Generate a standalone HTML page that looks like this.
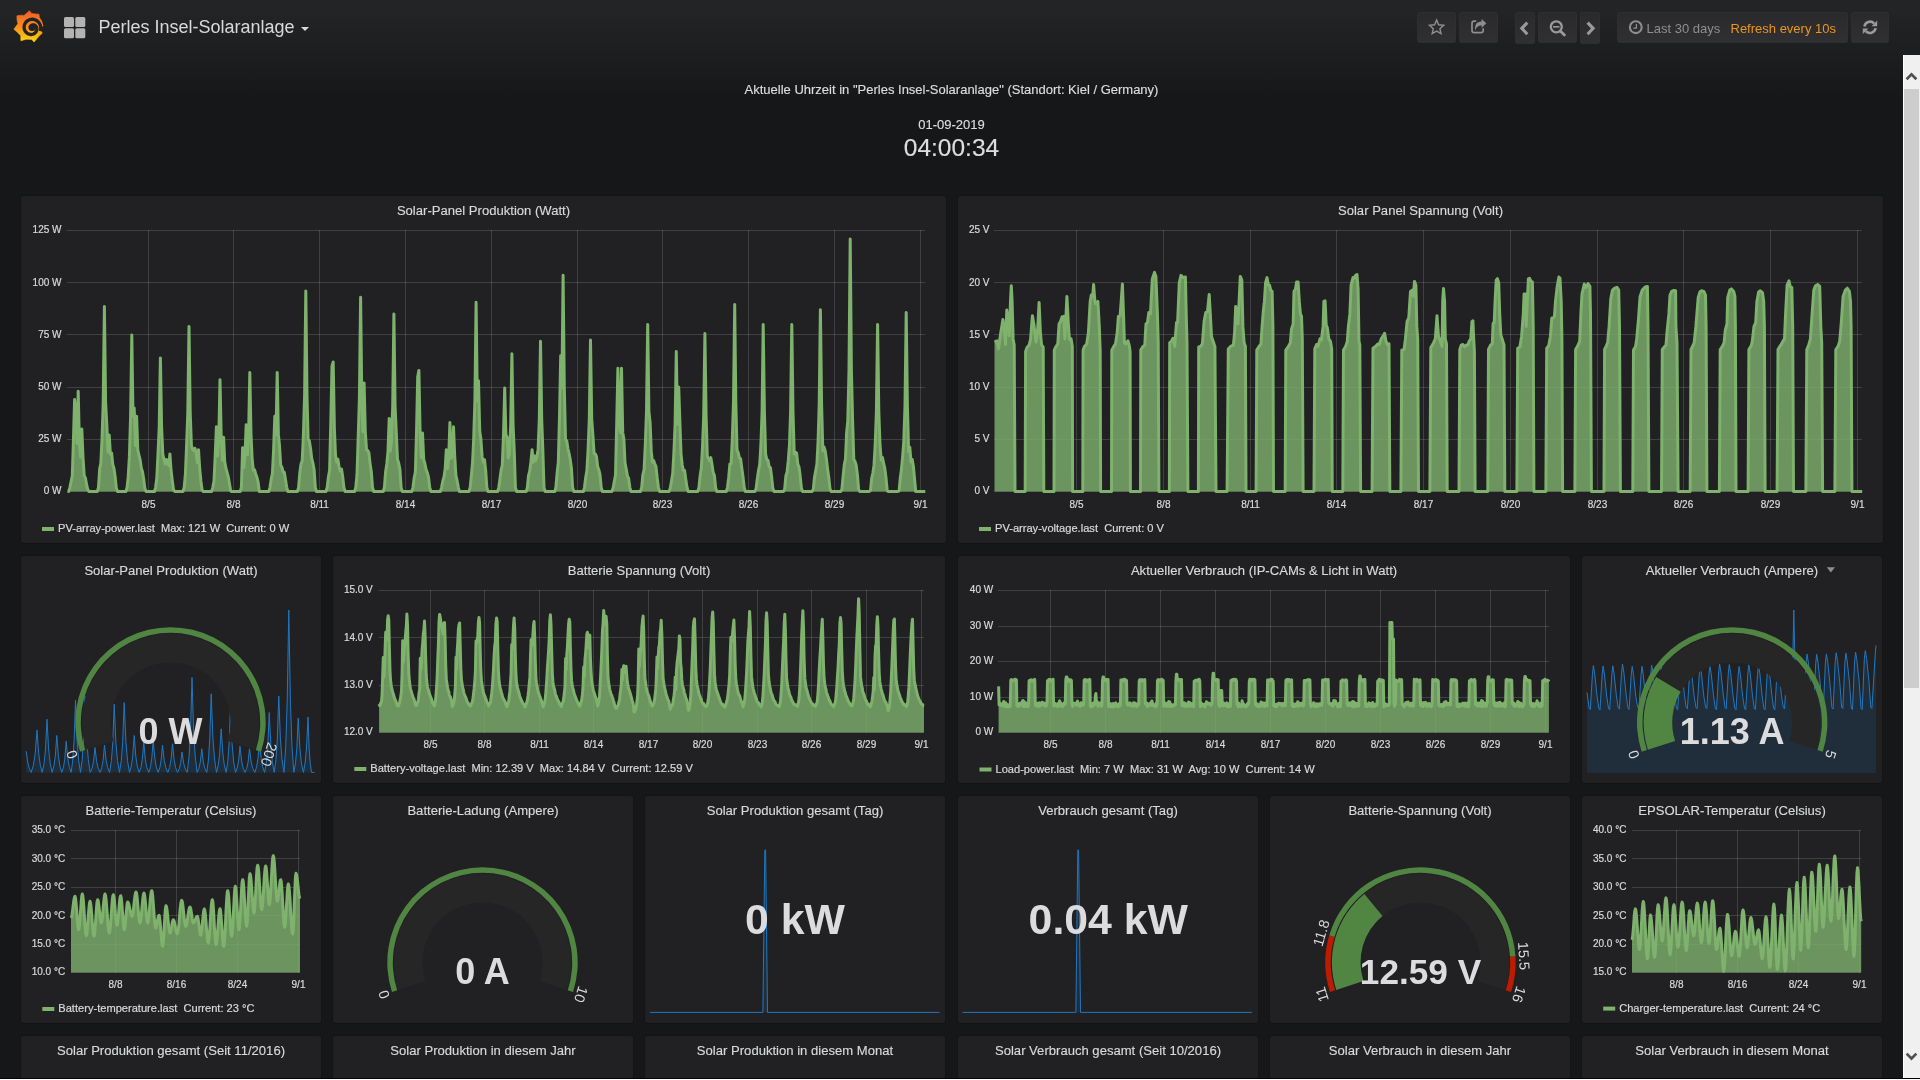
<!DOCTYPE html>
<html><head><meta charset="utf-8"><title>Grafana - Perles Insel-Solaranlage</title><style>
html,body{margin:0;padding:0;width:1920px;height:1080px;overflow:hidden;background:#161719;font-family:"Liberation Sans",sans-serif;color:#d8d9da}
#bg{position:absolute;left:0;top:0;width:1920px;height:1078px;background:linear-gradient(180deg,#222426 10px,#161719 100px)}
#page{position:absolute;left:0;top:0;width:1920px;height:1078px;overflow:hidden;will-change:transform}
.p{position:absolute;box-sizing:border-box;background:#212124;border:1px solid #141414;border-radius:3px}
.t{position:absolute;left:0;right:0;top:7px;text-align:center;font-size:13.08px;line-height:15px;color:#d8d9da;white-space:nowrap;-webkit-text-stroke:0.15px #d8d9da}
.nb{position:absolute;box-sizing:border-box;top:12px;height:31px;border:1px solid #2f2f32;border-radius:2px;background:linear-gradient(180deg,#2a2a2c,#303032)}
.nb svg{position:absolute}
#main{position:absolute;left:0;top:0}
text{font-family:"Liberation Sans",sans-serif}
.c{position:absolute;left:20px;width:1863px;text-align:center;white-space:nowrap;color:#dcddde;-webkit-text-stroke:0.15px #dcddde}

</style></head><body><div id="bg"></div><div id="page">
<div class="p" style="left:20px;top:195px;width:927px;height:349px"><div class="t">Solar-Panel Produktion (Watt)</div></div>
<div class="p" style="left:957px;top:195px;width:927px;height:349px"><div class="t">Solar Panel Spannung (Volt)</div></div>
<div class="p" style="left:20px;top:555px;width:302px;height:229px"><div class="t">Solar-Panel Produktion (Watt)</div></div>
<div class="p" style="left:332px;top:555px;width:614px;height:229px"><div class="t">Batterie Spannung (Volt)</div></div>
<div class="p" style="left:957px;top:555px;width:614px;height:229px"><div class="t">Aktueller Verbrauch (IP-CAMs &amp; Licht in Watt)</div></div>
<div class="p" style="left:1581px;top:555px;width:302px;height:229px"><div class="t">Aktueller Verbrauch (Ampere)</div></div>
<div class="p" style="left:20px;top:795px;width:302px;height:229px"><div class="t">Batterie-Temperatur (Celsius)</div></div>
<div class="p" style="left:332px;top:795px;width:302px;height:229px"><div class="t">Batterie-Ladung (Ampere)</div></div>
<div class="p" style="left:644px;top:795px;width:302px;height:229px"><div class="t">Solar Produktion gesamt (Tag)</div></div>
<div class="p" style="left:957px;top:795px;width:302px;height:229px"><div class="t">Verbrauch gesamt (Tag)</div></div>
<div class="p" style="left:1269px;top:795px;width:302px;height:229px"><div class="t">Batterie-Spannung (Volt)</div></div>
<div class="p" style="left:1581px;top:795px;width:302px;height:229px"><div class="t">EPSOLAR-Temperatur (Celsius)</div></div>
<div class="p" style="left:20px;top:1035px;width:302px;height:56px"><div class="t">Solar Produktion gesamt (Seit 11/2016)</div></div>
<div class="p" style="left:332px;top:1035px;width:302px;height:56px"><div class="t">Solar Produktion in diesem Jahr</div></div>
<div class="p" style="left:644px;top:1035px;width:302px;height:56px"><div class="t">Solar Produktion in diesem Monat</div></div>
<div class="p" style="left:957px;top:1035px;width:302px;height:56px"><div class="t">Solar Verbrauch gesamt (Seit 10/2016)</div></div>
<div class="p" style="left:1269px;top:1035px;width:302px;height:56px"><div class="t">Solar Verbrauch in diesem Jahr</div></div>
<div class="p" style="left:1581px;top:1035px;width:302px;height:56px"><div class="t">Solar Verbrauch in diesem Monat</div></div>
<div class="c" style="top:82px;font-size:13px;line-height:15px">Aktuelle Uhrzeit in "Perles Insel-Solaranlage" (Standort: Kiel / Germany)</div>
<div class="c" style="top:117px;font-size:13px;line-height:15px">01-09-2019</div>
<div class="c" style="top:133.7px;font-size:24.5px;line-height:28px">04:00:34</div>
<svg style="position:absolute;left:0;top:0" width="60" height="55"><defs><linearGradient id="lg" x1="0" y1="10.6" x2="0" y2="42.2" gradientUnits="userSpaceOnUse"><stop offset="0" stop-color="#f05a28"/><stop offset="0.5" stop-color="#f78d1e"/><stop offset="1" stop-color="#fdd70c"/></linearGradient></defs><path d="M29.29 10.73 L31.85 13.45 L35.68 13.88 L39.01 14.14 L39.43 17.54 L41.65 21.04 L43.01 25.81 L41.01 27.85 L40.88 29.98 L42.20 33.30 L39.30 35.86 L37.39 38.07 L34.06 42.03 L31.76 39.43 L26.31 39.18 L20.90 40.75 L20.69 35.60 L17.16 32.11 L13.83 29.21 L17.88 23.68 L17.03 19.67 L16.86 15.84 L20.78 15.16 L23.97 15.41 L26.74 13.11Z" fill="url(#lg)" stroke="url(#lg)" stroke-width="0.6" stroke-linejoin="round"/><path d="M40.31 31.06 L40.65 29.53 L40.73 27.99 L40.59 26.46 L40.21 24.99 L39.59 23.61 L38.74 22.37 L37.68 21.29 L36.47 20.43 L35.13 19.78 L33.70 19.39 L32.23 19.24 L30.77 19.38 L29.36 19.77 L28.06 20.39 L26.89 21.22 L25.89 22.23 L25.09 23.40 L24.50 24.68 L24.16 26.03 L24.05 27.40 L24.23 28.76 L24.64 30.05 L25.27 31.22 L26.08 32.25 L27.04 33.11 L28.12 33.78 L29.29 34.24 L30.49 34.48 L31.70 34.51 L32.86 34.25 L33.91 33.77 L34.84 33.13 L35.60 32.37 L36.19 31.51 L36.60 30.59 L36.82 29.65 L36.87 28.73 L36.75 27.85 L36.46 27.04 L36.05 26.34 L35.54 25.76 L34.96 25.32 L34.34 25.01 L33.71 24.84 L33.10 24.81 L32.53 24.89 L32.03 25.08 L31.61 25.34 L31.28 25.67 L31.06 26.03 L30.93 26.39 L30.90 26.75 L30.97 27.07 L31.10 27.34" fill="none" stroke="#222326" stroke-width="3.3" stroke-linecap="butt" stroke-linejoin="round"/><circle cx="32.06" cy="27.51" r="3.6" fill="#222326"/><path d="M27.38 29.55 Q29.29 32.11 33.34 31.34" fill="none" stroke="url(#lg)" stroke-width="1.1" stroke-linecap="round"/></svg>
<div style="position:absolute;left:98.5px;top:17px;font-size:18px;line-height:21px;color:#d8d9da;white-space:nowrap">Perles Insel-Solaranlage</div>
<div style="position:absolute;left:301px;top:27px;width:0;height:0;border-left:4px solid transparent;border-right:4px solid transparent;border-top:4px solid #d8d9da"></div>
<svg style="position:absolute;left:64px;top:17px" width="22" height="22"><g fill="#b3b3b3"><rect x="0" y="0" width="10" height="10" rx="1.5"/><rect x="11.3" y="0" width="10" height="10" rx="1.5"/><rect x="0" y="11.3" width="10" height="10" rx="1.5"/><rect x="11.3" y="11.3" width="10" height="10" rx="1.5"/></g></svg>
<div class="nb" style="left:1417px;width:39px;height:31px"></div>
<div class="nb" style="left:1459px;width:39px;height:31px"></div>
<div class="nb" style="left:1515px;width:20px;height:32px"></div>
<div class="nb" style="left:1538px;width:39px;height:31px"></div>
<div class="nb" style="left:1580px;width:20px;height:32px"></div>
<div class="nb" style="left:1617px;width:231px;height:31px"></div>
<div class="nb" style="left:1851px;width:38px;height:31px"></div>
<div style="position:absolute;left:1646.5px;top:20.5px;font-size:13px;line-height:15px;color:#8e8e8e;white-space:nowrap">Last 30 days</div>
<div style="position:absolute;left:1730.5px;top:20.5px;font-size:13px;line-height:15px;color:#eb9420;white-space:nowrap">Refresh every 10s</div>
<svg style="position:absolute;left:0;top:0" width="1920" height="55"><path d="M1436.60 20.10 L1438.66 24.77 L1443.73 25.28 L1439.93 28.68 L1441.01 33.67 L1436.60 31.10 L1432.19 33.67 L1433.27 28.68 L1429.47 25.28 L1434.54 24.77Z" fill="none" stroke="#8e8e8e" stroke-width="1.4" stroke-linejoin="miter"/><path d="M1483.2 28.2V30.4A2.2 2.2 0 0 1 1481 32.6H1474.2A2.2 2.2 0 0 1 1472 30.4V23.4A2.2 2.2 0 0 1 1474.2 21.2H1476.2" fill="none" stroke="#8e8e8e" stroke-width="1.7"/><path d="M1486.3 23.3L1481.6 18.9V21.6C1476.6 21.7 1474.6 24.8 1475.2 30.6C1476.3 27.1 1478 25.4 1481.6 25.3V27.9Z" fill="#8e8e8e"/><path d="M1527.3 22.6L1521.8 28.3L1527.3 34.2" fill="none" stroke="#9a9a9a" stroke-width="3.1"/><path d="M1587.6 22.6L1593.1 28.3L1587.6 34.2" fill="none" stroke="#9a9a9a" stroke-width="3.1"/><circle cx="1556.3" cy="26.8" r="5.5" fill="none" stroke="#9a9a9a" stroke-width="2.3"/><path d="M1560.3 30.9L1564.4 35" stroke="#9a9a9a" stroke-width="2.8" stroke-linecap="round"/><rect x="1553.1" y="26" width="6.4" height="1.6" fill="#9a9a9a"/><circle cx="1635.8" cy="27.2" r="5.9" fill="none" stroke="#8e8e8e" stroke-width="2.1"/><path d="M1636.4 23.9V28.1H1633.2" fill="none" stroke="#8e8e8e" stroke-width="1.3"/><path d="M1864.45 26.52 A5.6 5.6 0 0 1 1874.16 23.55" fill="none" stroke="#9a9a9a" stroke-width="2.6"/><path d="M1875.55 28.08 A5.6 5.6 0 0 1 1865.84 31.05" fill="none" stroke="#9a9a9a" stroke-width="2.6"/><path d="M1877.2 20.6V26.2H1871.6Z" fill="#9a9a9a"/><path d="M1862.8 34V28.4H1868.4Z" fill="#9a9a9a"/></svg>
<svg id="main" width="1920" height="1078" viewBox="0 0 1920 1078">
<g stroke="rgba(255,255,255,0.14)" stroke-width="1" fill="none" shape-rendering="crispEdges"><path d="M67 491.5H925"/><path d="M67 439.5H925"/><path d="M67 387.5H925"/><path d="M67 334.5H925"/><path d="M67 282.5H925"/><path d="M67 230.5H925"/><path d="M148.5 230V492"/><path d="M233.5 230V492"/><path d="M319.5 230V492"/><path d="M405.5 230V492"/><path d="M491.5 230V492"/><path d="M577.5 230V492"/><path d="M662.5 230V492"/><path d="M748.5 230V492"/><path d="M834.5 230V492"/><path d="M920.5 230V492"/></g>
<path d="M67.5 491.5 68.7 491.5 69.9 487.3 71.1 481.6 72.3 475.9 73.4 441 74.6 399.6 75.8 412.2 77 443.4 78.2 391.3 79.4 443.4 80.6 457 81.8 428.9 83 457 84.2 475.7 85.4 477.7 86.5 484.2 87.7 489.3 88.9 491.5 90.1 491.5 91.3 491.5 92.5 491.5 93.7 491.5 94.9 491.5 96.1 491.5 97.3 491.5 98.5 487.3 99.7 468.6 100.8 463.5 102 439.7 103.2 402.7 104.4 306.5 105.6 402.7 106.8 424.7 108 452.2 109.2 435.1 110.4 454.4 111.6 453 112.8 464.6 113.9 467.9 115.1 476.1 116.3 487.9 117.5 491.5 118.7 491.5 119.9 491.5 121.1 491.5 122.3 491.5 123.5 491.5 124.7 491.5 125.9 491.5 127.1 487.3 128.2 476.8 129.4 456.4 130.6 416.3 131.8 334.9 133 416.3 134.2 408 135.4 445.6 136.6 416.3 137.8 450.2 139 455.3 140.2 460.1 141.4 468.4 142.5 471.8 143.7 479.2 144.9 488.6 146.1 491.5 147.3 491.5 148.5 491.5 149.7 491.5 150.9 491.5 152.1 491.5 153.3 491.5 154.5 491.5 155.6 487.3 156.8 478.1 158 454.1 159.2 427.4 160.4 357.9 161.6 427.4 162.8 454.1 164 459.5 165.2 464.1 166.4 459.5 167.6 460.9 168.8 465.7 169.9 453.9 171.1 470.8 172.3 480.7 173.5 489.7 174.7 491.5 175.9 491.5 177.1 491.5 178.3 491.5 179.5 491.5 180.7 491.5 181.9 491.5 183 491.5 184.2 487.3 185.4 474.2 186.6 445.3 187.8 412.3 189 326.5 190.2 412.3 191.4 445.3 192.6 449.5 193.8 450.6 195 448.3 196.2 453.2 197.3 462.5 198.5 449.7 199.7 468.5 200.9 481 202.1 490.1 203.3 491.5 204.5 491.5 205.7 491.5 206.9 491.5 208.1 491.5 209.3 491.5 210.5 491.5 211.6 491.5 212.8 487.3 214 481.1 215.2 455.9 216.4 426.8 217.6 455.9 218.8 437.9 220 379.8 221.2 437.9 222.4 460.2 223.6 437.2 224.7 461.6 225.9 468.2 227.1 472.3 228.3 476.8 229.5 484 230.7 491.1 231.9 491.5 233.1 491.5 234.3 491.5 235.5 491.5 236.7 491.5 237.9 491.5 239 491.5 240.2 491.5 241.4 487.3 242.6 447.7 243.8 467.4 245 454.8 246.2 424.7 247.4 454.8 248.6 434.4 249.8 372.5 251 434.4 252.1 458.1 253.3 470.2 254.5 469.8 255.7 473.7 256.9 477.2 258.1 482 259.3 491.5 260.5 491.5 261.7 491.5 262.9 491.5 264.1 491.5 265.3 491.5 266.4 491.5 267.6 491.5 268.8 491.5 270 487.3 271.2 479.1 272.4 473.7 273.6 450.2 274.8 416.3 276 434.4 277.2 372.5 278.4 434.4 279.5 445.6 280.7 465.3 281.9 467.2 283.1 472 284.3 472.3 285.5 479.5 286.7 487.3 287.9 491.5 289.1 491.5 290.3 491.5 291.5 491.5 292.7 491.5 293.8 491.5 295 491.5 296.2 491.5 297.4 491.5 298.6 487.3 299.8 473 301 464 302.2 460.7 303.4 435.4 304.6 395.3 305.8 291.1 307 395.3 308.1 439.3 309.3 440.8 310.5 448 311.7 458.3 312.9 463 314.1 469.6 315.3 487.3 316.5 491.5 317.7 491.5 318.9 491.5 320.1 491.5 321.2 491.5 322.4 491.5 323.6 491.5 324.8 491.5 326 491.5 327.2 487.3 328.4 477 329.6 470.2 330.8 422.6 332 366.2 333.2 362 334.4 429.4 335.5 455.3 336.7 462.3 337.9 459.2 339.1 467.1 340.3 471 341.5 469.1 342.7 476.7 343.9 487.3 345.1 491.5 346.3 491.5 347.5 491.5 348.6 491.5 349.8 491.5 351 491.5 352.2 491.5 353.4 491.5 354.6 491.5 355.8 487.3 357 474.7 358.2 437.1 359.4 398.3 360.6 297.3 361.8 398.3 362.9 431.8 364.1 382.9 365.3 431.8 366.5 449.7 367.7 450.5 368.9 452.8 370.1 463.6 371.3 471.6 372.5 487.3 373.7 491.5 374.9 491.5 376.1 491.5 377.2 491.5 378.4 491.5 379.6 491.5 380.8 491.5 382 491.5 383.2 491.5 384.4 487.3 385.6 472 386.8 464 388 451.3 389.2 418.4 390.3 451.3 391.5 441.8 392.7 406.3 393.9 314 395.1 406.3 396.3 433 397.5 459.3 398.7 463.2 399.9 469.3 401.1 487.3 402.3 491.5 403.5 491.5 404.6 491.5 405.8 491.5 407 491.5 408.2 491.5 409.4 491.5 410.6 491.5 411.8 491.5 413 487.3 414.2 477.8 415.4 472 416.6 428.3 417.7 376.7 418.9 370.4 420.1 433.4 421.3 457.6 422.5 433 423.7 459.3 424.9 463.7 426.1 469.5 427.3 472.6 428.5 477.2 429.7 487.3 430.9 491.5 432 491.5 433.2 491.5 434.4 491.5 435.6 491.5 436.8 491.5 438 491.5 439.2 491.5 440.4 491.5 441.6 487.3 442.8 481 444 476.9 445.2 468.5 446.3 449.7 447.5 468.5 448.7 458.4 449.9 422.6 451.1 458.4 452.3 455.9 453.5 426.8 454.7 455.9 455.9 475.4 457.1 480.6 458.3 487.3 459.4 491.5 460.6 491.5 461.8 491.5 463 491.5 464.2 491.5 465.4 491.5 466.6 491.5 467.8 491.5 469 491.5 470.2 487.3 471.4 475.2 472.6 461.8 473.7 438.5 474.9 400.7 476.1 302.3 477.3 400.7 478.5 380.8 479.7 430.6 480.9 439.3 482.1 456.7 483.3 462.3 484.5 459.7 485.7 470.7 486.8 487.3 488 491.5 489.2 491.5 490.4 491.5 491.6 491.5 492.8 491.5 494 491.5 495.2 491.5 496.4 491.5 497.6 491.5 498.8 487.3 500 478.6 501.1 470.1 502.3 465 503.5 434.7 504.7 388.1 505.9 434.7 507.1 437.2 508.3 458 509.5 452.9 510.7 425.4 511.9 353.7 513.1 425.4 514.3 452.9 515.4 487.3 516.6 491.5 517.8 491.5 519 491.5 520.2 491.5 521.4 491.5 522.6 491.5 523.8 491.5 525 491.5 526.2 491.5 527.4 487.3 528.5 475.6 529.7 471.1 530.9 462 532.1 449.7 533.3 462.3 534.5 455.9 535.7 460.6 536.9 456.6 538.1 449.4 539.3 419.3 540.5 341.2 541.7 419.3 542.8 449.4 544 487.3 545.2 491.5 546.4 491.5 547.6 491.5 548.8 491.5 550 491.5 551.2 491.5 552.4 491.5 553.6 491.5 554.8 491.5 555.9 487.3 557.1 473.1 558.3 462.5 559.5 416.9 560.7 355.8 561.9 387.7 563.1 275.2 564.3 387.7 565.5 439.3 566.7 440.7 567.9 448.5 569.1 453.5 570.2 459.2 571.4 468 572.6 487.3 573.8 491.5 575 491.5 576.2 491.5 577.4 491.5 578.6 491.5 579.8 491.5 581 491.5 582.2 491.5 583.4 491.5 584.5 487.3 585.7 477.5 586.9 470.6 588.1 449.1 589.3 418.8 590.5 340.1 591.7 418.8 592.9 435.1 594.1 453.6 595.3 453.9 596.5 456.3 597.6 466.5 598.8 469.6 600 474.6 601.2 487.3 602.4 491.5 603.6 491.5 604.8 491.5 606 491.5 607.2 491.5 608.4 491.5 609.6 491.5 610.8 491.5 611.9 491.5 613.1 488.1 614.3 481.6 615.5 475 616.7 423.7 617.9 368.3 619.1 423.7 620.3 432.4 621.5 368.3 622.7 432.4 623.9 439.3 625 462.8 626.2 468.7 627.4 476 628.6 478.2 629.8 487.3 631 491.5 632.2 491.5 633.4 491.5 634.6 491.5 635.8 491.5 637 491.5 638.2 491.5 639.3 491.5 640.5 491.5 641.7 487.3 642.9 474.5 644.1 469.5 645.3 444.7 646.5 411.3 647.7 324.5 648.9 411.3 650.1 422.6 651.3 451.9 652.5 462.3 653.6 460.5 654.8 463.7 656 466.6 657.2 478 658.4 487.3 659.6 491.5 660.8 491.5 662 491.5 663.2 491.5 664.4 491.5 665.6 491.5 666.7 491.5 667.9 491.5 669.1 491.5 670.3 487.9 671.5 480.9 672.7 473.5 673.9 452.3 675.1 424.3 676.3 351.6 677.5 424.3 678.7 387.1 679.9 422.6 681 453.6 682.2 465 683.4 470.4 684.6 470.5 685.8 479.4 687 487.4 688.2 491.5 689.4 491.5 690.6 491.5 691.8 491.5 693 491.5 694.1 491.5 695.3 491.5 696.5 491.5 697.7 491.5 698.9 487.8 700.1 476 701.3 468.3 702.5 447.3 703.7 415.7 704.9 333.6 706.1 415.7 707.3 456.1 708.4 458.8 709.6 460.9 710.8 457.6 712 464.6 713.2 472.6 714.4 475.3 715.6 487.3 716.8 491.5 718 491.5 719.2 491.5 720.4 491.5 721.5 491.5 722.7 491.5 723.9 491.5 725.1 491.5 726.3 491.5 727.5 487.3 728.7 477.4 729.9 463.9 731.1 463.6 732.3 439.2 733.5 401.8 734.7 304.6 735.8 401.8 737 449.6 738.2 452.7 739.4 457.9 740.6 458.8 741.8 468.1 743 476.8 744.2 487.3 745.4 491.5 746.6 491.5 747.8 491.5 749 491.5 750.1 491.5 751.3 491.5 752.5 491.5 753.7 491.5 754.9 491.5 756.1 488.7 757.3 478.6 758.5 470.6 759.7 464.6 760.9 444.7 762.1 411.3 763.2 324.5 764.4 411.3 765.6 454.1 766.8 459.6 768 460.3 769.2 466.9 770.4 467.5 771.6 476.7 772.8 488.1 774 491.5 775.2 491.5 776.4 491.5 777.5 491.5 778.7 491.5 779.9 491.5 781.1 491.5 782.3 491.5 783.5 491.5 784.7 488.8 785.9 475.7 787.1 472 788.3 460.2 789.5 444.7 790.6 411.3 791.8 324.5 793 411.3 794.2 454.1 795.4 452.2 796.6 453 797.8 464.2 799 467 800.2 476.4 801.4 488.2 802.6 491.5 803.8 491.5 804.9 491.5 806.1 491.5 807.3 491.5 808.5 491.5 809.7 491.5 810.9 491.5 812.1 491.5 813.3 489.1 814.5 477.2 815.7 470.8 816.9 464 818.1 440.6 819.2 404.3 820.4 309.8 821.6 404.3 822.8 450.8 824 446.9 825.2 451 826.4 458.9 827.6 469.1 828.8 477.6 830 489 831.2 491.5 832.3 491.5 833.5 491.5 834.7 491.5 835.9 491.5 837.1 491.5 838.3 491.5 839.5 491.5 840.7 491.5 841.9 489.3 843.1 476.3 844.3 464.7 845.5 458.6 846.6 433 847.8 420.8 849 370.2 850.2 238.9 851.4 370.2 852.6 420.8 853.8 459.5 855 461.4 856.2 465.3 857.4 474.7 858.6 489.4 859.7 491.5 860.9 491.5 862.1 491.5 863.3 491.5 864.5 491.5 865.7 491.5 866.9 491.5 868.1 491.5 869.3 491.5 870.5 490.4 871.7 478.1 872.9 473 874 465.2 875.2 444.7 876.4 411.3 877.6 324.5 878.8 411.3 880 444.7 881.2 460.2 882.4 457.3 883.6 463.1 884.8 468.4 886 477.7 887.2 490.7 888.3 491.5 889.5 491.5 890.7 491.5 891.9 491.5 893.1 491.5 894.3 491.5 895.5 491.5 896.7 491.5 897.9 491.5 899.1 490.9 900.3 477.9 901.4 469.6 902.6 456.9 903.8 441.4 905 405.6 906.2 312.6 907.4 405.6 908.6 451.4 909.8 447.2 911 461.9 912.2 459.4 913.4 466.6 914.6 479.3 915.7 491.5 916.9 491.5 918.1 491.5 919.3 491.5 920.5 491.5 921.7 491.5 922.9 491.5 924.1 491.5 925.3 491.5 L925.3 491.5 L67.5 491.5 Z" fill="#7eb26d" fill-opacity="0.8" stroke="none"/>
<path d="M67.5 491.5 68.7 491.5 69.9 487.3 71.1 481.6 72.3 475.9 73.4 441 74.6 399.6 75.8 412.2 77 443.4 78.2 391.3 79.4 443.4 80.6 457 81.8 428.9 83 457 84.2 475.7 85.4 477.7 86.5 484.2 87.7 489.3 88.9 491.5 90.1 491.5 91.3 491.5 92.5 491.5 93.7 491.5 94.9 491.5 96.1 491.5 97.3 491.5 98.5 487.3 99.7 468.6 100.8 463.5 102 439.7 103.2 402.7 104.4 306.5 105.6 402.7 106.8 424.7 108 452.2 109.2 435.1 110.4 454.4 111.6 453 112.8 464.6 113.9 467.9 115.1 476.1 116.3 487.9 117.5 491.5 118.7 491.5 119.9 491.5 121.1 491.5 122.3 491.5 123.5 491.5 124.7 491.5 125.9 491.5 127.1 487.3 128.2 476.8 129.4 456.4 130.6 416.3 131.8 334.9 133 416.3 134.2 408 135.4 445.6 136.6 416.3 137.8 450.2 139 455.3 140.2 460.1 141.4 468.4 142.5 471.8 143.7 479.2 144.9 488.6 146.1 491.5 147.3 491.5 148.5 491.5 149.7 491.5 150.9 491.5 152.1 491.5 153.3 491.5 154.5 491.5 155.6 487.3 156.8 478.1 158 454.1 159.2 427.4 160.4 357.9 161.6 427.4 162.8 454.1 164 459.5 165.2 464.1 166.4 459.5 167.6 460.9 168.8 465.7 169.9 453.9 171.1 470.8 172.3 480.7 173.5 489.7 174.7 491.5 175.9 491.5 177.1 491.5 178.3 491.5 179.5 491.5 180.7 491.5 181.9 491.5 183 491.5 184.2 487.3 185.4 474.2 186.6 445.3 187.8 412.3 189 326.5 190.2 412.3 191.4 445.3 192.6 449.5 193.8 450.6 195 448.3 196.2 453.2 197.3 462.5 198.5 449.7 199.7 468.5 200.9 481 202.1 490.1 203.3 491.5 204.5 491.5 205.7 491.5 206.9 491.5 208.1 491.5 209.3 491.5 210.5 491.5 211.6 491.5 212.8 487.3 214 481.1 215.2 455.9 216.4 426.8 217.6 455.9 218.8 437.9 220 379.8 221.2 437.9 222.4 460.2 223.6 437.2 224.7 461.6 225.9 468.2 227.1 472.3 228.3 476.8 229.5 484 230.7 491.1 231.9 491.5 233.1 491.5 234.3 491.5 235.5 491.5 236.7 491.5 237.9 491.5 239 491.5 240.2 491.5 241.4 487.3 242.6 447.7 243.8 467.4 245 454.8 246.2 424.7 247.4 454.8 248.6 434.4 249.8 372.5 251 434.4 252.1 458.1 253.3 470.2 254.5 469.8 255.7 473.7 256.9 477.2 258.1 482 259.3 491.5 260.5 491.5 261.7 491.5 262.9 491.5 264.1 491.5 265.3 491.5 266.4 491.5 267.6 491.5 268.8 491.5 270 487.3 271.2 479.1 272.4 473.7 273.6 450.2 274.8 416.3 276 434.4 277.2 372.5 278.4 434.4 279.5 445.6 280.7 465.3 281.9 467.2 283.1 472 284.3 472.3 285.5 479.5 286.7 487.3 287.9 491.5 289.1 491.5 290.3 491.5 291.5 491.5 292.7 491.5 293.8 491.5 295 491.5 296.2 491.5 297.4 491.5 298.6 487.3 299.8 473 301 464 302.2 460.7 303.4 435.4 304.6 395.3 305.8 291.1 307 395.3 308.1 439.3 309.3 440.8 310.5 448 311.7 458.3 312.9 463 314.1 469.6 315.3 487.3 316.5 491.5 317.7 491.5 318.9 491.5 320.1 491.5 321.2 491.5 322.4 491.5 323.6 491.5 324.8 491.5 326 491.5 327.2 487.3 328.4 477 329.6 470.2 330.8 422.6 332 366.2 333.2 362 334.4 429.4 335.5 455.3 336.7 462.3 337.9 459.2 339.1 467.1 340.3 471 341.5 469.1 342.7 476.7 343.9 487.3 345.1 491.5 346.3 491.5 347.5 491.5 348.6 491.5 349.8 491.5 351 491.5 352.2 491.5 353.4 491.5 354.6 491.5 355.8 487.3 357 474.7 358.2 437.1 359.4 398.3 360.6 297.3 361.8 398.3 362.9 431.8 364.1 382.9 365.3 431.8 366.5 449.7 367.7 450.5 368.9 452.8 370.1 463.6 371.3 471.6 372.5 487.3 373.7 491.5 374.9 491.5 376.1 491.5 377.2 491.5 378.4 491.5 379.6 491.5 380.8 491.5 382 491.5 383.2 491.5 384.4 487.3 385.6 472 386.8 464 388 451.3 389.2 418.4 390.3 451.3 391.5 441.8 392.7 406.3 393.9 314 395.1 406.3 396.3 433 397.5 459.3 398.7 463.2 399.9 469.3 401.1 487.3 402.3 491.5 403.5 491.5 404.6 491.5 405.8 491.5 407 491.5 408.2 491.5 409.4 491.5 410.6 491.5 411.8 491.5 413 487.3 414.2 477.8 415.4 472 416.6 428.3 417.7 376.7 418.9 370.4 420.1 433.4 421.3 457.6 422.5 433 423.7 459.3 424.9 463.7 426.1 469.5 427.3 472.6 428.5 477.2 429.7 487.3 430.9 491.5 432 491.5 433.2 491.5 434.4 491.5 435.6 491.5 436.8 491.5 438 491.5 439.2 491.5 440.4 491.5 441.6 487.3 442.8 481 444 476.9 445.2 468.5 446.3 449.7 447.5 468.5 448.7 458.4 449.9 422.6 451.1 458.4 452.3 455.9 453.5 426.8 454.7 455.9 455.9 475.4 457.1 480.6 458.3 487.3 459.4 491.5 460.6 491.5 461.8 491.5 463 491.5 464.2 491.5 465.4 491.5 466.6 491.5 467.8 491.5 469 491.5 470.2 487.3 471.4 475.2 472.6 461.8 473.7 438.5 474.9 400.7 476.1 302.3 477.3 400.7 478.5 380.8 479.7 430.6 480.9 439.3 482.1 456.7 483.3 462.3 484.5 459.7 485.7 470.7 486.8 487.3 488 491.5 489.2 491.5 490.4 491.5 491.6 491.5 492.8 491.5 494 491.5 495.2 491.5 496.4 491.5 497.6 491.5 498.8 487.3 500 478.6 501.1 470.1 502.3 465 503.5 434.7 504.7 388.1 505.9 434.7 507.1 437.2 508.3 458 509.5 452.9 510.7 425.4 511.9 353.7 513.1 425.4 514.3 452.9 515.4 487.3 516.6 491.5 517.8 491.5 519 491.5 520.2 491.5 521.4 491.5 522.6 491.5 523.8 491.5 525 491.5 526.2 491.5 527.4 487.3 528.5 475.6 529.7 471.1 530.9 462 532.1 449.7 533.3 462.3 534.5 455.9 535.7 460.6 536.9 456.6 538.1 449.4 539.3 419.3 540.5 341.2 541.7 419.3 542.8 449.4 544 487.3 545.2 491.5 546.4 491.5 547.6 491.5 548.8 491.5 550 491.5 551.2 491.5 552.4 491.5 553.6 491.5 554.8 491.5 555.9 487.3 557.1 473.1 558.3 462.5 559.5 416.9 560.7 355.8 561.9 387.7 563.1 275.2 564.3 387.7 565.5 439.3 566.7 440.7 567.9 448.5 569.1 453.5 570.2 459.2 571.4 468 572.6 487.3 573.8 491.5 575 491.5 576.2 491.5 577.4 491.5 578.6 491.5 579.8 491.5 581 491.5 582.2 491.5 583.4 491.5 584.5 487.3 585.7 477.5 586.9 470.6 588.1 449.1 589.3 418.8 590.5 340.1 591.7 418.8 592.9 435.1 594.1 453.6 595.3 453.9 596.5 456.3 597.6 466.5 598.8 469.6 600 474.6 601.2 487.3 602.4 491.5 603.6 491.5 604.8 491.5 606 491.5 607.2 491.5 608.4 491.5 609.6 491.5 610.8 491.5 611.9 491.5 613.1 488.1 614.3 481.6 615.5 475 616.7 423.7 617.9 368.3 619.1 423.7 620.3 432.4 621.5 368.3 622.7 432.4 623.9 439.3 625 462.8 626.2 468.7 627.4 476 628.6 478.2 629.8 487.3 631 491.5 632.2 491.5 633.4 491.5 634.6 491.5 635.8 491.5 637 491.5 638.2 491.5 639.3 491.5 640.5 491.5 641.7 487.3 642.9 474.5 644.1 469.5 645.3 444.7 646.5 411.3 647.7 324.5 648.9 411.3 650.1 422.6 651.3 451.9 652.5 462.3 653.6 460.5 654.8 463.7 656 466.6 657.2 478 658.4 487.3 659.6 491.5 660.8 491.5 662 491.5 663.2 491.5 664.4 491.5 665.6 491.5 666.7 491.5 667.9 491.5 669.1 491.5 670.3 487.9 671.5 480.9 672.7 473.5 673.9 452.3 675.1 424.3 676.3 351.6 677.5 424.3 678.7 387.1 679.9 422.6 681 453.6 682.2 465 683.4 470.4 684.6 470.5 685.8 479.4 687 487.4 688.2 491.5 689.4 491.5 690.6 491.5 691.8 491.5 693 491.5 694.1 491.5 695.3 491.5 696.5 491.5 697.7 491.5 698.9 487.8 700.1 476 701.3 468.3 702.5 447.3 703.7 415.7 704.9 333.6 706.1 415.7 707.3 456.1 708.4 458.8 709.6 460.9 710.8 457.6 712 464.6 713.2 472.6 714.4 475.3 715.6 487.3 716.8 491.5 718 491.5 719.2 491.5 720.4 491.5 721.5 491.5 722.7 491.5 723.9 491.5 725.1 491.5 726.3 491.5 727.5 487.3 728.7 477.4 729.9 463.9 731.1 463.6 732.3 439.2 733.5 401.8 734.7 304.6 735.8 401.8 737 449.6 738.2 452.7 739.4 457.9 740.6 458.8 741.8 468.1 743 476.8 744.2 487.3 745.4 491.5 746.6 491.5 747.8 491.5 749 491.5 750.1 491.5 751.3 491.5 752.5 491.5 753.7 491.5 754.9 491.5 756.1 488.7 757.3 478.6 758.5 470.6 759.7 464.6 760.9 444.7 762.1 411.3 763.2 324.5 764.4 411.3 765.6 454.1 766.8 459.6 768 460.3 769.2 466.9 770.4 467.5 771.6 476.7 772.8 488.1 774 491.5 775.2 491.5 776.4 491.5 777.5 491.5 778.7 491.5 779.9 491.5 781.1 491.5 782.3 491.5 783.5 491.5 784.7 488.8 785.9 475.7 787.1 472 788.3 460.2 789.5 444.7 790.6 411.3 791.8 324.5 793 411.3 794.2 454.1 795.4 452.2 796.6 453 797.8 464.2 799 467 800.2 476.4 801.4 488.2 802.6 491.5 803.8 491.5 804.9 491.5 806.1 491.5 807.3 491.5 808.5 491.5 809.7 491.5 810.9 491.5 812.1 491.5 813.3 489.1 814.5 477.2 815.7 470.8 816.9 464 818.1 440.6 819.2 404.3 820.4 309.8 821.6 404.3 822.8 450.8 824 446.9 825.2 451 826.4 458.9 827.6 469.1 828.8 477.6 830 489 831.2 491.5 832.3 491.5 833.5 491.5 834.7 491.5 835.9 491.5 837.1 491.5 838.3 491.5 839.5 491.5 840.7 491.5 841.9 489.3 843.1 476.3 844.3 464.7 845.5 458.6 846.6 433 847.8 420.8 849 370.2 850.2 238.9 851.4 370.2 852.6 420.8 853.8 459.5 855 461.4 856.2 465.3 857.4 474.7 858.6 489.4 859.7 491.5 860.9 491.5 862.1 491.5 863.3 491.5 864.5 491.5 865.7 491.5 866.9 491.5 868.1 491.5 869.3 491.5 870.5 490.4 871.7 478.1 872.9 473 874 465.2 875.2 444.7 876.4 411.3 877.6 324.5 878.8 411.3 880 444.7 881.2 460.2 882.4 457.3 883.6 463.1 884.8 468.4 886 477.7 887.2 490.7 888.3 491.5 889.5 491.5 890.7 491.5 891.9 491.5 893.1 491.5 894.3 491.5 895.5 491.5 896.7 491.5 897.9 491.5 899.1 490.9 900.3 477.9 901.4 469.6 902.6 456.9 903.8 441.4 905 405.6 906.2 312.6 907.4 405.6 908.6 451.4 909.8 447.2 911 461.9 912.2 459.4 913.4 466.6 914.6 479.3 915.7 491.5 916.9 491.5 918.1 491.5 919.3 491.5 920.5 491.5 921.7 491.5 922.9 491.5 924.1 491.5 925.3 491.5" fill="none" stroke="#7eb26d" stroke-width="3" stroke-linejoin="round" stroke-linecap="butt"/>
<g font-size="10" fill="#d8d9da" stroke="#d8d9da" stroke-width="0.2"><text x="61.5" y="494.4" text-anchor="end">0 W</text><text x="61.5" y="442.2" text-anchor="end">25 W</text><text x="61.5" y="390" text-anchor="end">50 W</text><text x="61.5" y="337.8" text-anchor="end">75 W</text><text x="61.5" y="285.6" text-anchor="end">100 W</text><text x="61.5" y="233.4" text-anchor="end">125 W</text><text x="148.5" y="507.9" text-anchor="middle">8/5</text><text x="233.5" y="507.9" text-anchor="middle">8/8</text><text x="319.5" y="507.9" text-anchor="middle">8/11</text><text x="405.5" y="507.9" text-anchor="middle">8/14</text><text x="491.5" y="507.9" text-anchor="middle">8/17</text><text x="577.5" y="507.9" text-anchor="middle">8/20</text><text x="662.5" y="507.9" text-anchor="middle">8/23</text><text x="748.5" y="507.9" text-anchor="middle">8/26</text><text x="834.5" y="507.9" text-anchor="middle">8/29</text><text x="920.5" y="507.9" text-anchor="middle">9/1</text></g>
<rect x="42" y="527" width="12" height="4" fill="#7eb26d"/>
<text x="58" y="532.1" font-size="11.1" fill="#d8d9da" stroke="#d8d9da" stroke-width="0.2" xml:space="preserve">PV-array-power.last  Max: 121 W  Current: 0 W</text>
<g stroke="rgba(255,255,255,0.14)" stroke-width="1" fill="none" shape-rendering="crispEdges"><path d="M994 491.5H1862"/><path d="M994 439.5H1862"/><path d="M994 387.5H1862"/><path d="M994 334.5H1862"/><path d="M994 282.5H1862"/><path d="M994 230.5H1862"/><path d="M1076.5 230V492"/><path d="M1163.5 230V492"/><path d="M1250.5 230V492"/><path d="M1336.5 230V492"/><path d="M1423.5 230V492"/><path d="M1510.5 230V492"/><path d="M1597.5 230V492"/><path d="M1683.5 230V492"/><path d="M1770.5 230V492"/><path d="M1857.5 230V492"/></g>
<path d="M994.5 342 996.9 340.8 998.5 348.9 1000.6 333.9 1002.9 319.5 1004 326.4 1005.5 344.5 1006.8 310.1 1008.1 321.4 1009.3 335.8 1010.5 301.4 1011.3 285.8 1012.1 301.4 1013.1 338.9 1014.2 345.1 1015 491.5 1025.2 491.5 1025.6 351.4 1027 347.6 1029.2 345.1 1030.6 338.9 1032.4 315.8 1034 325.1 1036.1 342 1037.5 332.6 1039.1 302.4 1040.4 332.6 1041.6 345.1 1043.2 347 1043.8 491.5 1054 491.5 1054.3 350.1 1055.7 347 1057.8 343.9 1059.1 323.9 1060.5 321.4 1062 317 1063.7 316.4 1064.9 338.9 1066.9 296.4 1068.5 326.4 1069.4 339.5 1071.1 338.9 1072.3 346.4 1072.6 491.5 1082.8 491.5 1083.1 350.1 1084.5 346.4 1086.7 343.9 1088.4 332.6 1090.2 301.4 1091.3 295.1 1092.7 296.4 1093.6 284.5 1094.9 301.4 1095.8 303.9 1097.9 301.4 1099.3 326.4 1100.2 351.4 1100.6 491.5 1111.5 491.5 1111.8 350.1 1113.8 346.4 1115.5 343.9 1117.2 332.6 1118.4 316.4 1120.1 315.8 1121.2 301.4 1122.4 284.1 1123.5 313.9 1124.4 342.6 1125.8 343.9 1127.9 340.8 1129.2 345.1 1130.1 351.4 1130.4 491.5 1140.5 491.5 1140.8 350.1 1142.6 347 1144.8 345.1 1146 323.9 1147.5 322.6 1148.8 312.6 1150.5 313.9 1152.3 278.9 1154.5 272.4 1155.9 276.4 1157.4 313.9 1158.2 342.6 1158.9 491.5 1169.4 491.5 1169.7 342.6 1171.3 341.4 1173 338.2 1174.7 346.4 1176.5 322.6 1177.6 322.6 1179.3 282.6 1181 275.4 1183.1 277.6 1185.4 277 1186.2 313.9 1187 343.9 1187.9 491.5 1198.4 491.5 1198.7 347 1200.6 346.4 1202.4 343.9 1204.1 321.4 1205.8 312.6 1207.5 311.4 1209.2 294.5 1210.3 313.9 1211.5 336.4 1213.2 341.4 1214.9 346.4 1216 491.5 1227.1 491.5 1228.3 348.9 1230.6 346.4 1233.4 345.1 1234.6 332.6 1235.7 306.4 1237.2 321.4 1238 323.9 1239.1 301.4 1240.3 276.4 1241.8 280.1 1242.9 326.4 1244.1 342.6 1245.4 346.4 1246 491.5 1256.1 491.5 1256.8 350.1 1258.7 347 1261 343.9 1262.1 326.4 1263.3 311.4 1264.4 301.4 1265.6 282.6 1267 277.6 1268.4 285.1 1269.5 285.1 1270.7 290.1 1272.1 291.4 1272.9 326.4 1273.5 491.5 1285.2 491.5 1285.8 350.1 1288.1 347 1290.4 342.6 1291.5 328.9 1293.2 323.9 1294 291.4 1295.5 288.9 1296.6 282 1298.1 282 1299.3 301.4 1300.4 313.9 1301.5 316.4 1302.3 338.9 1303.1 491.5 1314 491.5 1314.8 348.9 1316.6 344.5 1318 346.4 1320 338.9 1321.4 340.1 1323.1 326.4 1323.9 301.4 1325.1 300.8 1326.2 325.1 1327.3 327.6 1328.8 338.9 1330.5 341.4 1331.7 348.9 1332.2 491.5 1342.8 491.5 1343.5 350.1 1345.6 346.4 1347.3 341.4 1348.4 326.4 1349.9 313.9 1351.1 285.1 1353 277.6 1354.5 278.2 1355.3 275.8 1357 274.5 1358.1 288.9 1359 341.4 1359.8 345.1 1360.6 491.5 1372.1 491.5 1373 348.2 1375.5 346.4 1377.8 343.9 1379.2 344.5 1381.2 338.9 1382.9 336.4 1384.6 333.2 1386 341.4 1387.5 344.5 1389 343.9 1389.8 491.5 1400.9 491.5 1401.8 350.1 1404.1 349.5 1405.4 338.9 1407.1 321.4 1408.8 317.6 1410.5 291.4 1412.2 290.1 1413.4 296.4 1414.5 281.4 1415.9 285.1 1416.8 326.4 1417.7 338.9 1418.5 491.5 1429.9 491.5 1430.8 347.6 1433.1 343.9 1435.3 338.9 1437 315.8 1438.5 336.4 1440.4 341.4 1442.1 346.4 1442.7 301.4 1443.5 288.6 1444.6 301.4 1445.3 338.9 1446.5 343.9 1447.2 491.5 1459 491.5 1459.8 349.5 1461.3 345.1 1462.9 344.5 1464.6 347 1466.3 345.1 1468 345.1 1469.1 341.4 1470.8 338.9 1472 321.4 1472.9 320.8 1473.7 338.9 1474.4 351.4 1475.1 491.5 1487.8 491.5 1488.5 349.5 1490.6 345.1 1492.3 343.9 1493.1 323.2 1494.2 322.6 1495.1 301.4 1496.2 280.1 1497.4 278.6 1498.7 282.6 1499.7 313.9 1500.8 335.1 1502.5 340.1 1504 345.1 1504.8 491.5 1516.9 491.5 1517.7 348.2 1519.9 347 1521.6 336.4 1523.3 313.9 1524.1 293.9 1525.3 293.9 1526.2 326.4 1527.3 301.4 1528.4 278.9 1529.6 278.2 1530.9 281.4 1532.4 282 1533.2 326.4 1533.9 491.5 1545.9 491.5 1546.7 348.2 1548.7 345.8 1550.4 336.4 1551.8 318.2 1553.2 317.6 1554.4 317 1555.5 301.4 1557.2 286.4 1558.9 277 1560 278.2 1561.2 301.4 1561.9 338.9 1562.6 491.5 1574.9 491.5 1575.6 349.5 1577.5 346.4 1579.7 341.4 1580.9 313.9 1582 293.9 1584.3 284.1 1586 287.6 1588 283.6 1589.9 286.4 1590.5 313.9 1591.4 491.5 1604 491.5 1604.6 349.5 1606.3 345.8 1607.7 342.6 1609.1 326.4 1610.8 298.9 1612.5 290.1 1614.7 288.2 1617 287.4 1618.7 290.1 1619.5 326.4 1620.4 491.5 1632.8 491.5 1633.5 350.1 1635.6 346.4 1636.7 338.9 1638.4 320.1 1640.1 296.4 1642.3 290.1 1645.2 287 1647.4 286.6 1648 326.4 1648.9 491.5 1661.5 491.5 1662.3 349.5 1664.3 347 1666 345.1 1667.2 330.1 1668.9 313.9 1670 295.1 1671.7 291.4 1673.9 290.4 1675.6 290.8 1675.9 326.4 1677 342.6 1678.1 491.5 1690.2 491.5 1691 349.5 1692.9 345.8 1694.2 342.6 1695.9 326.4 1698.2 297.6 1699.9 292 1701.6 290.8 1703.8 291.4 1705.5 295.1 1706.1 326.4 1706.9 491.5 1719.4 491.5 1720.2 349.5 1722.4 346.4 1724.1 342.6 1725.3 330.1 1727 323.9 1727.7 297.6 1729.8 290.1 1731.5 288.9 1733.7 291.4 1734.9 296.4 1735.4 326.4 1736 491.5 1748.1 491.5 1748.9 349.5 1751.2 345.8 1752.3 341.4 1754 326.4 1755.7 322.6 1756.9 301.4 1758.6 292 1760.3 290.8 1762.5 292.6 1763.7 301.4 1764.4 326.4 1765.1 491.5 1777.1 491.5 1778 349.5 1779.9 346.4 1781.6 343.9 1782.8 341.4 1784.5 338.9 1785.6 313.9 1787.1 285.1 1789 280.8 1790.1 286.4 1791.8 287.6 1792.7 326.4 1793.5 491.5 1805.9 491.5 1806.8 349.5 1808.7 345.1 1810.4 338.9 1812.1 313.9 1813.8 290.1 1815.5 285.8 1817.8 284.5 1819.7 286.4 1820.8 326.4 1821.7 342.6 1822.6 491.5 1834.9 491.5 1835.8 349.5 1838 346.4 1839.7 341.4 1841.4 321.4 1843.1 296.4 1845.4 290.1 1847.3 288.2 1849.4 291.4 1850.5 301.4 1851.1 326.4 1851.9 491.5 1862.2 491.5 L1862.2 491.5 L994.5 491.5 Z" fill="#7eb26d" fill-opacity="0.8" stroke="none"/>
<path d="M994.5 342 996.9 340.8 998.5 348.9 1000.6 333.9 1002.9 319.5 1004 326.4 1005.5 344.5 1006.8 310.1 1008.1 321.4 1009.3 335.8 1010.5 301.4 1011.3 285.8 1012.1 301.4 1013.1 338.9 1014.2 345.1 1015 491.5 1025.2 491.5 1025.6 351.4 1027 347.6 1029.2 345.1 1030.6 338.9 1032.4 315.8 1034 325.1 1036.1 342 1037.5 332.6 1039.1 302.4 1040.4 332.6 1041.6 345.1 1043.2 347 1043.8 491.5 1054 491.5 1054.3 350.1 1055.7 347 1057.8 343.9 1059.1 323.9 1060.5 321.4 1062 317 1063.7 316.4 1064.9 338.9 1066.9 296.4 1068.5 326.4 1069.4 339.5 1071.1 338.9 1072.3 346.4 1072.6 491.5 1082.8 491.5 1083.1 350.1 1084.5 346.4 1086.7 343.9 1088.4 332.6 1090.2 301.4 1091.3 295.1 1092.7 296.4 1093.6 284.5 1094.9 301.4 1095.8 303.9 1097.9 301.4 1099.3 326.4 1100.2 351.4 1100.6 491.5 1111.5 491.5 1111.8 350.1 1113.8 346.4 1115.5 343.9 1117.2 332.6 1118.4 316.4 1120.1 315.8 1121.2 301.4 1122.4 284.1 1123.5 313.9 1124.4 342.6 1125.8 343.9 1127.9 340.8 1129.2 345.1 1130.1 351.4 1130.4 491.5 1140.5 491.5 1140.8 350.1 1142.6 347 1144.8 345.1 1146 323.9 1147.5 322.6 1148.8 312.6 1150.5 313.9 1152.3 278.9 1154.5 272.4 1155.9 276.4 1157.4 313.9 1158.2 342.6 1158.9 491.5 1169.4 491.5 1169.7 342.6 1171.3 341.4 1173 338.2 1174.7 346.4 1176.5 322.6 1177.6 322.6 1179.3 282.6 1181 275.4 1183.1 277.6 1185.4 277 1186.2 313.9 1187 343.9 1187.9 491.5 1198.4 491.5 1198.7 347 1200.6 346.4 1202.4 343.9 1204.1 321.4 1205.8 312.6 1207.5 311.4 1209.2 294.5 1210.3 313.9 1211.5 336.4 1213.2 341.4 1214.9 346.4 1216 491.5 1227.1 491.5 1228.3 348.9 1230.6 346.4 1233.4 345.1 1234.6 332.6 1235.7 306.4 1237.2 321.4 1238 323.9 1239.1 301.4 1240.3 276.4 1241.8 280.1 1242.9 326.4 1244.1 342.6 1245.4 346.4 1246 491.5 1256.1 491.5 1256.8 350.1 1258.7 347 1261 343.9 1262.1 326.4 1263.3 311.4 1264.4 301.4 1265.6 282.6 1267 277.6 1268.4 285.1 1269.5 285.1 1270.7 290.1 1272.1 291.4 1272.9 326.4 1273.5 491.5 1285.2 491.5 1285.8 350.1 1288.1 347 1290.4 342.6 1291.5 328.9 1293.2 323.9 1294 291.4 1295.5 288.9 1296.6 282 1298.1 282 1299.3 301.4 1300.4 313.9 1301.5 316.4 1302.3 338.9 1303.1 491.5 1314 491.5 1314.8 348.9 1316.6 344.5 1318 346.4 1320 338.9 1321.4 340.1 1323.1 326.4 1323.9 301.4 1325.1 300.8 1326.2 325.1 1327.3 327.6 1328.8 338.9 1330.5 341.4 1331.7 348.9 1332.2 491.5 1342.8 491.5 1343.5 350.1 1345.6 346.4 1347.3 341.4 1348.4 326.4 1349.9 313.9 1351.1 285.1 1353 277.6 1354.5 278.2 1355.3 275.8 1357 274.5 1358.1 288.9 1359 341.4 1359.8 345.1 1360.6 491.5 1372.1 491.5 1373 348.2 1375.5 346.4 1377.8 343.9 1379.2 344.5 1381.2 338.9 1382.9 336.4 1384.6 333.2 1386 341.4 1387.5 344.5 1389 343.9 1389.8 491.5 1400.9 491.5 1401.8 350.1 1404.1 349.5 1405.4 338.9 1407.1 321.4 1408.8 317.6 1410.5 291.4 1412.2 290.1 1413.4 296.4 1414.5 281.4 1415.9 285.1 1416.8 326.4 1417.7 338.9 1418.5 491.5 1429.9 491.5 1430.8 347.6 1433.1 343.9 1435.3 338.9 1437 315.8 1438.5 336.4 1440.4 341.4 1442.1 346.4 1442.7 301.4 1443.5 288.6 1444.6 301.4 1445.3 338.9 1446.5 343.9 1447.2 491.5 1459 491.5 1459.8 349.5 1461.3 345.1 1462.9 344.5 1464.6 347 1466.3 345.1 1468 345.1 1469.1 341.4 1470.8 338.9 1472 321.4 1472.9 320.8 1473.7 338.9 1474.4 351.4 1475.1 491.5 1487.8 491.5 1488.5 349.5 1490.6 345.1 1492.3 343.9 1493.1 323.2 1494.2 322.6 1495.1 301.4 1496.2 280.1 1497.4 278.6 1498.7 282.6 1499.7 313.9 1500.8 335.1 1502.5 340.1 1504 345.1 1504.8 491.5 1516.9 491.5 1517.7 348.2 1519.9 347 1521.6 336.4 1523.3 313.9 1524.1 293.9 1525.3 293.9 1526.2 326.4 1527.3 301.4 1528.4 278.9 1529.6 278.2 1530.9 281.4 1532.4 282 1533.2 326.4 1533.9 491.5 1545.9 491.5 1546.7 348.2 1548.7 345.8 1550.4 336.4 1551.8 318.2 1553.2 317.6 1554.4 317 1555.5 301.4 1557.2 286.4 1558.9 277 1560 278.2 1561.2 301.4 1561.9 338.9 1562.6 491.5 1574.9 491.5 1575.6 349.5 1577.5 346.4 1579.7 341.4 1580.9 313.9 1582 293.9 1584.3 284.1 1586 287.6 1588 283.6 1589.9 286.4 1590.5 313.9 1591.4 491.5 1604 491.5 1604.6 349.5 1606.3 345.8 1607.7 342.6 1609.1 326.4 1610.8 298.9 1612.5 290.1 1614.7 288.2 1617 287.4 1618.7 290.1 1619.5 326.4 1620.4 491.5 1632.8 491.5 1633.5 350.1 1635.6 346.4 1636.7 338.9 1638.4 320.1 1640.1 296.4 1642.3 290.1 1645.2 287 1647.4 286.6 1648 326.4 1648.9 491.5 1661.5 491.5 1662.3 349.5 1664.3 347 1666 345.1 1667.2 330.1 1668.9 313.9 1670 295.1 1671.7 291.4 1673.9 290.4 1675.6 290.8 1675.9 326.4 1677 342.6 1678.1 491.5 1690.2 491.5 1691 349.5 1692.9 345.8 1694.2 342.6 1695.9 326.4 1698.2 297.6 1699.9 292 1701.6 290.8 1703.8 291.4 1705.5 295.1 1706.1 326.4 1706.9 491.5 1719.4 491.5 1720.2 349.5 1722.4 346.4 1724.1 342.6 1725.3 330.1 1727 323.9 1727.7 297.6 1729.8 290.1 1731.5 288.9 1733.7 291.4 1734.9 296.4 1735.4 326.4 1736 491.5 1748.1 491.5 1748.9 349.5 1751.2 345.8 1752.3 341.4 1754 326.4 1755.7 322.6 1756.9 301.4 1758.6 292 1760.3 290.8 1762.5 292.6 1763.7 301.4 1764.4 326.4 1765.1 491.5 1777.1 491.5 1778 349.5 1779.9 346.4 1781.6 343.9 1782.8 341.4 1784.5 338.9 1785.6 313.9 1787.1 285.1 1789 280.8 1790.1 286.4 1791.8 287.6 1792.7 326.4 1793.5 491.5 1805.9 491.5 1806.8 349.5 1808.7 345.1 1810.4 338.9 1812.1 313.9 1813.8 290.1 1815.5 285.8 1817.8 284.5 1819.7 286.4 1820.8 326.4 1821.7 342.6 1822.6 491.5 1834.9 491.5 1835.8 349.5 1838 346.4 1839.7 341.4 1841.4 321.4 1843.1 296.4 1845.4 290.1 1847.3 288.2 1849.4 291.4 1850.5 301.4 1851.1 326.4 1851.9 491.5 1862.2 491.5" fill="none" stroke="#7eb26d" stroke-width="3" stroke-linejoin="round" stroke-linecap="butt"/>
<g font-size="10" fill="#d8d9da" stroke="#d8d9da" stroke-width="0.2"><text x="989.5" y="494.4" text-anchor="end">0 V</text><text x="989.5" y="442.2" text-anchor="end">5 V</text><text x="989.5" y="390" text-anchor="end">10 V</text><text x="989.5" y="337.8" text-anchor="end">15 V</text><text x="989.5" y="285.6" text-anchor="end">20 V</text><text x="989.5" y="233.4" text-anchor="end">25 V</text><text x="1076.5" y="507.9" text-anchor="middle">8/5</text><text x="1163.5" y="507.9" text-anchor="middle">8/8</text><text x="1250.5" y="507.9" text-anchor="middle">8/11</text><text x="1336.5" y="507.9" text-anchor="middle">8/14</text><text x="1423.5" y="507.9" text-anchor="middle">8/17</text><text x="1510.5" y="507.9" text-anchor="middle">8/20</text><text x="1597.5" y="507.9" text-anchor="middle">8/23</text><text x="1683.5" y="507.9" text-anchor="middle">8/26</text><text x="1770.5" y="507.9" text-anchor="middle">8/29</text><text x="1857.5" y="507.9" text-anchor="middle">9/1</text></g>
<rect x="979" y="527" width="12" height="4" fill="#7eb26d"/>
<text x="995" y="532.1" font-size="11.1" fill="#d8d9da" stroke="#d8d9da" stroke-width="0.2" xml:space="preserve">PV-array-voltage.last  Current: 0 V</text>
<g stroke="rgba(255,255,255,0.14)" stroke-width="1" fill="none" shape-rendering="crispEdges"><path d="M379 732.5H924"/><path d="M379 685.5H924"/><path d="M379 637.5H924"/><path d="M379 590.5H924"/><path d="M430.5 590V733"/><path d="M484.5 590V733"/><path d="M539.5 590V733"/><path d="M593.5 590V733"/><path d="M648.5 590V733"/><path d="M702.5 590V733"/><path d="M757.5 590V733"/><path d="M811.5 590V733"/><path d="M866.5 590V733"/><path d="M921.5 590V733"/></g>
<path d="M379.1 704.1 379.7 705.8 380.3 704.5 380.9 702.6 381.5 701.9 382.1 694.2 382.7 675.6 383.3 657.4 383.9 677.5 384.5 668.6 385.1 649.9 385.7 632.2 386.3 640.5 387 639.8 387.6 619.6 388.2 615.7 388.8 620.2 389.4 649.1 390 671.3 390.6 680.6 391.2 685.5 391.8 688.7 392.4 691 393 693 393.6 694.8 394.2 697.3 394.8 699.1 395.4 700.1 396 701.6 396.6 703.4 397.2 705.1 397.9 706.1 398.5 705.9 399.1 704 399.7 702.4 400.3 699.7 400.9 695.6 401.5 690.7 402.1 673.3 402.7 640.7 403.3 662.4 403.9 655.9 404.5 647.3 405.1 641.2 405.7 632.5 406.3 626.7 406.9 614 407.5 624.5 408.1 652.4 408.8 673.3 409.4 680.6 410 686.1 410.6 689.1 411.2 691.2 411.8 693.6 412.4 695 413 697.4 413.6 698.2 414.2 700 414.8 702.3 415.4 704.7 416 705.5 416.6 705.4 417.2 703.1 417.8 702.3 418.4 699.2 419 693.4 419.7 689 420.3 658.2 420.9 669.8 421.5 663.6 422.1 649.8 422.7 643.1 423.3 633.8 423.9 629.8 424.5 621.1 425.1 635 425.7 659.5 426.3 676 426.9 682.6 427.5 687 428.1 689.5 428.7 691.6 429.3 693.3 429.9 695 430.6 696.9 431.2 698.3 431.8 700 432.4 702.3 433 703.9 433.6 704.2 434.2 705.9 434.8 705 435.4 701.6 436 695.5 436.6 686.9 437.2 675.8 437.8 658.8 438.4 644.9 439 622.2 439.6 614.4 440.2 616.9 440.8 621.5 441.5 623.7 442.1 628.1 442.7 631.3 443.3 634 443.9 628 444.5 622.4 445.1 639.2 445.7 665.2 446.3 679.2 446.9 682.9 447.5 687.6 448.1 689.9 448.7 691.6 449.3 695.1 449.9 696.2 450.5 697.3 451.1 699.1 451.7 702.9 452.3 706.6 453 705.5 453.6 702.5 454.2 701.4 454.8 694 455.4 687.1 456 657.3 456.6 669.4 457.2 650.9 457.8 641.7 458.4 629.6 459 624.7 459.6 623 460.2 645.5 460.8 667.9 461.4 679.1 462 683.3 462.6 687.2 463.2 689.3 463.9 693.1 464.5 694.9 465.1 696.3 465.7 697.3 466.3 699 466.9 701.1 467.5 702.4 468.1 703.2 468.7 704.1 469.3 704.3 469.9 706.1 470.5 705.9 471.1 704.8 471.7 703.2 472.3 701.7 472.9 699 473.5 694.2 474.1 689 474.8 681.3 475.4 671.5 476 641 476.6 643.4 477.2 639.8 477.8 636.3 478.4 622.4 479 617.4 479.6 622.9 480.2 650.7 480.8 671.2 481.4 680.2 482 684.6 482.6 688.5 483.2 691.3 483.8 693.8 484.4 695.1 485 696.5 485.7 698.5 486.3 700.5 486.9 701.8 487.5 703 488.1 704.5 488.7 705.9 489.3 704.6 489.9 703.3 490.5 702.5 491.1 697.7 491.7 693.2 492.3 687.6 492.9 678.8 493.5 669 494.1 655.8 494.7 646.3 495.3 642.1 495.9 624.5 496.6 617.9 497.2 621.9 497.8 648.2 498.4 670.5 499 679.6 499.6 684.8 500.2 688.3 500.8 690 501.4 692.7 502 694.2 502.6 697.2 503.2 698.3 503.8 699.5 504.4 700.7 505 701.6 505.6 703.9 506.2 704.8 506.8 706.8 507.4 705.5 508.1 702.7 508.7 701.6 509.3 696 509.9 691.2 510.5 682.6 511.1 673.2 511.7 644.7 512.3 648.8 512.9 640.5 513.5 625.9 514.1 617.9 514.7 628 515.3 654.7 515.9 673.7 516.5 681.7 517.1 686.1 517.7 688.8 518.3 690.8 519 693.2 519.6 695.7 520.2 697.6 520.8 698.9 521.4 700.1 522 701.8 522.6 702.7 523.2 703.9 523.8 704.1 524.4 705.3 525 707 525.6 705.8 526.2 704 526.8 702.4 527.4 700.1 528 696 528.6 691 529.2 684.4 529.9 676.9 530.5 656.2 531.1 639.8 531.7 641.4 532.3 644.9 532.9 635 533.5 625.5 534.1 621.5 534.7 637.1 535.3 660.5 535.9 678.3 536.5 683 537.1 686.3 537.7 689.6 538.3 692.4 538.9 693.5 539.5 695.9 540.1 697 540.8 699.3 541.4 700.3 542 702.7 542.6 704.9 543.2 706.9 543.8 704.9 544.4 703 545 700.8 545.6 695.5 546.2 687.7 546.8 679 547.4 667.7 548 659.5 548.6 650.5 549.2 639.6 549.8 620.6 550.4 614.8 551 624.4 551.7 651.6 552.3 672.8 552.9 681.7 553.5 686.2 554.1 687.8 554.7 690.3 555.3 693.5 555.9 695.9 556.5 696.3 557.1 698.8 557.7 699.7 558.3 701.2 558.9 702 559.5 704 560.1 704.1 560.7 705.8 561.3 706.5 561.9 704.4 562.6 702.7 563.2 701.8 563.8 697.8 564.4 692.2 565 686.7 565.6 658.4 566.2 669.8 566.8 654.5 567.4 647 568 635 568.6 623.7 569.2 619.3 569.8 621.6 570.4 648.6 571 669.9 571.6 680.9 572.2 684.7 572.8 687.8 573.4 690.2 574.1 693.2 574.7 695 575.3 696.5 575.9 698.4 576.5 699.8 577.1 701.2 577.7 702.3 578.3 703.9 578.9 704.3 579.5 706.2 580.1 705.5 580.7 703.3 581.3 701.7 581.9 698.3 582.5 694.1 583.1 685.4 583.7 667.1 584.3 676.6 585 659.2 585.6 653.6 586.2 644.5 586.8 634.5 587.4 632.3 588 639.3 588.6 647.8 589.2 637 589.8 635.1 590.4 658.4 591 671 591.6 680.3 592.2 685 592.8 687.3 593.4 690.9 594 692.4 594.6 694.2 595.2 696.3 595.9 697.8 596.5 700.4 597.1 702.2 597.7 706 598.3 703.7 598.9 701.2 599.5 696.6 600.1 686.7 600.7 674.6 601.3 662 601.9 647.6 602.5 630.3 603.1 623.1 603.7 610.6 604.3 618.1 604.9 624 605.5 624.8 606.1 616.3 606.8 623.8 607.4 655.6 608 677 608.6 682.1 609.2 686.6 609.8 689.6 610.4 691.9 611 694.4 611.6 695 612.2 697 612.8 698.4 613.4 701.2 614 702.3 614.6 705.2 615.2 706.6 615.8 708.4 616.4 708.4 617 706.9 617.7 706.6 618.3 704.7 618.9 701.7 619.5 700.3 620.1 694.1 620.7 689.6 621.3 684.3 621.9 669.4 622.5 679.9 623.1 669.8 623.7 665.7 624.3 668.1 624.9 672.4 625.5 671.7 626.1 666.3 626.7 675 627.3 682.1 627.9 685.2 628.5 688.4 629.2 690.2 629.8 692 630.4 694.3 631 696 631.6 698.4 632.2 700.6 632.8 702.4 633.4 705.2 634 711.9 634.6 711.8 635.2 710.1 635.8 707.9 636.4 706.6 637 701.1 637.6 695.2 638.2 682.1 638.8 649.1 639.4 666.6 640.1 653.8 640.7 651.9 641.3 640.7 641.9 627.5 642.5 620.8 643.1 616.1 643.7 631.8 644.3 659.7 644.9 678.6 645.5 682 646.1 687 646.7 689.7 647.3 692.3 647.9 693.8 648.5 695.2 649.1 697 649.7 699.3 650.3 701.2 651 703.3 651.6 704.2 652.2 706.1 652.8 705.5 653.4 703.7 654 702.6 654.6 699.6 655.2 694.5 655.8 689.8 656.4 676 657 656.9 657.6 668.9 658.2 657.4 658.8 647.4 659.4 644.8 660 633 660.6 629.3 661.2 620.3 661.9 636.1 662.5 661.4 663.1 678.5 663.7 682.4 664.3 686.6 664.9 689 665.5 691.2 666.1 694.5 666.7 696 667.3 697.7 667.9 699.8 668.5 700.5 669.1 703.1 669.7 705.7 670.3 709.2 670.9 707.3 671.5 706.3 672.1 705.6 672.8 703.8 673.4 699.8 674 695.7 674.6 690.8 675.2 677.2 675.8 689.8 676.4 671.5 677 663.5 677.6 658.3 678.2 653.1 678.8 649 679.4 635.9 680 639.6 680.6 662.8 681.2 668.3 681.8 679.9 682.4 684.7 683 687.5 683.7 689.5 684.3 693.1 684.9 694.2 685.5 697.1 686.1 698.5 686.7 700.2 687.3 702.7 687.9 706.2 688.5 710.3 689.1 709.4 689.7 706.2 690.3 701.4 690.9 693.5 691.5 677.9 692.1 662.5 692.7 647.6 693.3 627.2 693.9 621.1 694.5 618.9 695.2 642.8 695.8 668.5 696.4 679.4 697 684.5 697.6 687.3 698.2 690.1 698.8 693 699.4 695.1 700 696.2 700.6 698.7 701.2 699.2 701.8 701.6 702.4 702.8 703 703.7 703.6 703.5 704.2 704.8 704.8 705.6 705.4 706.2 706.1 706.6 706.7 706.1 707.3 704.3 707.9 702 708.5 697.2 709.1 690.1 709.7 679.6 710.3 668.1 710.9 650.4 711.5 634.8 712.1 617.6 712.7 611.9 713.3 622.9 713.9 652.2 714.5 674.4 715.1 682.2 715.7 686.6 716.3 689.2 717 691.8 717.6 693.2 718.2 695 718.8 696.9 719.4 698.3 720 700.2 720.6 701.8 721.2 703.1 721.8 704.2 722.4 704 723 705.3 723.6 705.6 724.2 706 724.8 707.1 725.4 705.5 726 703.9 726.6 701.8 727.2 700 727.9 695.1 728.5 689.3 729.1 683.8 729.7 674.2 730.3 653.3 730.9 637.2 731.5 640.4 732.1 640.5 732.7 631.7 733.3 626 733.9 620.1 734.5 636.6 735.1 661.3 735.7 677.6 736.3 683.2 736.9 686.2 737.5 689.6 738.1 692.4 738.8 694.5 739.4 695.4 740 696.8 740.6 699.8 741.2 700.9 741.8 702.7 742.4 704 743 706.7 743.6 704.7 744.2 702.9 744.8 699.1 745.4 692.1 746 683 746.6 672.6 747.2 658.5 747.8 642.3 748.4 634.1 749 626.9 749.6 611.4 750.3 626.4 750.9 655.3 751.5 676.4 752.1 681.7 752.7 686.2 753.3 689.1 753.9 691.6 754.5 694 755.1 695 755.7 697.9 756.3 698.4 756.9 701.2 757.5 702 758.1 703 758.7 703.1 759.3 704.5 759.9 705.3 760.5 705.2 761.2 706.8 761.8 704.5 762.4 702.1 763 694.8 763.6 685.3 764.2 674.5 764.8 659.1 765.4 644.7 766 621 766.6 612.8 767.2 623.2 767.8 651.1 768.4 674 769 681.3 769.6 685.3 770.2 688.3 770.8 691.5 771.4 693.5 772.1 694.7 772.7 697.3 773.3 699.1 773.9 700.6 774.5 701.1 775.1 701.9 775.7 704 776.3 704.8 776.9 705.1 777.5 705.4 778.1 705.5 778.7 706.5 779.3 706.7 779.9 704.5 780.5 700.7 781.1 693.3 781.7 684.6 782.3 671.1 783 653.5 783.6 641.5 784.2 624.2 784.8 614.3 785.4 630.7 786 659.5 786.6 678.5 787.2 682.4 787.8 687.2 788.4 689.6 789 691.9 789.6 694.7 790.2 695.9 790.8 697 791.4 698.9 792 700.6 792.6 701.5 793.2 702.8 793.9 704.3 794.5 704.2 795.1 704.9 795.7 704.9 796.3 705 796.9 706.1 797.5 706.3 798.1 703.8 798.7 701.5 799.3 694.9 799.9 685.6 800.5 670.9 801.1 653.6 801.7 635 802.3 621.7 802.9 610.7 803.5 627 804.1 658.5 804.8 678.4 805.4 682.4 806 687.2 806.6 689.3 807.2 691.3 807.8 693.7 808.4 695.6 809 697.8 809.6 699.2 810.2 700.7 810.8 701.5 811.4 702.9 812 703.5 812.6 703.8 813.2 705.2 813.8 705 814.4 705.2 815 706.2 815.6 706.4 816.3 704.1 816.9 703.4 817.5 699.1 818.1 691.9 818.7 682.2 819.3 669.1 819.9 657.5 820.5 648.7 821.1 637 821.7 627.9 822.3 619.3 822.9 640 823.5 665 824.1 678.5 824.7 683.4 825.3 687.3 825.9 689 826.5 692.6 827.2 694.1 827.8 696.2 828.4 697.4 829 700 829.6 700.2 830.2 702.1 830.8 703.6 831.4 704.3 832 704.8 832.6 705.9 833.2 705.9 833.8 706.5 834.4 704.6 835 703.2 835.6 700.9 836.2 694.4 836.8 687.1 837.4 677.2 838.1 666.7 838.7 653.2 839.3 644.1 839.9 622.6 840.5 617.6 841.1 623.5 841.7 650 842.3 671.5 842.9 680.6 843.5 685.3 844.1 688.1 844.7 691.1 845.3 692.5 845.9 695.3 846.5 696.6 847.1 698 847.7 699.7 848.3 701.3 849 702.6 849.6 703.3 850.2 704.8 850.8 704.5 851.4 705.9 852 705.9 852.6 704.5 853.2 701.8 853.8 698.2 854.4 689.5 855 681 855.6 668.6 856.2 652.9 856.8 637.8 857.4 626.6 858 614.7 858.6 598.8 859.2 613.1 859.9 650.7 860.5 676.4 861.1 682.3 861.7 685.8 862.3 688.4 862.9 692.1 863.5 693.4 864.1 695 864.7 696.9 865.3 699.5 865.9 700.1 866.5 701.4 867.1 703.3 867.7 704.4 868.3 703.8 868.9 704.9 869.5 706.1 870.1 706.9 870.7 705.5 871.4 703.6 872 701 872.6 696.5 873.2 691.3 873.8 677.5 874.4 689.9 875 658.4 875.6 645.7 876.2 644.2 876.8 624.6 877.4 616.8 878 626.7 878.6 653.3 879.2 673 879.8 681.7 880.4 685.4 881 688.4 881.6 690.6 882.3 693.5 882.9 694.7 883.5 696.9 884.1 699 884.7 700.7 885.3 701.9 885.9 702.4 886.5 704.1 887.1 705.3 887.7 708.5 888.3 710.8 888.9 708.9 889.5 706.3 890.1 699.4 890.7 691.5 891.3 679 891.9 665.5 892.5 649.8 893.2 631.8 893.8 620.4 894.4 619 895 643.4 895.6 668.1 896.2 680.5 896.8 684.2 897.4 687.5 898 690.8 898.6 692.5 899.2 694.5 899.8 695.8 900.4 698.4 901 699.1 901.6 701 902.2 702.1 902.8 702.6 903.4 704.8 904.1 704.3 904.7 704.9 905.3 705.7 905.9 705.4 906.5 706.6 907.1 704.4 907.7 702 908.3 695.5 908.9 687.4 909.5 674.4 910.1 659 910.7 645.1 911.3 633 911.9 623.8 912.5 619.3 913.1 644.3 913.7 668.8 914.3 680.2 915 684.4 915.6 687 916.2 690 916.8 692.3 917.4 695 918 696.7 918.6 698.4 919.2 699.7 919.8 700.9 920.4 701.7 921 703.8 921.6 703.8 922.2 704.1 922.8 705 923.4 706.1 924 706.2 L924 732.5 L379.1 732.5 Z" fill="#7eb26d" fill-opacity="0.8" stroke="none"/>
<path d="M379.1 704.1 379.7 705.8 380.3 704.5 380.9 702.6 381.5 701.9 382.1 694.2 382.7 675.6 383.3 657.4 383.9 677.5 384.5 668.6 385.1 649.9 385.7 632.2 386.3 640.5 387 639.8 387.6 619.6 388.2 615.7 388.8 620.2 389.4 649.1 390 671.3 390.6 680.6 391.2 685.5 391.8 688.7 392.4 691 393 693 393.6 694.8 394.2 697.3 394.8 699.1 395.4 700.1 396 701.6 396.6 703.4 397.2 705.1 397.9 706.1 398.5 705.9 399.1 704 399.7 702.4 400.3 699.7 400.9 695.6 401.5 690.7 402.1 673.3 402.7 640.7 403.3 662.4 403.9 655.9 404.5 647.3 405.1 641.2 405.7 632.5 406.3 626.7 406.9 614 407.5 624.5 408.1 652.4 408.8 673.3 409.4 680.6 410 686.1 410.6 689.1 411.2 691.2 411.8 693.6 412.4 695 413 697.4 413.6 698.2 414.2 700 414.8 702.3 415.4 704.7 416 705.5 416.6 705.4 417.2 703.1 417.8 702.3 418.4 699.2 419 693.4 419.7 689 420.3 658.2 420.9 669.8 421.5 663.6 422.1 649.8 422.7 643.1 423.3 633.8 423.9 629.8 424.5 621.1 425.1 635 425.7 659.5 426.3 676 426.9 682.6 427.5 687 428.1 689.5 428.7 691.6 429.3 693.3 429.9 695 430.6 696.9 431.2 698.3 431.8 700 432.4 702.3 433 703.9 433.6 704.2 434.2 705.9 434.8 705 435.4 701.6 436 695.5 436.6 686.9 437.2 675.8 437.8 658.8 438.4 644.9 439 622.2 439.6 614.4 440.2 616.9 440.8 621.5 441.5 623.7 442.1 628.1 442.7 631.3 443.3 634 443.9 628 444.5 622.4 445.1 639.2 445.7 665.2 446.3 679.2 446.9 682.9 447.5 687.6 448.1 689.9 448.7 691.6 449.3 695.1 449.9 696.2 450.5 697.3 451.1 699.1 451.7 702.9 452.3 706.6 453 705.5 453.6 702.5 454.2 701.4 454.8 694 455.4 687.1 456 657.3 456.6 669.4 457.2 650.9 457.8 641.7 458.4 629.6 459 624.7 459.6 623 460.2 645.5 460.8 667.9 461.4 679.1 462 683.3 462.6 687.2 463.2 689.3 463.9 693.1 464.5 694.9 465.1 696.3 465.7 697.3 466.3 699 466.9 701.1 467.5 702.4 468.1 703.2 468.7 704.1 469.3 704.3 469.9 706.1 470.5 705.9 471.1 704.8 471.7 703.2 472.3 701.7 472.9 699 473.5 694.2 474.1 689 474.8 681.3 475.4 671.5 476 641 476.6 643.4 477.2 639.8 477.8 636.3 478.4 622.4 479 617.4 479.6 622.9 480.2 650.7 480.8 671.2 481.4 680.2 482 684.6 482.6 688.5 483.2 691.3 483.8 693.8 484.4 695.1 485 696.5 485.7 698.5 486.3 700.5 486.9 701.8 487.5 703 488.1 704.5 488.7 705.9 489.3 704.6 489.9 703.3 490.5 702.5 491.1 697.7 491.7 693.2 492.3 687.6 492.9 678.8 493.5 669 494.1 655.8 494.7 646.3 495.3 642.1 495.9 624.5 496.6 617.9 497.2 621.9 497.8 648.2 498.4 670.5 499 679.6 499.6 684.8 500.2 688.3 500.8 690 501.4 692.7 502 694.2 502.6 697.2 503.2 698.3 503.8 699.5 504.4 700.7 505 701.6 505.6 703.9 506.2 704.8 506.8 706.8 507.4 705.5 508.1 702.7 508.7 701.6 509.3 696 509.9 691.2 510.5 682.6 511.1 673.2 511.7 644.7 512.3 648.8 512.9 640.5 513.5 625.9 514.1 617.9 514.7 628 515.3 654.7 515.9 673.7 516.5 681.7 517.1 686.1 517.7 688.8 518.3 690.8 519 693.2 519.6 695.7 520.2 697.6 520.8 698.9 521.4 700.1 522 701.8 522.6 702.7 523.2 703.9 523.8 704.1 524.4 705.3 525 707 525.6 705.8 526.2 704 526.8 702.4 527.4 700.1 528 696 528.6 691 529.2 684.4 529.9 676.9 530.5 656.2 531.1 639.8 531.7 641.4 532.3 644.9 532.9 635 533.5 625.5 534.1 621.5 534.7 637.1 535.3 660.5 535.9 678.3 536.5 683 537.1 686.3 537.7 689.6 538.3 692.4 538.9 693.5 539.5 695.9 540.1 697 540.8 699.3 541.4 700.3 542 702.7 542.6 704.9 543.2 706.9 543.8 704.9 544.4 703 545 700.8 545.6 695.5 546.2 687.7 546.8 679 547.4 667.7 548 659.5 548.6 650.5 549.2 639.6 549.8 620.6 550.4 614.8 551 624.4 551.7 651.6 552.3 672.8 552.9 681.7 553.5 686.2 554.1 687.8 554.7 690.3 555.3 693.5 555.9 695.9 556.5 696.3 557.1 698.8 557.7 699.7 558.3 701.2 558.9 702 559.5 704 560.1 704.1 560.7 705.8 561.3 706.5 561.9 704.4 562.6 702.7 563.2 701.8 563.8 697.8 564.4 692.2 565 686.7 565.6 658.4 566.2 669.8 566.8 654.5 567.4 647 568 635 568.6 623.7 569.2 619.3 569.8 621.6 570.4 648.6 571 669.9 571.6 680.9 572.2 684.7 572.8 687.8 573.4 690.2 574.1 693.2 574.7 695 575.3 696.5 575.9 698.4 576.5 699.8 577.1 701.2 577.7 702.3 578.3 703.9 578.9 704.3 579.5 706.2 580.1 705.5 580.7 703.3 581.3 701.7 581.9 698.3 582.5 694.1 583.1 685.4 583.7 667.1 584.3 676.6 585 659.2 585.6 653.6 586.2 644.5 586.8 634.5 587.4 632.3 588 639.3 588.6 647.8 589.2 637 589.8 635.1 590.4 658.4 591 671 591.6 680.3 592.2 685 592.8 687.3 593.4 690.9 594 692.4 594.6 694.2 595.2 696.3 595.9 697.8 596.5 700.4 597.1 702.2 597.7 706 598.3 703.7 598.9 701.2 599.5 696.6 600.1 686.7 600.7 674.6 601.3 662 601.9 647.6 602.5 630.3 603.1 623.1 603.7 610.6 604.3 618.1 604.9 624 605.5 624.8 606.1 616.3 606.8 623.8 607.4 655.6 608 677 608.6 682.1 609.2 686.6 609.8 689.6 610.4 691.9 611 694.4 611.6 695 612.2 697 612.8 698.4 613.4 701.2 614 702.3 614.6 705.2 615.2 706.6 615.8 708.4 616.4 708.4 617 706.9 617.7 706.6 618.3 704.7 618.9 701.7 619.5 700.3 620.1 694.1 620.7 689.6 621.3 684.3 621.9 669.4 622.5 679.9 623.1 669.8 623.7 665.7 624.3 668.1 624.9 672.4 625.5 671.7 626.1 666.3 626.7 675 627.3 682.1 627.9 685.2 628.5 688.4 629.2 690.2 629.8 692 630.4 694.3 631 696 631.6 698.4 632.2 700.6 632.8 702.4 633.4 705.2 634 711.9 634.6 711.8 635.2 710.1 635.8 707.9 636.4 706.6 637 701.1 637.6 695.2 638.2 682.1 638.8 649.1 639.4 666.6 640.1 653.8 640.7 651.9 641.3 640.7 641.9 627.5 642.5 620.8 643.1 616.1 643.7 631.8 644.3 659.7 644.9 678.6 645.5 682 646.1 687 646.7 689.7 647.3 692.3 647.9 693.8 648.5 695.2 649.1 697 649.7 699.3 650.3 701.2 651 703.3 651.6 704.2 652.2 706.1 652.8 705.5 653.4 703.7 654 702.6 654.6 699.6 655.2 694.5 655.8 689.8 656.4 676 657 656.9 657.6 668.9 658.2 657.4 658.8 647.4 659.4 644.8 660 633 660.6 629.3 661.2 620.3 661.9 636.1 662.5 661.4 663.1 678.5 663.7 682.4 664.3 686.6 664.9 689 665.5 691.2 666.1 694.5 666.7 696 667.3 697.7 667.9 699.8 668.5 700.5 669.1 703.1 669.7 705.7 670.3 709.2 670.9 707.3 671.5 706.3 672.1 705.6 672.8 703.8 673.4 699.8 674 695.7 674.6 690.8 675.2 677.2 675.8 689.8 676.4 671.5 677 663.5 677.6 658.3 678.2 653.1 678.8 649 679.4 635.9 680 639.6 680.6 662.8 681.2 668.3 681.8 679.9 682.4 684.7 683 687.5 683.7 689.5 684.3 693.1 684.9 694.2 685.5 697.1 686.1 698.5 686.7 700.2 687.3 702.7 687.9 706.2 688.5 710.3 689.1 709.4 689.7 706.2 690.3 701.4 690.9 693.5 691.5 677.9 692.1 662.5 692.7 647.6 693.3 627.2 693.9 621.1 694.5 618.9 695.2 642.8 695.8 668.5 696.4 679.4 697 684.5 697.6 687.3 698.2 690.1 698.8 693 699.4 695.1 700 696.2 700.6 698.7 701.2 699.2 701.8 701.6 702.4 702.8 703 703.7 703.6 703.5 704.2 704.8 704.8 705.6 705.4 706.2 706.1 706.6 706.7 706.1 707.3 704.3 707.9 702 708.5 697.2 709.1 690.1 709.7 679.6 710.3 668.1 710.9 650.4 711.5 634.8 712.1 617.6 712.7 611.9 713.3 622.9 713.9 652.2 714.5 674.4 715.1 682.2 715.7 686.6 716.3 689.2 717 691.8 717.6 693.2 718.2 695 718.8 696.9 719.4 698.3 720 700.2 720.6 701.8 721.2 703.1 721.8 704.2 722.4 704 723 705.3 723.6 705.6 724.2 706 724.8 707.1 725.4 705.5 726 703.9 726.6 701.8 727.2 700 727.9 695.1 728.5 689.3 729.1 683.8 729.7 674.2 730.3 653.3 730.9 637.2 731.5 640.4 732.1 640.5 732.7 631.7 733.3 626 733.9 620.1 734.5 636.6 735.1 661.3 735.7 677.6 736.3 683.2 736.9 686.2 737.5 689.6 738.1 692.4 738.8 694.5 739.4 695.4 740 696.8 740.6 699.8 741.2 700.9 741.8 702.7 742.4 704 743 706.7 743.6 704.7 744.2 702.9 744.8 699.1 745.4 692.1 746 683 746.6 672.6 747.2 658.5 747.8 642.3 748.4 634.1 749 626.9 749.6 611.4 750.3 626.4 750.9 655.3 751.5 676.4 752.1 681.7 752.7 686.2 753.3 689.1 753.9 691.6 754.5 694 755.1 695 755.7 697.9 756.3 698.4 756.9 701.2 757.5 702 758.1 703 758.7 703.1 759.3 704.5 759.9 705.3 760.5 705.2 761.2 706.8 761.8 704.5 762.4 702.1 763 694.8 763.6 685.3 764.2 674.5 764.8 659.1 765.4 644.7 766 621 766.6 612.8 767.2 623.2 767.8 651.1 768.4 674 769 681.3 769.6 685.3 770.2 688.3 770.8 691.5 771.4 693.5 772.1 694.7 772.7 697.3 773.3 699.1 773.9 700.6 774.5 701.1 775.1 701.9 775.7 704 776.3 704.8 776.9 705.1 777.5 705.4 778.1 705.5 778.7 706.5 779.3 706.7 779.9 704.5 780.5 700.7 781.1 693.3 781.7 684.6 782.3 671.1 783 653.5 783.6 641.5 784.2 624.2 784.8 614.3 785.4 630.7 786 659.5 786.6 678.5 787.2 682.4 787.8 687.2 788.4 689.6 789 691.9 789.6 694.7 790.2 695.9 790.8 697 791.4 698.9 792 700.6 792.6 701.5 793.2 702.8 793.9 704.3 794.5 704.2 795.1 704.9 795.7 704.9 796.3 705 796.9 706.1 797.5 706.3 798.1 703.8 798.7 701.5 799.3 694.9 799.9 685.6 800.5 670.9 801.1 653.6 801.7 635 802.3 621.7 802.9 610.7 803.5 627 804.1 658.5 804.8 678.4 805.4 682.4 806 687.2 806.6 689.3 807.2 691.3 807.8 693.7 808.4 695.6 809 697.8 809.6 699.2 810.2 700.7 810.8 701.5 811.4 702.9 812 703.5 812.6 703.8 813.2 705.2 813.8 705 814.4 705.2 815 706.2 815.6 706.4 816.3 704.1 816.9 703.4 817.5 699.1 818.1 691.9 818.7 682.2 819.3 669.1 819.9 657.5 820.5 648.7 821.1 637 821.7 627.9 822.3 619.3 822.9 640 823.5 665 824.1 678.5 824.7 683.4 825.3 687.3 825.9 689 826.5 692.6 827.2 694.1 827.8 696.2 828.4 697.4 829 700 829.6 700.2 830.2 702.1 830.8 703.6 831.4 704.3 832 704.8 832.6 705.9 833.2 705.9 833.8 706.5 834.4 704.6 835 703.2 835.6 700.9 836.2 694.4 836.8 687.1 837.4 677.2 838.1 666.7 838.7 653.2 839.3 644.1 839.9 622.6 840.5 617.6 841.1 623.5 841.7 650 842.3 671.5 842.9 680.6 843.5 685.3 844.1 688.1 844.7 691.1 845.3 692.5 845.9 695.3 846.5 696.6 847.1 698 847.7 699.7 848.3 701.3 849 702.6 849.6 703.3 850.2 704.8 850.8 704.5 851.4 705.9 852 705.9 852.6 704.5 853.2 701.8 853.8 698.2 854.4 689.5 855 681 855.6 668.6 856.2 652.9 856.8 637.8 857.4 626.6 858 614.7 858.6 598.8 859.2 613.1 859.9 650.7 860.5 676.4 861.1 682.3 861.7 685.8 862.3 688.4 862.9 692.1 863.5 693.4 864.1 695 864.7 696.9 865.3 699.5 865.9 700.1 866.5 701.4 867.1 703.3 867.7 704.4 868.3 703.8 868.9 704.9 869.5 706.1 870.1 706.9 870.7 705.5 871.4 703.6 872 701 872.6 696.5 873.2 691.3 873.8 677.5 874.4 689.9 875 658.4 875.6 645.7 876.2 644.2 876.8 624.6 877.4 616.8 878 626.7 878.6 653.3 879.2 673 879.8 681.7 880.4 685.4 881 688.4 881.6 690.6 882.3 693.5 882.9 694.7 883.5 696.9 884.1 699 884.7 700.7 885.3 701.9 885.9 702.4 886.5 704.1 887.1 705.3 887.7 708.5 888.3 710.8 888.9 708.9 889.5 706.3 890.1 699.4 890.7 691.5 891.3 679 891.9 665.5 892.5 649.8 893.2 631.8 893.8 620.4 894.4 619 895 643.4 895.6 668.1 896.2 680.5 896.8 684.2 897.4 687.5 898 690.8 898.6 692.5 899.2 694.5 899.8 695.8 900.4 698.4 901 699.1 901.6 701 902.2 702.1 902.8 702.6 903.4 704.8 904.1 704.3 904.7 704.9 905.3 705.7 905.9 705.4 906.5 706.6 907.1 704.4 907.7 702 908.3 695.5 908.9 687.4 909.5 674.4 910.1 659 910.7 645.1 911.3 633 911.9 623.8 912.5 619.3 913.1 644.3 913.7 668.8 914.3 680.2 915 684.4 915.6 687 916.2 690 916.8 692.3 917.4 695 918 696.7 918.6 698.4 919.2 699.7 919.8 700.9 920.4 701.7 921 703.8 921.6 703.8 922.2 704.1 922.8 705 923.4 706.1 924 706.2" fill="none" stroke="#7eb26d" stroke-width="3" stroke-linejoin="round" stroke-linecap="butt"/>
<g font-size="10" fill="#d8d9da" stroke="#d8d9da" stroke-width="0.2"><text x="372.8" y="735.4" text-anchor="end">12.0 V</text><text x="372.8" y="688.1" text-anchor="end">13.0 V</text><text x="372.8" y="640.7" text-anchor="end">14.0 V</text><text x="372.8" y="593.4" text-anchor="end">15.0 V</text><text x="430.5" y="747.9" text-anchor="middle">8/5</text><text x="484.5" y="747.9" text-anchor="middle">8/8</text><text x="539.5" y="747.9" text-anchor="middle">8/11</text><text x="593.5" y="747.9" text-anchor="middle">8/14</text><text x="648.5" y="747.9" text-anchor="middle">8/17</text><text x="702.5" y="747.9" text-anchor="middle">8/20</text><text x="757.5" y="747.9" text-anchor="middle">8/23</text><text x="811.5" y="747.9" text-anchor="middle">8/26</text><text x="866.5" y="747.9" text-anchor="middle">8/29</text><text x="921.5" y="747.9" text-anchor="middle">9/1</text></g>
<rect x="354.3" y="767" width="12" height="4" fill="#7eb26d"/>
<text x="370.3" y="772.1" font-size="11.1" fill="#d8d9da" stroke="#d8d9da" stroke-width="0.2" xml:space="preserve">Battery-voltage.last  Min: 12.39 V  Max: 14.84 V  Current: 12.59 V</text>
<g stroke="rgba(255,255,255,0.14)" stroke-width="1" fill="none" shape-rendering="crispEdges"><path d="M998 732.5H1549"/><path d="M998 697.5H1549"/><path d="M998 661.5H1549"/><path d="M998 626.5H1549"/><path d="M998 590.5H1549"/><path d="M1050.5 590V733"/><path d="M1105.5 590V733"/><path d="M1160.5 590V733"/><path d="M1215.5 590V733"/><path d="M1270.5 590V733"/><path d="M1325.5 590V733"/><path d="M1380.5 590V733"/><path d="M1435.5 590V733"/><path d="M1490.5 590V733"/><path d="M1545.5 590V733"/></g>
<path d="M998.6 686.4 999.1 705 999.6 704.6 1000.1 703 1000.6 705 1001.1 704.8 1001.6 704.4 1002.1 706.2 1002.6 704.8 1003.2 704.3 1003.7 701.4 1004.2 703.5 1004.7 703.5 1005.2 706.8 1005.7 702.8 1006.2 704.3 1006.7 706.3 1007.2 706.9 1007.7 704.7 1008.3 706.7 1008.8 706.1 1009.3 705.9 1009.8 706.8 1010.3 705 1010.8 680.4 1011.3 679.6 1011.8 680.3 1012.3 680 1012.8 680.3 1013.3 680 1013.9 680.4 1014.4 680.8 1014.9 679.3 1015.4 679.3 1015.9 679.6 1016.4 679.9 1016.9 705.6 1017.4 706 1017.9 705.7 1018.4 706.6 1019 703.7 1019.5 705.2 1020 703.3 1020.5 705.3 1021 702.9 1021.5 703.3 1022 704.8 1022.5 700.9 1023 700.6 1023.5 706.6 1024 701.5 1024.6 706.6 1025.1 705.5 1025.6 702.8 1026.1 703.7 1026.6 706.4 1027.1 705.9 1027.6 706.5 1028.1 706.7 1028.6 703.5 1029.1 681 1029.7 680.2 1030.2 680.4 1030.7 681 1031.2 679.8 1031.7 681.1 1032.2 680 1032.7 681.1 1033.2 680.5 1033.7 680.9 1034.2 680.8 1034.7 679.3 1035.3 703.5 1035.8 705.6 1036.3 703.2 1036.8 706 1037.3 705.3 1037.8 703.3 1038.3 704.2 1038.8 706.5 1039.3 702.7 1039.8 706 1040.4 705.8 1040.9 703.4 1041.4 704.5 1041.9 702.3 1042.4 702.2 1042.9 705 1043.4 702.9 1043.9 704.9 1044.4 704.5 1044.9 703.2 1045.4 706.2 1046 706.3 1046.5 703.1 1047 703.5 1047.5 680.8 1048 681 1048.5 679.8 1049 679.4 1049.5 681 1050 679.4 1050.5 679.5 1051.1 680.1 1051.6 680.5 1052.1 681.2 1052.6 681.3 1053.1 679.3 1053.6 705.9 1054.1 703.9 1054.6 705.8 1055.1 703.4 1055.6 704.4 1056.1 705.7 1056.7 706.2 1057.2 703.9 1057.7 706.6 1058.2 706 1058.7 704.6 1059.2 702.2 1059.7 700.9 1060.2 704.7 1060.7 702.9 1061.2 706.2 1061.8 705.4 1062.3 704.5 1062.8 706.4 1063.3 705.4 1063.8 703.1 1064.3 702.8 1064.8 704.1 1065.3 704 1065.8 680.1 1066.3 677.1 1066.9 677.1 1067.4 681.3 1067.9 679.4 1068.4 679.9 1068.9 679.3 1069.4 681.3 1069.9 680 1070.4 680.4 1070.9 679.8 1071.4 680.7 1071.9 702.7 1072.5 706.6 1073 704.6 1073.5 703.8 1074 703.1 1074.5 703.8 1075 703.9 1075.5 703.6 1076 703 1076.5 705.4 1077 704 1077.6 701.1 1078.1 703.6 1078.6 704.5 1079.1 705.3 1079.6 704.3 1080.1 706.6 1080.6 704.2 1081.1 702.7 1081.6 703.2 1082.1 703.8 1082.6 705.3 1083.2 703.8 1083.7 704.5 1084.2 680.4 1084.7 679.6 1085.2 681.2 1085.7 679.8 1086.2 681.3 1086.7 680.1 1087.2 680.4 1087.7 680.9 1088.3 679.9 1088.8 680.3 1089.3 680.1 1089.8 679.4 1090.3 705.9 1090.8 706.9 1091.3 705.7 1091.8 704.1 1092.3 706.1 1092.8 706.2 1093.3 703.1 1093.9 704.1 1094.4 705.1 1094.9 703.1 1095.4 695.6 1095.9 693.5 1096.4 703.5 1096.9 701.1 1097.4 702.3 1097.9 706.4 1098.4 704.8 1099 703.4 1099.5 703.3 1100 703.9 1100.5 702.9 1101 705.8 1101.5 706.2 1102 705 1102.5 680.8 1103 677.1 1103.5 677.1 1104 680 1104.6 680.3 1105.1 680.7 1105.6 679.6 1106.1 679.3 1106.6 680.4 1107.1 681.2 1107.6 681.3 1108.1 679.5 1108.6 706.8 1109.1 703.9 1109.7 704.5 1110.2 705.6 1110.7 703.6 1111.2 706.9 1111.7 706.4 1112.2 705 1112.7 706.8 1113.2 703.4 1113.7 703.8 1114.2 706.7 1114.7 705 1115.3 704.1 1115.8 702.9 1116.3 706.1 1116.8 704.9 1117.3 706.2 1117.8 706.9 1118.3 704.9 1118.8 703.9 1119.3 706.2 1119.8 705.8 1120.4 705.5 1120.9 679.9 1121.4 680.3 1121.9 680.1 1122.4 679.8 1122.9 680.5 1123.4 679.7 1123.9 679.4 1124.4 681.2 1124.9 679.4 1125.4 679.8 1126 681.1 1126.5 680.4 1127 704.3 1127.5 703.1 1128 705.3 1128.5 704.5 1129 703.2 1129.5 703.5 1130 702.9 1130.5 705 1131.1 704.2 1131.6 706.1 1132.1 703.9 1132.6 704.2 1133.1 706 1133.6 702.8 1134.1 704.7 1134.6 705.6 1135.1 703.1 1135.6 703.3 1136.1 705.5 1136.7 706.6 1137.2 705.1 1137.7 704.6 1138.2 703.7 1138.7 704.9 1139.2 681.3 1139.7 679.7 1140.2 681.2 1140.7 679.7 1141.2 681 1141.8 680.7 1142.3 679.7 1142.8 681.1 1143.3 681.1 1143.8 680.3 1144.3 679.8 1144.8 679.6 1145.3 704 1145.8 702.9 1146.3 704.8 1146.8 702.9 1147.4 706.6 1147.9 706 1148.4 704.7 1148.9 705.7 1149.4 703.8 1149.9 704.2 1150.4 704.7 1150.9 702.4 1151.4 705.3 1151.9 701 1152.5 703.3 1153 704.7 1153.5 704.5 1154 706.1 1154.5 704.7 1155 704.8 1155.5 704.4 1156 706.8 1156.5 702.8 1157 704.7 1157.5 680.5 1158.1 679.7 1158.6 680.2 1159.1 680.3 1159.6 679.9 1160.1 681.2 1160.6 680.2 1161.1 680.5 1161.6 679.3 1162.1 679.4 1162.6 680.8 1163.2 680.4 1163.7 706.4 1164.2 705.1 1164.7 703.5 1165.2 703.1 1165.7 704.9 1166.2 705.6 1166.7 706.1 1167.2 704.3 1167.7 703 1168.2 706.4 1168.8 701.5 1169.3 704 1169.8 701.9 1170.3 705.4 1170.8 706.5 1171.3 706.4 1171.8 704.8 1172.3 705.9 1172.8 706.1 1173.3 704.7 1173.9 705.1 1174.4 705.3 1174.9 705.2 1175.4 704.7 1175.9 681 1176.4 674.3 1176.9 674.3 1177.4 680 1177.9 680.3 1178.4 679.6 1178.9 680.1 1179.5 679.6 1180 680.9 1180.5 679.8 1181 679.7 1181.5 679.5 1182 705.6 1182.5 705.6 1183 703 1183.5 706 1184 702.7 1184.6 703.2 1185.1 706.4 1185.6 705.9 1186.1 703.8 1186.6 705.8 1187.1 706.5 1187.6 705.1 1188.1 704.3 1188.6 701.9 1189.1 706.1 1189.6 703.1 1190.2 702.8 1190.7 706.4 1191.2 704.8 1191.7 703.7 1192.2 704.8 1192.7 704 1193.2 706.1 1193.7 706.6 1194.2 681.2 1194.7 681.3 1195.3 680.2 1195.8 680.3 1196.3 680.2 1196.8 681.1 1197.3 681 1197.8 680.9 1198.3 679.6 1198.8 679.3 1199.3 679.4 1199.8 681.2 1200.3 706.7 1200.9 702.9 1201.4 705 1201.9 703.7 1202.4 705.5 1202.9 705 1203.4 704.7 1203.9 705.1 1204.4 704.4 1204.9 706.9 1205.4 704 1206 704 1206.5 701.7 1207 704 1207.5 702.6 1208 703.1 1208.5 703.5 1209 703.9 1209.5 703.3 1210 704.3 1210.5 705.2 1211 704.4 1211.6 704.8 1212.1 702.8 1212.6 679.7 1213.1 673.2 1213.6 673.2 1214.1 679.8 1214.6 679.7 1215.1 679.6 1215.6 680.5 1216.1 679.5 1216.7 679.5 1217.2 679.9 1217.7 679.7 1218.2 679.8 1218.7 705.2 1219.2 703.9 1219.7 706.6 1220.2 705.5 1220.7 690.6 1221.2 690.6 1221.7 690.6 1222.3 704.2 1222.8 704.3 1223.3 706 1223.8 702.9 1224.3 705.5 1224.8 704.5 1225.3 705.3 1225.8 704.2 1226.3 703.7 1226.8 702.8 1227.4 706.8 1227.9 704.3 1228.4 703.8 1228.9 705.8 1229.4 705.2 1229.9 706.7 1230.4 706.1 1230.9 680.6 1231.4 681.2 1231.9 680.8 1232.4 679.5 1233 680.2 1233.5 680.3 1234 679.3 1234.5 680.2 1235 679.3 1235.5 680 1236 679.7 1236.5 681.2 1237 704.4 1237.5 703.7 1238.1 706.7 1238.6 703 1239.1 706.3 1239.6 704.9 1240.1 706.2 1240.6 704.8 1241.1 704.3 1241.6 706.7 1242.1 700.8 1242.6 704.7 1243.1 703.3 1243.7 704.1 1244.2 705.7 1244.7 705.7 1245.2 706.9 1245.7 705.9 1246.2 706.8 1246.7 706.3 1247.2 703.7 1247.7 705.3 1248.2 703.1 1248.8 703.8 1249.3 681.3 1249.8 679.3 1250.3 679.4 1250.8 681.2 1251.3 679.5 1251.8 680.5 1252.3 680.4 1252.8 679.3 1253.3 680.9 1253.8 680.3 1254.4 679.4 1254.9 679.8 1255.4 704.9 1255.9 702.8 1256.4 703.5 1256.9 704.4 1257.4 706.4 1257.9 704.3 1258.4 705 1258.9 706.1 1259.5 706.7 1260 704.7 1260.5 704.3 1261 702 1261.5 705.8 1262 705.2 1262.5 704.7 1263 702.9 1263.5 703.8 1264 705.9 1264.5 706.5 1265.1 703.1 1265.6 703.6 1266.1 704.3 1266.6 705.4 1267.1 705.8 1267.6 679.9 1268.1 680.2 1268.6 680.1 1269.1 680 1269.6 679.8 1270.2 681 1270.7 680.8 1271.2 679.3 1271.7 679.4 1272.2 679.5 1272.7 681.3 1273.2 681.3 1273.7 705.8 1274.2 705.1 1274.7 704.3 1275.2 706.5 1275.8 704.6 1276.3 706.6 1276.8 706.6 1277.3 704.1 1277.8 704.6 1278.3 704.3 1278.8 703.2 1279.3 703.9 1279.8 703.8 1280.3 704.5 1280.9 703.5 1281.4 703.7 1281.9 706 1282.4 705.1 1282.9 705.8 1283.4 703.5 1283.9 705.4 1284.4 704.2 1284.9 702.7 1285.4 705.6 1285.9 680.2 1286.5 679.8 1287 679.4 1287.5 680.5 1288 680.6 1288.5 681.2 1289 679.5 1289.5 681.2 1290 681.2 1290.5 680.2 1291 680.3 1291.6 679.9 1292.1 705.7 1292.6 703.6 1293.1 706.6 1293.6 706 1294.1 704.1 1294.6 706.6 1295.1 705.6 1295.6 703.9 1296.1 704 1296.6 705.7 1297.2 704.2 1297.7 701.7 1298.2 706.4 1298.7 704.5 1299.2 702.9 1299.7 705.1 1300.2 703.5 1300.7 705.6 1301.2 705.6 1301.7 705.2 1302.3 703 1302.8 703.1 1303.3 705.9 1303.8 705.4 1304.3 680.6 1304.8 680.6 1305.3 680.5 1305.8 680.6 1306.3 681 1306.8 680.2 1307.3 679.7 1307.9 680.2 1308.4 679.6 1308.9 680.2 1309.4 681 1309.9 679.8 1310.4 703.2 1310.9 705.7 1311.4 706.8 1311.9 704.7 1312.4 704.6 1313 704.5 1313.5 702.8 1314 704.2 1314.5 703.5 1315 706.7 1315.5 704.6 1316 704.5 1316.5 703.8 1317 706.6 1317.5 706.3 1318 704.2 1318.6 705.9 1319.1 706 1319.6 703.7 1320.1 704.7 1320.6 703.7 1321.1 705.3 1321.6 705.5 1322.1 702.8 1322.6 679.9 1323.1 680.3 1323.7 680.2 1324.2 679.8 1324.7 679.9 1325.2 679.4 1325.7 680.5 1326.2 679.6 1326.7 680 1327.2 679.6 1327.7 679.7 1328.2 679.6 1328.7 703.2 1329.3 702.9 1329.8 704.2 1330.3 704.7 1330.8 703.9 1331.3 703.5 1331.8 705.1 1332.3 705.1 1332.8 706.3 1333.3 703.8 1333.8 700.6 1334.4 704.1 1334.9 703 1335.4 700.7 1335.9 703.5 1336.4 704.2 1336.9 703.6 1337.4 706.2 1337.9 706.7 1338.4 705 1338.9 704.5 1339.4 703.1 1340 706.8 1340.5 706.5 1341 681 1341.5 680.9 1342 680.9 1342.5 679.9 1343 680.1 1343.5 680.9 1344 681 1344.5 680.8 1345.1 681 1345.6 679.8 1346.1 680.7 1346.6 680.2 1347.1 703.5 1347.6 704.9 1348.1 705.8 1348.6 703.2 1349.1 703 1349.6 705.5 1350.1 704.6 1350.7 702.9 1351.2 704.9 1351.7 706 1352.2 706.7 1352.7 701.4 1353.2 704.7 1353.7 705.8 1354.2 702 1354.7 706.9 1355.2 704.9 1355.8 705.4 1356.3 703.5 1356.8 703.9 1357.3 704.4 1357.8 706.3 1358.3 706.3 1358.8 705.6 1359.3 680.8 1359.8 676.1 1360.3 676.1 1360.8 680 1361.4 679.3 1361.9 680.8 1362.4 680.2 1362.9 681.1 1363.4 679.7 1363.9 681.4 1364.4 679.6 1364.9 679.6 1365.4 703.4 1365.9 706.6 1366.5 705.8 1367 703.9 1367.5 706.5 1368 704.9 1368.5 704.9 1369 702.9 1369.5 704.4 1370 703.3 1370.5 705.6 1371 705.2 1371.5 706.6 1372.1 706.1 1372.6 702.6 1373.1 703.4 1373.6 705.6 1374.1 705.6 1374.6 706.6 1375.1 705.6 1375.6 704.9 1376.1 703.9 1376.6 705.4 1377.2 704 1377.7 681.2 1378.2 680.5 1378.7 680.4 1379.2 679.3 1379.7 679.6 1380.2 680 1380.7 681.4 1381.2 680.6 1381.7 679.9 1382.2 680.9 1382.8 680.2 1383.3 680.4 1383.8 706.9 1384.3 702.7 1384.8 703.5 1385.3 706.1 1385.8 704.3 1386.3 705.7 1386.8 705.3 1387.3 704.6 1387.9 705.7 1388.4 705.5 1388.9 705.3 1389.4 703.7 1389.9 622.5 1390.4 622.5 1390.9 622.5 1391.4 622.5 1391.9 622.5 1392.4 639.1 1392.9 639.1 1393.5 639.1 1394 703.9 1394.5 706.2 1395 705.2 1395.5 703.4 1396 680.1 1396.5 681.2 1397 680.9 1397.5 681 1398 681.1 1398.6 680.5 1399.1 681.2 1399.6 679.4 1400.1 680.5 1400.6 680.3 1401.1 680 1401.6 679.7 1402.1 703.4 1402.6 705.3 1403.1 705.5 1403.6 705.2 1404.2 706.9 1404.7 705.2 1405.2 704 1405.7 702.8 1406.2 703.6 1406.7 704.1 1407.2 702.2 1407.7 703.4 1408.2 702 1408.7 705.3 1409.3 703.6 1409.8 704.3 1410.3 706.3 1410.8 703.7 1411.3 703.1 1411.8 704.6 1412.3 705.4 1412.8 704.8 1413.3 706.3 1413.8 703.9 1414.3 679.3 1414.9 680.3 1415.4 679.9 1415.9 679.6 1416.4 681 1416.9 679.4 1417.4 680 1417.9 681 1418.4 681.2 1418.9 680.9 1419.4 680.2 1420 679.9 1420.5 705.5 1421 703 1421.5 705.4 1422 705 1422.5 706.4 1423 702.8 1423.5 706.4 1424 703.1 1424.5 704.6 1425 704.6 1425.6 702.4 1426.1 703.1 1426.6 703.5 1427.1 706.4 1427.6 705.7 1428.1 705.9 1428.6 704.5 1429.1 703.4 1429.6 706.1 1430.1 704.6 1430.7 706.6 1431.2 706.8 1431.7 706.2 1432.2 702.7 1432.7 679.4 1433.2 680 1433.7 680.7 1434.2 680 1434.7 679.8 1435.2 680.6 1435.7 680.1 1436.3 679.7 1436.8 681.3 1437.3 681 1437.8 680.4 1438.3 681.1 1438.8 705.3 1439.3 704.5 1439.8 706.2 1440.3 704.7 1440.8 705.8 1441.4 704.5 1441.9 705.5 1442.4 704.2 1442.9 706.8 1443.4 704.1 1443.9 706.3 1444.4 702.3 1444.9 705.2 1445.4 704 1445.9 701.6 1446.4 702.7 1447 703.4 1447.5 703.3 1448 705.2 1448.5 705.1 1449 704.5 1449.5 703.1 1450 704.7 1450.5 704.7 1451 680.5 1451.5 679.5 1452.1 680.7 1452.6 681.3 1453.1 679.8 1453.6 679.5 1454.1 679.8 1454.6 680.1 1455.1 679.8 1455.6 680.7 1456.1 680.1 1456.6 681.2 1457.1 706.4 1457.7 705 1458.2 704.8 1458.7 705.2 1459.2 706.7 1459.7 704 1460.2 704.7 1460.7 705.9 1461.2 705.6 1461.7 705.3 1462.2 703.8 1462.8 703.1 1463.3 704.1 1463.8 705.1 1464.3 706 1464.8 704.5 1465.3 703.1 1465.8 706.5 1466.3 703.6 1466.8 706.4 1467.3 704.6 1467.8 702.9 1468.4 706.9 1468.9 705.9 1469.4 680.7 1469.9 680.7 1470.4 681.2 1470.9 679.5 1471.4 679.6 1471.9 680.5 1472.4 680.6 1472.9 680.1 1473.5 681.3 1474 681.3 1474.5 679.5 1475 680.7 1475.5 704.8 1476 703 1476.5 702.8 1477 704.9 1477.5 706.1 1478 705.7 1478.5 703 1479.1 703.1 1479.6 706.1 1480.1 703.4 1480.6 703.3 1481.1 706.2 1481.6 700.6 1482.1 702.1 1482.6 701.1 1483.1 706.5 1483.6 703.8 1484.2 705.6 1484.7 703.1 1485.2 703.2 1485.7 703.9 1486.2 706.4 1486.7 704 1487.2 702.9 1487.7 680.4 1488.2 676.8 1488.7 676.8 1489.2 680.7 1489.8 679.9 1490.3 681 1490.8 681 1491.3 680.9 1491.8 680 1492.3 679.7 1492.8 680.6 1493.3 680 1493.8 703.2 1494.3 704.4 1494.9 706 1495.4 705.7 1495.9 703 1496.4 704.1 1496.9 705.8 1497.4 704.2 1497.9 706.6 1498.4 702.8 1498.9 705.1 1499.4 702.5 1499.9 702.3 1500.5 705.9 1501 704.4 1501.5 703.7 1502 705.9 1502.5 705.8 1503 704.6 1503.5 706.1 1504 703.1 1504.5 702.7 1505 706.8 1505.6 705 1506.1 679.8 1506.6 680.6 1507.1 679.4 1507.6 680.3 1508.1 681 1508.6 680.2 1509.1 680 1509.6 680.6 1510.1 680 1510.6 679.7 1511.2 680.3 1511.7 680.3 1512.2 703.3 1512.7 704 1513.2 704.7 1513.7 702.9 1514.2 706.2 1514.7 703.6 1515.2 706.2 1515.7 704.3 1516.3 705.9 1516.8 705.1 1517.3 703.6 1517.8 701.4 1518.3 702.7 1518.8 702.3 1519.3 706.8 1519.8 703.9 1520.3 704.5 1520.8 703.2 1521.3 706.2 1521.9 706.3 1522.4 706.9 1522.9 704.8 1523.4 705.1 1523.9 705.1 1524.4 680.8 1524.9 676.4 1525.4 676.4 1525.9 679.4 1526.4 680.2 1527 680.2 1527.5 679.7 1528 680.9 1528.5 681.1 1529 680.7 1529.5 681.3 1530 680.7 1530.5 704.3 1531 704.7 1531.5 705.8 1532 704.4 1532.6 706.6 1533.1 703.4 1533.6 706.2 1534.1 705.9 1534.6 706.3 1535.1 704 1535.6 703.4 1536.1 704.5 1536.6 703.3 1537.1 700.7 1537.7 704.9 1538.2 702.7 1538.7 706.3 1539.2 705 1539.7 703.8 1540.2 706.8 1540.7 705.9 1541.2 703.1 1541.7 706.3 1542.2 705.3 1542.7 680.7 1543.3 680.5 1543.8 681.2 1544.3 681.3 1544.8 679.3 1545.3 679.8 1545.8 679.8 1546.3 680.9 1546.8 680.8 1547.3 680.2 1547.8 680.9 1548.4 680.4 1548.9 679.4 L1548.9 732.5 L998.6 732.5 Z" fill="#7eb26d" fill-opacity="0.8" stroke="none"/>
<path d="M998.6 686.4 999.1 705 999.6 704.6 1000.1 703 1000.6 705 1001.1 704.8 1001.6 704.4 1002.1 706.2 1002.6 704.8 1003.2 704.3 1003.7 701.4 1004.2 703.5 1004.7 703.5 1005.2 706.8 1005.7 702.8 1006.2 704.3 1006.7 706.3 1007.2 706.9 1007.7 704.7 1008.3 706.7 1008.8 706.1 1009.3 705.9 1009.8 706.8 1010.3 705 1010.8 680.4 1011.3 679.6 1011.8 680.3 1012.3 680 1012.8 680.3 1013.3 680 1013.9 680.4 1014.4 680.8 1014.9 679.3 1015.4 679.3 1015.9 679.6 1016.4 679.9 1016.9 705.6 1017.4 706 1017.9 705.7 1018.4 706.6 1019 703.7 1019.5 705.2 1020 703.3 1020.5 705.3 1021 702.9 1021.5 703.3 1022 704.8 1022.5 700.9 1023 700.6 1023.5 706.6 1024 701.5 1024.6 706.6 1025.1 705.5 1025.6 702.8 1026.1 703.7 1026.6 706.4 1027.1 705.9 1027.6 706.5 1028.1 706.7 1028.6 703.5 1029.1 681 1029.7 680.2 1030.2 680.4 1030.7 681 1031.2 679.8 1031.7 681.1 1032.2 680 1032.7 681.1 1033.2 680.5 1033.7 680.9 1034.2 680.8 1034.7 679.3 1035.3 703.5 1035.8 705.6 1036.3 703.2 1036.8 706 1037.3 705.3 1037.8 703.3 1038.3 704.2 1038.8 706.5 1039.3 702.7 1039.8 706 1040.4 705.8 1040.9 703.4 1041.4 704.5 1041.9 702.3 1042.4 702.2 1042.9 705 1043.4 702.9 1043.9 704.9 1044.4 704.5 1044.9 703.2 1045.4 706.2 1046 706.3 1046.5 703.1 1047 703.5 1047.5 680.8 1048 681 1048.5 679.8 1049 679.4 1049.5 681 1050 679.4 1050.5 679.5 1051.1 680.1 1051.6 680.5 1052.1 681.2 1052.6 681.3 1053.1 679.3 1053.6 705.9 1054.1 703.9 1054.6 705.8 1055.1 703.4 1055.6 704.4 1056.1 705.7 1056.7 706.2 1057.2 703.9 1057.7 706.6 1058.2 706 1058.7 704.6 1059.2 702.2 1059.7 700.9 1060.2 704.7 1060.7 702.9 1061.2 706.2 1061.8 705.4 1062.3 704.5 1062.8 706.4 1063.3 705.4 1063.8 703.1 1064.3 702.8 1064.8 704.1 1065.3 704 1065.8 680.1 1066.3 677.1 1066.9 677.1 1067.4 681.3 1067.9 679.4 1068.4 679.9 1068.9 679.3 1069.4 681.3 1069.9 680 1070.4 680.4 1070.9 679.8 1071.4 680.7 1071.9 702.7 1072.5 706.6 1073 704.6 1073.5 703.8 1074 703.1 1074.5 703.8 1075 703.9 1075.5 703.6 1076 703 1076.5 705.4 1077 704 1077.6 701.1 1078.1 703.6 1078.6 704.5 1079.1 705.3 1079.6 704.3 1080.1 706.6 1080.6 704.2 1081.1 702.7 1081.6 703.2 1082.1 703.8 1082.6 705.3 1083.2 703.8 1083.7 704.5 1084.2 680.4 1084.7 679.6 1085.2 681.2 1085.7 679.8 1086.2 681.3 1086.7 680.1 1087.2 680.4 1087.7 680.9 1088.3 679.9 1088.8 680.3 1089.3 680.1 1089.8 679.4 1090.3 705.9 1090.8 706.9 1091.3 705.7 1091.8 704.1 1092.3 706.1 1092.8 706.2 1093.3 703.1 1093.9 704.1 1094.4 705.1 1094.9 703.1 1095.4 695.6 1095.9 693.5 1096.4 703.5 1096.9 701.1 1097.4 702.3 1097.9 706.4 1098.4 704.8 1099 703.4 1099.5 703.3 1100 703.9 1100.5 702.9 1101 705.8 1101.5 706.2 1102 705 1102.5 680.8 1103 677.1 1103.5 677.1 1104 680 1104.6 680.3 1105.1 680.7 1105.6 679.6 1106.1 679.3 1106.6 680.4 1107.1 681.2 1107.6 681.3 1108.1 679.5 1108.6 706.8 1109.1 703.9 1109.7 704.5 1110.2 705.6 1110.7 703.6 1111.2 706.9 1111.7 706.4 1112.2 705 1112.7 706.8 1113.2 703.4 1113.7 703.8 1114.2 706.7 1114.7 705 1115.3 704.1 1115.8 702.9 1116.3 706.1 1116.8 704.9 1117.3 706.2 1117.8 706.9 1118.3 704.9 1118.8 703.9 1119.3 706.2 1119.8 705.8 1120.4 705.5 1120.9 679.9 1121.4 680.3 1121.9 680.1 1122.4 679.8 1122.9 680.5 1123.4 679.7 1123.9 679.4 1124.4 681.2 1124.9 679.4 1125.4 679.8 1126 681.1 1126.5 680.4 1127 704.3 1127.5 703.1 1128 705.3 1128.5 704.5 1129 703.2 1129.5 703.5 1130 702.9 1130.5 705 1131.1 704.2 1131.6 706.1 1132.1 703.9 1132.6 704.2 1133.1 706 1133.6 702.8 1134.1 704.7 1134.6 705.6 1135.1 703.1 1135.6 703.3 1136.1 705.5 1136.7 706.6 1137.2 705.1 1137.7 704.6 1138.2 703.7 1138.7 704.9 1139.2 681.3 1139.7 679.7 1140.2 681.2 1140.7 679.7 1141.2 681 1141.8 680.7 1142.3 679.7 1142.8 681.1 1143.3 681.1 1143.8 680.3 1144.3 679.8 1144.8 679.6 1145.3 704 1145.8 702.9 1146.3 704.8 1146.8 702.9 1147.4 706.6 1147.9 706 1148.4 704.7 1148.9 705.7 1149.4 703.8 1149.9 704.2 1150.4 704.7 1150.9 702.4 1151.4 705.3 1151.9 701 1152.5 703.3 1153 704.7 1153.5 704.5 1154 706.1 1154.5 704.7 1155 704.8 1155.5 704.4 1156 706.8 1156.5 702.8 1157 704.7 1157.5 680.5 1158.1 679.7 1158.6 680.2 1159.1 680.3 1159.6 679.9 1160.1 681.2 1160.6 680.2 1161.1 680.5 1161.6 679.3 1162.1 679.4 1162.6 680.8 1163.2 680.4 1163.7 706.4 1164.2 705.1 1164.7 703.5 1165.2 703.1 1165.7 704.9 1166.2 705.6 1166.7 706.1 1167.2 704.3 1167.7 703 1168.2 706.4 1168.8 701.5 1169.3 704 1169.8 701.9 1170.3 705.4 1170.8 706.5 1171.3 706.4 1171.8 704.8 1172.3 705.9 1172.8 706.1 1173.3 704.7 1173.9 705.1 1174.4 705.3 1174.9 705.2 1175.4 704.7 1175.9 681 1176.4 674.3 1176.9 674.3 1177.4 680 1177.9 680.3 1178.4 679.6 1178.9 680.1 1179.5 679.6 1180 680.9 1180.5 679.8 1181 679.7 1181.5 679.5 1182 705.6 1182.5 705.6 1183 703 1183.5 706 1184 702.7 1184.6 703.2 1185.1 706.4 1185.6 705.9 1186.1 703.8 1186.6 705.8 1187.1 706.5 1187.6 705.1 1188.1 704.3 1188.6 701.9 1189.1 706.1 1189.6 703.1 1190.2 702.8 1190.7 706.4 1191.2 704.8 1191.7 703.7 1192.2 704.8 1192.7 704 1193.2 706.1 1193.7 706.6 1194.2 681.2 1194.7 681.3 1195.3 680.2 1195.8 680.3 1196.3 680.2 1196.8 681.1 1197.3 681 1197.8 680.9 1198.3 679.6 1198.8 679.3 1199.3 679.4 1199.8 681.2 1200.3 706.7 1200.9 702.9 1201.4 705 1201.9 703.7 1202.4 705.5 1202.9 705 1203.4 704.7 1203.9 705.1 1204.4 704.4 1204.9 706.9 1205.4 704 1206 704 1206.5 701.7 1207 704 1207.5 702.6 1208 703.1 1208.5 703.5 1209 703.9 1209.5 703.3 1210 704.3 1210.5 705.2 1211 704.4 1211.6 704.8 1212.1 702.8 1212.6 679.7 1213.1 673.2 1213.6 673.2 1214.1 679.8 1214.6 679.7 1215.1 679.6 1215.6 680.5 1216.1 679.5 1216.7 679.5 1217.2 679.9 1217.7 679.7 1218.2 679.8 1218.7 705.2 1219.2 703.9 1219.7 706.6 1220.2 705.5 1220.7 690.6 1221.2 690.6 1221.7 690.6 1222.3 704.2 1222.8 704.3 1223.3 706 1223.8 702.9 1224.3 705.5 1224.8 704.5 1225.3 705.3 1225.8 704.2 1226.3 703.7 1226.8 702.8 1227.4 706.8 1227.9 704.3 1228.4 703.8 1228.9 705.8 1229.4 705.2 1229.9 706.7 1230.4 706.1 1230.9 680.6 1231.4 681.2 1231.9 680.8 1232.4 679.5 1233 680.2 1233.5 680.3 1234 679.3 1234.5 680.2 1235 679.3 1235.5 680 1236 679.7 1236.5 681.2 1237 704.4 1237.5 703.7 1238.1 706.7 1238.6 703 1239.1 706.3 1239.6 704.9 1240.1 706.2 1240.6 704.8 1241.1 704.3 1241.6 706.7 1242.1 700.8 1242.6 704.7 1243.1 703.3 1243.7 704.1 1244.2 705.7 1244.7 705.7 1245.2 706.9 1245.7 705.9 1246.2 706.8 1246.7 706.3 1247.2 703.7 1247.7 705.3 1248.2 703.1 1248.8 703.8 1249.3 681.3 1249.8 679.3 1250.3 679.4 1250.8 681.2 1251.3 679.5 1251.8 680.5 1252.3 680.4 1252.8 679.3 1253.3 680.9 1253.8 680.3 1254.4 679.4 1254.9 679.8 1255.4 704.9 1255.9 702.8 1256.4 703.5 1256.9 704.4 1257.4 706.4 1257.9 704.3 1258.4 705 1258.9 706.1 1259.5 706.7 1260 704.7 1260.5 704.3 1261 702 1261.5 705.8 1262 705.2 1262.5 704.7 1263 702.9 1263.5 703.8 1264 705.9 1264.5 706.5 1265.1 703.1 1265.6 703.6 1266.1 704.3 1266.6 705.4 1267.1 705.8 1267.6 679.9 1268.1 680.2 1268.6 680.1 1269.1 680 1269.6 679.8 1270.2 681 1270.7 680.8 1271.2 679.3 1271.7 679.4 1272.2 679.5 1272.7 681.3 1273.2 681.3 1273.7 705.8 1274.2 705.1 1274.7 704.3 1275.2 706.5 1275.8 704.6 1276.3 706.6 1276.8 706.6 1277.3 704.1 1277.8 704.6 1278.3 704.3 1278.8 703.2 1279.3 703.9 1279.8 703.8 1280.3 704.5 1280.9 703.5 1281.4 703.7 1281.9 706 1282.4 705.1 1282.9 705.8 1283.4 703.5 1283.9 705.4 1284.4 704.2 1284.9 702.7 1285.4 705.6 1285.9 680.2 1286.5 679.8 1287 679.4 1287.5 680.5 1288 680.6 1288.5 681.2 1289 679.5 1289.5 681.2 1290 681.2 1290.5 680.2 1291 680.3 1291.6 679.9 1292.1 705.7 1292.6 703.6 1293.1 706.6 1293.6 706 1294.1 704.1 1294.6 706.6 1295.1 705.6 1295.6 703.9 1296.1 704 1296.6 705.7 1297.2 704.2 1297.7 701.7 1298.2 706.4 1298.7 704.5 1299.2 702.9 1299.7 705.1 1300.2 703.5 1300.7 705.6 1301.2 705.6 1301.7 705.2 1302.3 703 1302.8 703.1 1303.3 705.9 1303.8 705.4 1304.3 680.6 1304.8 680.6 1305.3 680.5 1305.8 680.6 1306.3 681 1306.8 680.2 1307.3 679.7 1307.9 680.2 1308.4 679.6 1308.9 680.2 1309.4 681 1309.9 679.8 1310.4 703.2 1310.9 705.7 1311.4 706.8 1311.9 704.7 1312.4 704.6 1313 704.5 1313.5 702.8 1314 704.2 1314.5 703.5 1315 706.7 1315.5 704.6 1316 704.5 1316.5 703.8 1317 706.6 1317.5 706.3 1318 704.2 1318.6 705.9 1319.1 706 1319.6 703.7 1320.1 704.7 1320.6 703.7 1321.1 705.3 1321.6 705.5 1322.1 702.8 1322.6 679.9 1323.1 680.3 1323.7 680.2 1324.2 679.8 1324.7 679.9 1325.2 679.4 1325.7 680.5 1326.2 679.6 1326.7 680 1327.2 679.6 1327.7 679.7 1328.2 679.6 1328.7 703.2 1329.3 702.9 1329.8 704.2 1330.3 704.7 1330.8 703.9 1331.3 703.5 1331.8 705.1 1332.3 705.1 1332.8 706.3 1333.3 703.8 1333.8 700.6 1334.4 704.1 1334.9 703 1335.4 700.7 1335.9 703.5 1336.4 704.2 1336.9 703.6 1337.4 706.2 1337.9 706.7 1338.4 705 1338.9 704.5 1339.4 703.1 1340 706.8 1340.5 706.5 1341 681 1341.5 680.9 1342 680.9 1342.5 679.9 1343 680.1 1343.5 680.9 1344 681 1344.5 680.8 1345.1 681 1345.6 679.8 1346.1 680.7 1346.6 680.2 1347.1 703.5 1347.6 704.9 1348.1 705.8 1348.6 703.2 1349.1 703 1349.6 705.5 1350.1 704.6 1350.7 702.9 1351.2 704.9 1351.7 706 1352.2 706.7 1352.7 701.4 1353.2 704.7 1353.7 705.8 1354.2 702 1354.7 706.9 1355.2 704.9 1355.8 705.4 1356.3 703.5 1356.8 703.9 1357.3 704.4 1357.8 706.3 1358.3 706.3 1358.8 705.6 1359.3 680.8 1359.8 676.1 1360.3 676.1 1360.8 680 1361.4 679.3 1361.9 680.8 1362.4 680.2 1362.9 681.1 1363.4 679.7 1363.9 681.4 1364.4 679.6 1364.9 679.6 1365.4 703.4 1365.9 706.6 1366.5 705.8 1367 703.9 1367.5 706.5 1368 704.9 1368.5 704.9 1369 702.9 1369.5 704.4 1370 703.3 1370.5 705.6 1371 705.2 1371.5 706.6 1372.1 706.1 1372.6 702.6 1373.1 703.4 1373.6 705.6 1374.1 705.6 1374.6 706.6 1375.1 705.6 1375.6 704.9 1376.1 703.9 1376.6 705.4 1377.2 704 1377.7 681.2 1378.2 680.5 1378.7 680.4 1379.2 679.3 1379.7 679.6 1380.2 680 1380.7 681.4 1381.2 680.6 1381.7 679.9 1382.2 680.9 1382.8 680.2 1383.3 680.4 1383.8 706.9 1384.3 702.7 1384.8 703.5 1385.3 706.1 1385.8 704.3 1386.3 705.7 1386.8 705.3 1387.3 704.6 1387.9 705.7 1388.4 705.5 1388.9 705.3 1389.4 703.7 1389.9 622.5 1390.4 622.5 1390.9 622.5 1391.4 622.5 1391.9 622.5 1392.4 639.1 1392.9 639.1 1393.5 639.1 1394 703.9 1394.5 706.2 1395 705.2 1395.5 703.4 1396 680.1 1396.5 681.2 1397 680.9 1397.5 681 1398 681.1 1398.6 680.5 1399.1 681.2 1399.6 679.4 1400.1 680.5 1400.6 680.3 1401.1 680 1401.6 679.7 1402.1 703.4 1402.6 705.3 1403.1 705.5 1403.6 705.2 1404.2 706.9 1404.7 705.2 1405.2 704 1405.7 702.8 1406.2 703.6 1406.7 704.1 1407.2 702.2 1407.7 703.4 1408.2 702 1408.7 705.3 1409.3 703.6 1409.8 704.3 1410.3 706.3 1410.8 703.7 1411.3 703.1 1411.8 704.6 1412.3 705.4 1412.8 704.8 1413.3 706.3 1413.8 703.9 1414.3 679.3 1414.9 680.3 1415.4 679.9 1415.9 679.6 1416.4 681 1416.9 679.4 1417.4 680 1417.9 681 1418.4 681.2 1418.9 680.9 1419.4 680.2 1420 679.9 1420.5 705.5 1421 703 1421.5 705.4 1422 705 1422.5 706.4 1423 702.8 1423.5 706.4 1424 703.1 1424.5 704.6 1425 704.6 1425.6 702.4 1426.1 703.1 1426.6 703.5 1427.1 706.4 1427.6 705.7 1428.1 705.9 1428.6 704.5 1429.1 703.4 1429.6 706.1 1430.1 704.6 1430.7 706.6 1431.2 706.8 1431.7 706.2 1432.2 702.7 1432.7 679.4 1433.2 680 1433.7 680.7 1434.2 680 1434.7 679.8 1435.2 680.6 1435.7 680.1 1436.3 679.7 1436.8 681.3 1437.3 681 1437.8 680.4 1438.3 681.1 1438.8 705.3 1439.3 704.5 1439.8 706.2 1440.3 704.7 1440.8 705.8 1441.4 704.5 1441.9 705.5 1442.4 704.2 1442.9 706.8 1443.4 704.1 1443.9 706.3 1444.4 702.3 1444.9 705.2 1445.4 704 1445.9 701.6 1446.4 702.7 1447 703.4 1447.5 703.3 1448 705.2 1448.5 705.1 1449 704.5 1449.5 703.1 1450 704.7 1450.5 704.7 1451 680.5 1451.5 679.5 1452.1 680.7 1452.6 681.3 1453.1 679.8 1453.6 679.5 1454.1 679.8 1454.6 680.1 1455.1 679.8 1455.6 680.7 1456.1 680.1 1456.6 681.2 1457.1 706.4 1457.7 705 1458.2 704.8 1458.7 705.2 1459.2 706.7 1459.7 704 1460.2 704.7 1460.7 705.9 1461.2 705.6 1461.7 705.3 1462.2 703.8 1462.8 703.1 1463.3 704.1 1463.8 705.1 1464.3 706 1464.8 704.5 1465.3 703.1 1465.8 706.5 1466.3 703.6 1466.8 706.4 1467.3 704.6 1467.8 702.9 1468.4 706.9 1468.9 705.9 1469.4 680.7 1469.9 680.7 1470.4 681.2 1470.9 679.5 1471.4 679.6 1471.9 680.5 1472.4 680.6 1472.9 680.1 1473.5 681.3 1474 681.3 1474.5 679.5 1475 680.7 1475.5 704.8 1476 703 1476.5 702.8 1477 704.9 1477.5 706.1 1478 705.7 1478.5 703 1479.1 703.1 1479.6 706.1 1480.1 703.4 1480.6 703.3 1481.1 706.2 1481.6 700.6 1482.1 702.1 1482.6 701.1 1483.1 706.5 1483.6 703.8 1484.2 705.6 1484.7 703.1 1485.2 703.2 1485.7 703.9 1486.2 706.4 1486.7 704 1487.2 702.9 1487.7 680.4 1488.2 676.8 1488.7 676.8 1489.2 680.7 1489.8 679.9 1490.3 681 1490.8 681 1491.3 680.9 1491.8 680 1492.3 679.7 1492.8 680.6 1493.3 680 1493.8 703.2 1494.3 704.4 1494.9 706 1495.4 705.7 1495.9 703 1496.4 704.1 1496.9 705.8 1497.4 704.2 1497.9 706.6 1498.4 702.8 1498.9 705.1 1499.4 702.5 1499.9 702.3 1500.5 705.9 1501 704.4 1501.5 703.7 1502 705.9 1502.5 705.8 1503 704.6 1503.5 706.1 1504 703.1 1504.5 702.7 1505 706.8 1505.6 705 1506.1 679.8 1506.6 680.6 1507.1 679.4 1507.6 680.3 1508.1 681 1508.6 680.2 1509.1 680 1509.6 680.6 1510.1 680 1510.6 679.7 1511.2 680.3 1511.7 680.3 1512.2 703.3 1512.7 704 1513.2 704.7 1513.7 702.9 1514.2 706.2 1514.7 703.6 1515.2 706.2 1515.7 704.3 1516.3 705.9 1516.8 705.1 1517.3 703.6 1517.8 701.4 1518.3 702.7 1518.8 702.3 1519.3 706.8 1519.8 703.9 1520.3 704.5 1520.8 703.2 1521.3 706.2 1521.9 706.3 1522.4 706.9 1522.9 704.8 1523.4 705.1 1523.9 705.1 1524.4 680.8 1524.9 676.4 1525.4 676.4 1525.9 679.4 1526.4 680.2 1527 680.2 1527.5 679.7 1528 680.9 1528.5 681.1 1529 680.7 1529.5 681.3 1530 680.7 1530.5 704.3 1531 704.7 1531.5 705.8 1532 704.4 1532.6 706.6 1533.1 703.4 1533.6 706.2 1534.1 705.9 1534.6 706.3 1535.1 704 1535.6 703.4 1536.1 704.5 1536.6 703.3 1537.1 700.7 1537.7 704.9 1538.2 702.7 1538.7 706.3 1539.2 705 1539.7 703.8 1540.2 706.8 1540.7 705.9 1541.2 703.1 1541.7 706.3 1542.2 705.3 1542.7 680.7 1543.3 680.5 1543.8 681.2 1544.3 681.3 1544.8 679.3 1545.3 679.8 1545.8 679.8 1546.3 680.9 1546.8 680.8 1547.3 680.2 1547.8 680.9 1548.4 680.4 1548.9 679.4" fill="none" stroke="#7eb26d" stroke-width="3" stroke-linejoin="round" stroke-linecap="butt"/>
<g font-size="10" fill="#d8d9da" stroke="#d8d9da" stroke-width="0.2"><text x="993.2" y="735.4" text-anchor="end">0 W</text><text x="993.2" y="699.9" text-anchor="end">10 W</text><text x="993.2" y="664.4" text-anchor="end">20 W</text><text x="993.2" y="628.9" text-anchor="end">30 W</text><text x="993.2" y="593.4" text-anchor="end">40 W</text><text x="1050.5" y="747.9" text-anchor="middle">8/5</text><text x="1105.5" y="747.9" text-anchor="middle">8/8</text><text x="1160.5" y="747.9" text-anchor="middle">8/11</text><text x="1215.5" y="747.9" text-anchor="middle">8/14</text><text x="1270.5" y="747.9" text-anchor="middle">8/17</text><text x="1325.5" y="747.9" text-anchor="middle">8/20</text><text x="1380.5" y="747.9" text-anchor="middle">8/23</text><text x="1435.5" y="747.9" text-anchor="middle">8/26</text><text x="1490.5" y="747.9" text-anchor="middle">8/29</text><text x="1545.5" y="747.9" text-anchor="middle">9/1</text></g>
<rect x="979.5" y="767.5" width="12" height="4" fill="#7eb26d"/>
<text x="995.5" y="772.6" font-size="11.1" fill="#d8d9da" stroke="#d8d9da" stroke-width="0.2" xml:space="preserve">Load-power.last  Min: 7 W  Max: 31 W  Avg: 10 W  Current: 14 W</text>
<g stroke="rgba(255,255,255,0.14)" stroke-width="1" fill="none" shape-rendering="crispEdges"><path d="M71 972.5H300"/><path d="M71 944.5H300"/><path d="M71 915.5H300"/><path d="M71 887.5H300"/><path d="M71 858.5H300"/><path d="M71 830.5H300"/><path d="M115.5 830V973"/><path d="M176.5 830V973"/><path d="M237.5 830V973"/><path d="M298.5 830V973"/></g>
<path d="M71 918 71.5 917.2 72 914.8 72.5 911.3 73 907.2 73.5 903 74 899.5 74.5 897.2 75 896.3 75.5 898 76 902.6 76.6 909.3 77.1 916.7 77.6 923.4 78.1 928 78.7 929.7 79.2 927.9 79.7 923 80.2 915.8 80.8 907.9 81.3 900.7 81.8 895.8 82.3 894 82.8 895.6 83.3 900.1 83.8 906.9 84.3 914.8 84.8 922.8 85.3 929.6 85.8 934.1 86.3 935.7 86.9 934 87.4 929.2 87.9 922.3 88.4 914.7 89 907.8 89.5 903 90 901.3 90.5 902.7 91 906.5 91.5 912.1 92 918.8 92.5 925.5 93 931.2 93.5 935 94 936.3 94.5 934.5 95 929.4 95.6 922.1 96.1 913.9 96.6 906.6 97.1 901.5 97.7 899.7 98.2 900.8 98.7 904.1 99.2 908.7 99.8 913.9 100.3 918.6 100.8 921.8 101.3 923 101.9 921.6 102.4 917.5 102.9 911.7 103.4 905.3 104 899.5 104.5 895.4 105 894 105.5 895.5 106.1 899.7 106.6 906 107.2 913.5 107.7 921 108.2 927.3 108.8 931.5 109.3 933 109.8 931.5 110.3 927.4 110.8 921.2 111.3 913.8 111.8 906.5 112.3 900.3 112.8 896.1 113.3 894.7 113.9 896.2 114.4 900.4 114.9 906.6 115.4 913.4 116 919.6 116.5 923.8 117 925.3 117.5 923.9 118 919.7 118.6 913.8 119.1 907.2 119.6 901.3 120.1 897.1 120.7 895.7 121.2 897.4 121.7 902.1 122.2 908.9 122.8 916.4 123.3 923.3 123.8 928 124.3 929.7 124.9 927.8 125.4 922.8 126 915.8 126.6 908.9 127.1 903.9 127.7 902 128.2 902.5 128.8 904.1 129.3 906.4 129.8 909.2 130.4 911.9 130.9 914.2 131.5 915.8 132 916.3 132.5 915.4 133 912.8 133.5 908.8 134 904.2 134.5 899.5 135 895.6 135.5 892.9 136 892 136.5 893.2 137 896.5 137.5 901.6 138 907.5 138.5 913.4 139 918.5 139.5 921.8 140 923 140.5 921.9 141 918.6 141.5 913.7 142 908 142.5 902.3 143 897.4 143.5 894.1 144 893 144.5 894.5 145 898.6 145.6 904.7 146.1 911.3 146.6 917.4 147.1 921.5 147.7 923 148.2 921.8 148.7 918.3 149.2 913 149.7 906.8 150.2 900.6 150.7 895.4 151.2 891.9 151.7 890.7 152.2 892.1 152.7 896.1 153.2 902.2 153.7 909.3 154.2 916.5 154.7 922.5 155.2 926.6 155.7 928 156.2 927.2 156.8 924.8 157.3 921.7 157.9 918.5 158.4 916.2 159 915.3 159.5 916.9 160 921.2 160.6 927.4 161.1 934.3 161.6 940.5 162.1 944.8 162.7 946.3 163.2 943.6 163.8 936.2 164.3 926 164.9 915.8 165.4 908.4 166 905.7 166.5 906.7 167 909.7 167.5 914.1 168 919.3 168.5 924.6 169 929 169.5 932 170 933 170.6 932.1 171.1 929.7 171.7 926.3 172.2 923 172.8 920.6 173.3 919.7 173.8 920.2 174.3 921.7 174.8 924 175.3 926.7 175.8 929.3 176.3 931.6 176.8 933.1 177.3 933.7 177.9 932.4 178.4 928.8 179 923.4 179.5 917 180 910.6 180.6 905.2 181.1 901.6 181.7 900.3 182.2 901.3 182.7 904.1 183.2 908.4 183.7 913.3 184.2 918.3 184.7 922.5 185.2 925.3 185.7 926.3 186.2 925.6 186.8 923.5 187.3 920.4 187.8 916.7 188.4 913 188.9 909.8 189.5 907.7 190 907 190.6 908.1 191.1 911 191.7 915 192.2 919 192.8 921.9 193.3 923 193.8 922.7 194.3 922 194.8 920.9 195.3 919.7 195.8 918.4 196.3 917.3 196.8 916.6 197.3 916.3 197.9 917.6 198.4 921.1 199 925.8 199.6 930.6 200.1 934.1 200.7 935.3 201.2 934 201.7 930.4 202.2 925.1 202.8 919.2 203.3 914 203.8 910.3 204.3 909 204.8 910.3 205.3 914 205.8 919.5 206.3 926 206.8 932.5 207.3 938 207.8 941.7 208.3 943 208.8 941.4 209.3 936.7 209.8 929.6 210.3 921.3 210.8 913 211.3 906 211.8 901.3 212.3 899.7 212.9 901.9 213.4 908.1 213.9 917.2 214.4 927.2 215 936.2 215.5 942.4 216 944.7 216.5 943.3 217 939.4 217.5 933.6 218 926.7 218.5 919.8 219 913.9 219.5 910 220 908.7 220.5 910.5 221 915.8 221.6 923.3 222.1 931.7 222.6 939.2 223.1 944.5 223.7 946.3 224.2 944.2 224.7 938.2 225.2 929.2 225.7 918.5 226.2 907.8 226.7 898.8 227.2 892.8 227.7 890.7 228.2 892.4 228.7 897.4 229.2 904.8 229.7 913.5 230.2 922.2 230.7 929.6 231.2 934.6 231.7 936.3 232.2 933.9 232.7 926.9 233.2 916.9 233.8 905.8 234.3 895.7 234.8 888.8 235.3 886.3 235.9 888.5 236.4 894.5 236.9 903.2 237.4 912.8 238 921.5 238.5 927.5 239 929.7 239.5 927.2 240 920.3 240.6 910.2 241.1 899.1 241.6 889.1 242.1 882.1 242.7 879.7 243.2 881.4 243.7 886.5 244.2 894.1 244.7 903 245.2 911.9 245.7 919.5 246.2 924.6 246.7 926.3 247.2 922.8 247.8 913.2 248.3 900 248.9 886.8 249.4 877.2 250 873.7 250.5 875.2 251 879.4 251.5 885.8 252 893.3 252.5 900.9 253 907.2 253.5 911.5 254 913 254.5 910.6 255 904 255.6 894.5 256.1 883.9 256.6 874.3 257.1 867.7 257.7 865.3 258.2 867 258.7 871.8 259.2 879 259.7 887.5 260.2 896 260.7 903.2 261.2 908 261.7 909.7 262.2 908 262.7 903.3 263.2 896.2 263.7 887.8 264.2 879.5 264.7 872.4 265.2 867.7 265.7 866 266.2 867.9 266.7 873.3 267.2 881 267.8 889.6 268.3 897.4 268.8 902.8 269.3 904.7 269.8 902.8 270.3 897.5 270.8 889.5 271.3 880.2 271.8 870.8 272.3 862.8 272.8 857.5 273.3 855.7 273.8 857.4 274.3 862.4 274.8 869.8 275.3 878.5 275.8 887.2 276.3 894.6 276.8 899.6 277.3 901.3 277.9 899.9 278.4 895.9 279 890.5 279.6 885.1 280.1 881.1 280.7 879.7 281.2 881.5 281.7 886.6 282.2 894.4 282.7 903.5 283.2 912.6 283.7 920.4 284.2 925.5 284.7 927.3 285.2 925.2 285.7 919.2 286.2 910.5 286.8 900.8 287.3 892.2 287.8 886.1 288.3 884 288.9 885.9 289.4 891.3 290 899.4 290.5 909 291 918.6 291.6 926.7 292.1 932.1 292.7 934 293.2 929.9 293.8 918.8 294.3 903.7 294.9 888.5 295.4 877.4 296 873.3 296.5 874.3 297 877 297.5 881.2 298 886 298.5 890.8 299 895 299.5 897.7 300 898.7 L300 972.5 L71 972.5 Z" fill="#7eb26d" fill-opacity="0.8" stroke="none"/>
<path d="M71 918 71.5 917.2 72 914.8 72.5 911.3 73 907.2 73.5 903 74 899.5 74.5 897.2 75 896.3 75.5 898 76 902.6 76.6 909.3 77.1 916.7 77.6 923.4 78.1 928 78.7 929.7 79.2 927.9 79.7 923 80.2 915.8 80.8 907.9 81.3 900.7 81.8 895.8 82.3 894 82.8 895.6 83.3 900.1 83.8 906.9 84.3 914.8 84.8 922.8 85.3 929.6 85.8 934.1 86.3 935.7 86.9 934 87.4 929.2 87.9 922.3 88.4 914.7 89 907.8 89.5 903 90 901.3 90.5 902.7 91 906.5 91.5 912.1 92 918.8 92.5 925.5 93 931.2 93.5 935 94 936.3 94.5 934.5 95 929.4 95.6 922.1 96.1 913.9 96.6 906.6 97.1 901.5 97.7 899.7 98.2 900.8 98.7 904.1 99.2 908.7 99.8 913.9 100.3 918.6 100.8 921.8 101.3 923 101.9 921.6 102.4 917.5 102.9 911.7 103.4 905.3 104 899.5 104.5 895.4 105 894 105.5 895.5 106.1 899.7 106.6 906 107.2 913.5 107.7 921 108.2 927.3 108.8 931.5 109.3 933 109.8 931.5 110.3 927.4 110.8 921.2 111.3 913.8 111.8 906.5 112.3 900.3 112.8 896.1 113.3 894.7 113.9 896.2 114.4 900.4 114.9 906.6 115.4 913.4 116 919.6 116.5 923.8 117 925.3 117.5 923.9 118 919.7 118.6 913.8 119.1 907.2 119.6 901.3 120.1 897.1 120.7 895.7 121.2 897.4 121.7 902.1 122.2 908.9 122.8 916.4 123.3 923.3 123.8 928 124.3 929.7 124.9 927.8 125.4 922.8 126 915.8 126.6 908.9 127.1 903.9 127.7 902 128.2 902.5 128.8 904.1 129.3 906.4 129.8 909.2 130.4 911.9 130.9 914.2 131.5 915.8 132 916.3 132.5 915.4 133 912.8 133.5 908.8 134 904.2 134.5 899.5 135 895.6 135.5 892.9 136 892 136.5 893.2 137 896.5 137.5 901.6 138 907.5 138.5 913.4 139 918.5 139.5 921.8 140 923 140.5 921.9 141 918.6 141.5 913.7 142 908 142.5 902.3 143 897.4 143.5 894.1 144 893 144.5 894.5 145 898.6 145.6 904.7 146.1 911.3 146.6 917.4 147.1 921.5 147.7 923 148.2 921.8 148.7 918.3 149.2 913 149.7 906.8 150.2 900.6 150.7 895.4 151.2 891.9 151.7 890.7 152.2 892.1 152.7 896.1 153.2 902.2 153.7 909.3 154.2 916.5 154.7 922.5 155.2 926.6 155.7 928 156.2 927.2 156.8 924.8 157.3 921.7 157.9 918.5 158.4 916.2 159 915.3 159.5 916.9 160 921.2 160.6 927.4 161.1 934.3 161.6 940.5 162.1 944.8 162.7 946.3 163.2 943.6 163.8 936.2 164.3 926 164.9 915.8 165.4 908.4 166 905.7 166.5 906.7 167 909.7 167.5 914.1 168 919.3 168.5 924.6 169 929 169.5 932 170 933 170.6 932.1 171.1 929.7 171.7 926.3 172.2 923 172.8 920.6 173.3 919.7 173.8 920.2 174.3 921.7 174.8 924 175.3 926.7 175.8 929.3 176.3 931.6 176.8 933.1 177.3 933.7 177.9 932.4 178.4 928.8 179 923.4 179.5 917 180 910.6 180.6 905.2 181.1 901.6 181.7 900.3 182.2 901.3 182.7 904.1 183.2 908.4 183.7 913.3 184.2 918.3 184.7 922.5 185.2 925.3 185.7 926.3 186.2 925.6 186.8 923.5 187.3 920.4 187.8 916.7 188.4 913 188.9 909.8 189.5 907.7 190 907 190.6 908.1 191.1 911 191.7 915 192.2 919 192.8 921.9 193.3 923 193.8 922.7 194.3 922 194.8 920.9 195.3 919.7 195.8 918.4 196.3 917.3 196.8 916.6 197.3 916.3 197.9 917.6 198.4 921.1 199 925.8 199.6 930.6 200.1 934.1 200.7 935.3 201.2 934 201.7 930.4 202.2 925.1 202.8 919.2 203.3 914 203.8 910.3 204.3 909 204.8 910.3 205.3 914 205.8 919.5 206.3 926 206.8 932.5 207.3 938 207.8 941.7 208.3 943 208.8 941.4 209.3 936.7 209.8 929.6 210.3 921.3 210.8 913 211.3 906 211.8 901.3 212.3 899.7 212.9 901.9 213.4 908.1 213.9 917.2 214.4 927.2 215 936.2 215.5 942.4 216 944.7 216.5 943.3 217 939.4 217.5 933.6 218 926.7 218.5 919.8 219 913.9 219.5 910 220 908.7 220.5 910.5 221 915.8 221.6 923.3 222.1 931.7 222.6 939.2 223.1 944.5 223.7 946.3 224.2 944.2 224.7 938.2 225.2 929.2 225.7 918.5 226.2 907.8 226.7 898.8 227.2 892.8 227.7 890.7 228.2 892.4 228.7 897.4 229.2 904.8 229.7 913.5 230.2 922.2 230.7 929.6 231.2 934.6 231.7 936.3 232.2 933.9 232.7 926.9 233.2 916.9 233.8 905.8 234.3 895.7 234.8 888.8 235.3 886.3 235.9 888.5 236.4 894.5 236.9 903.2 237.4 912.8 238 921.5 238.5 927.5 239 929.7 239.5 927.2 240 920.3 240.6 910.2 241.1 899.1 241.6 889.1 242.1 882.1 242.7 879.7 243.2 881.4 243.7 886.5 244.2 894.1 244.7 903 245.2 911.9 245.7 919.5 246.2 924.6 246.7 926.3 247.2 922.8 247.8 913.2 248.3 900 248.9 886.8 249.4 877.2 250 873.7 250.5 875.2 251 879.4 251.5 885.8 252 893.3 252.5 900.9 253 907.2 253.5 911.5 254 913 254.5 910.6 255 904 255.6 894.5 256.1 883.9 256.6 874.3 257.1 867.7 257.7 865.3 258.2 867 258.7 871.8 259.2 879 259.7 887.5 260.2 896 260.7 903.2 261.2 908 261.7 909.7 262.2 908 262.7 903.3 263.2 896.2 263.7 887.8 264.2 879.5 264.7 872.4 265.2 867.7 265.7 866 266.2 867.9 266.7 873.3 267.2 881 267.8 889.6 268.3 897.4 268.8 902.8 269.3 904.7 269.8 902.8 270.3 897.5 270.8 889.5 271.3 880.2 271.8 870.8 272.3 862.8 272.8 857.5 273.3 855.7 273.8 857.4 274.3 862.4 274.8 869.8 275.3 878.5 275.8 887.2 276.3 894.6 276.8 899.6 277.3 901.3 277.9 899.9 278.4 895.9 279 890.5 279.6 885.1 280.1 881.1 280.7 879.7 281.2 881.5 281.7 886.6 282.2 894.4 282.7 903.5 283.2 912.6 283.7 920.4 284.2 925.5 284.7 927.3 285.2 925.2 285.7 919.2 286.2 910.5 286.8 900.8 287.3 892.2 287.8 886.1 288.3 884 288.9 885.9 289.4 891.3 290 899.4 290.5 909 291 918.6 291.6 926.7 292.1 932.1 292.7 934 293.2 929.9 293.8 918.8 294.3 903.7 294.9 888.5 295.4 877.4 296 873.3 296.5 874.3 297 877 297.5 881.2 298 886 298.5 890.8 299 895 299.5 897.7 300 898.7" fill="none" stroke="#7eb26d" stroke-width="3" stroke-linejoin="round" stroke-linecap="butt"/>
<g font-size="10" fill="#d8d9da" stroke="#d8d9da" stroke-width="0.2"><text x="65.2" y="975.4" text-anchor="end">10.0 °C</text><text x="65.2" y="947" text-anchor="end">15.0 °C</text><text x="65.2" y="918.6" text-anchor="end">20.0 °C</text><text x="65.2" y="890.2" text-anchor="end">25.0 °C</text><text x="65.2" y="861.8" text-anchor="end">30.0 °C</text><text x="65.2" y="833.4" text-anchor="end">35.0 °C</text><text x="115.5" y="987.5" text-anchor="middle">8/8</text><text x="176.5" y="987.5" text-anchor="middle">8/16</text><text x="237.5" y="987.5" text-anchor="middle">8/24</text><text x="298.5" y="987.5" text-anchor="middle">9/1</text></g>
<rect x="42.3" y="1007" width="12" height="4" fill="#7eb26d"/>
<text x="58.3" y="1012.1" font-size="11.1" fill="#d8d9da" stroke="#d8d9da" stroke-width="0.2" xml:space="preserve">Battery-temperature.last  Current: 23 °C</text>
<g stroke="rgba(255,255,255,0.14)" stroke-width="1" fill="none" shape-rendering="crispEdges"><path d="M1632 972.5H1861"/><path d="M1632 944.5H1861"/><path d="M1632 915.5H1861"/><path d="M1632 887.5H1861"/><path d="M1632 858.5H1861"/><path d="M1632 830.5H1861"/><path d="M1676.5 830V973"/><path d="M1737.5 830V973"/><path d="M1798.5 830V973"/><path d="M1859.5 830V973"/></g>
<path d="M1632 939.9 1632.5 937.8 1633.1 932.1 1633.7 924.4 1634.2 916.7 1634.8 911 1635.4 908.9 1635.9 910.5 1636.4 914.9 1636.9 921.5 1637.4 929.2 1638 937 1638.5 943.6 1639 948 1639.5 949.5 1640.1 947.1 1640.6 940.4 1641.1 930.8 1641.7 920.1 1642.2 910.4 1642.8 903.8 1643.3 901.4 1643.8 903.6 1644.3 909.8 1644.8 919.1 1645.4 930.1 1645.9 941.1 1646.4 950.4 1646.9 956.6 1647.4 958.8 1647.9 955.9 1648.4 947.9 1649 937 1649.5 926 1650 918.1 1650.5 915.1 1651 916.7 1651.5 921.3 1652.1 928.2 1652.6 936.3 1653.1 944.4 1653.6 951.2 1654.1 955.8 1654.6 957.4 1655.2 953.9 1655.8 944.3 1656.4 931.1 1656.9 918 1657.5 908.3 1658.1 904.8 1658.6 906.2 1659.1 910.1 1659.6 916 1660.1 922.9 1660.7 929.8 1661.2 935.6 1661.7 939.5 1662.2 940.9 1662.7 938.8 1663.3 932.8 1663.8 924.2 1664.4 914.6 1664.9 906 1665.4 900.1 1666 897.9 1666.5 900.1 1667 906.2 1667.5 915.4 1668 926.3 1668.6 937.2 1669.1 946.4 1669.6 952.5 1670.1 954.7 1670.6 952.2 1671.2 945.3 1671.7 935.3 1672.3 924.2 1672.8 914.2 1673.3 907.3 1673.9 904.8 1674.4 906.4 1674.9 911 1675.4 917.9 1676 926 1676.5 934 1677 940.9 1677.5 945.5 1678 947.1 1678.5 945.4 1679 940.5 1679.6 933.2 1680.1 924.6 1680.6 916 1681.1 908.7 1681.6 903.8 1682.1 902.1 1682.7 903.9 1683.2 909.2 1683.7 917 1684.2 926.3 1684.7 935.6 1685.2 943.4 1685.7 948.7 1686.3 950.5 1686.8 947.9 1687.4 940.6 1688 930.6 1688.6 920.6 1689.1 913.3 1689.7 910.7 1690.2 911.6 1690.7 914.3 1691.2 918.4 1691.8 923.2 1692.3 928 1692.8 932.1 1693.3 934.8 1693.8 935.8 1694.4 933.6 1695 927.6 1695.5 919.4 1696.1 911.3 1696.7 905.3 1697.3 903.1 1697.8 904.6 1698.3 908.9 1698.8 915.3 1699.3 922.9 1699.8 930.4 1700.4 936.8 1700.9 941.1 1701.4 942.6 1701.9 940.6 1702.5 935 1703 926.9 1703.5 917.8 1704.1 909.7 1704.6 904.1 1705.2 902.1 1705.7 904.1 1706.3 909.8 1706.8 918.1 1707.3 927.3 1707.9 935.6 1708.4 941.3 1709 943.3 1709.5 941.2 1710 935.3 1710.6 926.7 1711.1 917.3 1711.7 908.7 1712.2 902.8 1712.7 900.7 1713.3 903.1 1713.8 909.9 1714.4 919.7 1714.9 930.5 1715.4 940.3 1716 947.1 1716.5 949.5 1717.1 948.1 1717.7 944.2 1718.2 938.8 1718.8 933.5 1719.4 929.6 1720 928.2 1720.5 930.3 1721 936.3 1721.6 944.9 1722.1 954.5 1722.7 963.1 1723.2 969 1723.7 971.2 1724.3 968.4 1724.8 960.5 1725.4 949.1 1725.9 936.5 1726.4 925.1 1727 917.2 1727.5 914.4 1728 916 1728.5 920.5 1729.1 927.2 1729.6 935.1 1730.1 943 1730.6 949.7 1731.1 954.1 1731.6 955.7 1732.2 954.5 1732.7 951.1 1733.3 946.2 1733.8 940.8 1734.3 935.9 1734.9 932.5 1735.4 931.3 1736 932.5 1736.5 936 1737 941 1737.6 946.6 1738.1 951.7 1738.7 955.1 1739.2 956.4 1739.7 954.1 1740.3 947.6 1740.8 938.3 1741.4 928 1741.9 918.7 1742.4 912.3 1743 910 1743.5 911.4 1744 915.5 1744.5 921.6 1745 928.9 1745.6 936.1 1746.1 942.2 1746.6 946.3 1747.1 947.8 1747.6 946.3 1748.2 942.1 1748.7 936 1749.3 929.3 1749.8 923.2 1750.4 919 1750.9 917.5 1751.4 918.6 1751.9 921.5 1752.4 925.8 1753 930.9 1753.5 936.1 1754 940.4 1754.5 943.3 1755 944.3 1755.6 943.4 1756.2 940.7 1756.7 937.1 1757.3 933.5 1757.9 930.9 1758.5 929.9 1759 931.3 1759.5 935.3 1760.1 941.1 1760.6 947.6 1761.2 953.4 1761.7 957.4 1762.2 958.8 1762.8 956.7 1763.3 950.9 1763.9 942.5 1764.4 933.2 1764.9 924.7 1765.5 918.9 1766 916.8 1766.6 919.3 1767.1 926.4 1767.6 936.5 1768.2 947.7 1768.7 957.9 1769.3 964.9 1769.8 967.4 1770.3 965 1770.8 958.1 1771.3 947.9 1771.9 935.8 1772.4 923.7 1772.9 913.4 1773.4 906.5 1773.9 904.1 1774.5 908.5 1775.1 920.5 1775.6 936.8 1776.2 953.1 1776.8 965.1 1777.4 969.4 1777.9 967.4 1778.4 961.5 1778.9 952.7 1779.4 942.3 1779.9 931.9 1780.5 923.1 1781 917.2 1781.5 915.1 1782 917.9 1782.6 925.6 1783.1 936.8 1783.6 949.2 1784.2 960.3 1784.7 968.1 1785.3 970.8 1785.8 967.7 1786.3 958.9 1786.8 945.7 1787.3 930.1 1787.8 914.5 1788.4 901.3 1788.9 892.4 1789.4 889.3 1789.9 892.8 1790.5 902.5 1791 916.5 1791.6 932 1792.1 946 1792.6 955.7 1793.2 959.1 1793.7 955.3 1794.3 944.7 1794.8 929.3 1795.3 912.3 1795.9 896.9 1796.4 886.3 1797 882.5 1797.5 885.8 1798 895.2 1798.6 908.8 1799.1 923.9 1799.7 937.4 1800.2 946.8 1800.7 950.2 1801.3 945.3 1801.9 932 1802.5 913.8 1803 895.5 1803.6 882.2 1804.2 877.3 1804.7 880 1805.2 887.6 1805.7 899.1 1806.2 912.6 1806.8 926 1807.3 937.5 1807.8 945.1 1808.3 947.8 1808.9 942.7 1809.4 928.9 1810 910 1810.6 891.1 1811.2 877.2 1811.7 872.2 1812.3 874.4 1812.8 880.8 1813.3 890.4 1813.8 901.7 1814.3 913 1814.8 922.6 1815.3 929 1815.9 931.3 1816.4 926.8 1817 914.5 1817.6 897.8 1818.2 881 1818.7 868.7 1819.3 864.3 1819.8 867.4 1820.4 876.1 1820.9 888.7 1821.5 902.7 1822 915.3 1822.5 924 1823.1 927.2 1823.6 924.8 1824.1 918.1 1824.6 908.1 1825.1 896.2 1825.7 884.4 1826.2 874.3 1826.7 867.6 1827.2 865.3 1827.7 868.1 1828.3 875.8 1828.8 887.1 1829.4 899.5 1829.9 910.8 1830.4 918.5 1831 921.3 1831.5 918.1 1832.1 909 1832.6 895.9 1833.1 881.4 1833.7 868.3 1834.2 859.2 1834.8 856 1835.3 859.1 1835.8 867.8 1836.4 880.3 1836.9 894.2 1837.5 906.8 1838 915.5 1838.5 918.6 1839.1 916.6 1839.7 911.3 1840.3 904 1840.8 896.7 1841.4 891.3 1842 889.3 1842.5 891.6 1843 898.2 1843.5 907.9 1844 919.4 1844.6 930.9 1845.1 940.7 1845.6 947.2 1846.1 949.5 1846.7 946.4 1847.2 937.7 1847.7 925.2 1848.3 911.3 1848.8 898.7 1849.4 890 1849.9 886.9 1850.4 889.6 1850.9 897.1 1851.4 908.4 1852 921.7 1852.5 934.9 1853 946.2 1853.5 953.7 1854 956.4 1854.6 950.4 1855.2 934.2 1855.7 912 1856.3 889.9 1856.9 873.6 1857.5 867.7 1858 870.3 1858.5 877.8 1859.1 888.5 1859.6 900.5 1860.2 911.2 1860.7 918.7 1861.2 921.3 L1861.2 972.5 L1632 972.5 Z" fill="#7eb26d" fill-opacity="0.8" stroke="none"/>
<path d="M1632 939.9 1632.5 937.8 1633.1 932.1 1633.7 924.4 1634.2 916.7 1634.8 911 1635.4 908.9 1635.9 910.5 1636.4 914.9 1636.9 921.5 1637.4 929.2 1638 937 1638.5 943.6 1639 948 1639.5 949.5 1640.1 947.1 1640.6 940.4 1641.1 930.8 1641.7 920.1 1642.2 910.4 1642.8 903.8 1643.3 901.4 1643.8 903.6 1644.3 909.8 1644.8 919.1 1645.4 930.1 1645.9 941.1 1646.4 950.4 1646.9 956.6 1647.4 958.8 1647.9 955.9 1648.4 947.9 1649 937 1649.5 926 1650 918.1 1650.5 915.1 1651 916.7 1651.5 921.3 1652.1 928.2 1652.6 936.3 1653.1 944.4 1653.6 951.2 1654.1 955.8 1654.6 957.4 1655.2 953.9 1655.8 944.3 1656.4 931.1 1656.9 918 1657.5 908.3 1658.1 904.8 1658.6 906.2 1659.1 910.1 1659.6 916 1660.1 922.9 1660.7 929.8 1661.2 935.6 1661.7 939.5 1662.2 940.9 1662.7 938.8 1663.3 932.8 1663.8 924.2 1664.4 914.6 1664.9 906 1665.4 900.1 1666 897.9 1666.5 900.1 1667 906.2 1667.5 915.4 1668 926.3 1668.6 937.2 1669.1 946.4 1669.6 952.5 1670.1 954.7 1670.6 952.2 1671.2 945.3 1671.7 935.3 1672.3 924.2 1672.8 914.2 1673.3 907.3 1673.9 904.8 1674.4 906.4 1674.9 911 1675.4 917.9 1676 926 1676.5 934 1677 940.9 1677.5 945.5 1678 947.1 1678.5 945.4 1679 940.5 1679.6 933.2 1680.1 924.6 1680.6 916 1681.1 908.7 1681.6 903.8 1682.1 902.1 1682.7 903.9 1683.2 909.2 1683.7 917 1684.2 926.3 1684.7 935.6 1685.2 943.4 1685.7 948.7 1686.3 950.5 1686.8 947.9 1687.4 940.6 1688 930.6 1688.6 920.6 1689.1 913.3 1689.7 910.7 1690.2 911.6 1690.7 914.3 1691.2 918.4 1691.8 923.2 1692.3 928 1692.8 932.1 1693.3 934.8 1693.8 935.8 1694.4 933.6 1695 927.6 1695.5 919.4 1696.1 911.3 1696.7 905.3 1697.3 903.1 1697.8 904.6 1698.3 908.9 1698.8 915.3 1699.3 922.9 1699.8 930.4 1700.4 936.8 1700.9 941.1 1701.4 942.6 1701.9 940.6 1702.5 935 1703 926.9 1703.5 917.8 1704.1 909.7 1704.6 904.1 1705.2 902.1 1705.7 904.1 1706.3 909.8 1706.8 918.1 1707.3 927.3 1707.9 935.6 1708.4 941.3 1709 943.3 1709.5 941.2 1710 935.3 1710.6 926.7 1711.1 917.3 1711.7 908.7 1712.2 902.8 1712.7 900.7 1713.3 903.1 1713.8 909.9 1714.4 919.7 1714.9 930.5 1715.4 940.3 1716 947.1 1716.5 949.5 1717.1 948.1 1717.7 944.2 1718.2 938.8 1718.8 933.5 1719.4 929.6 1720 928.2 1720.5 930.3 1721 936.3 1721.6 944.9 1722.1 954.5 1722.7 963.1 1723.2 969 1723.7 971.2 1724.3 968.4 1724.8 960.5 1725.4 949.1 1725.9 936.5 1726.4 925.1 1727 917.2 1727.5 914.4 1728 916 1728.5 920.5 1729.1 927.2 1729.6 935.1 1730.1 943 1730.6 949.7 1731.1 954.1 1731.6 955.7 1732.2 954.5 1732.7 951.1 1733.3 946.2 1733.8 940.8 1734.3 935.9 1734.9 932.5 1735.4 931.3 1736 932.5 1736.5 936 1737 941 1737.6 946.6 1738.1 951.7 1738.7 955.1 1739.2 956.4 1739.7 954.1 1740.3 947.6 1740.8 938.3 1741.4 928 1741.9 918.7 1742.4 912.3 1743 910 1743.5 911.4 1744 915.5 1744.5 921.6 1745 928.9 1745.6 936.1 1746.1 942.2 1746.6 946.3 1747.1 947.8 1747.6 946.3 1748.2 942.1 1748.7 936 1749.3 929.3 1749.8 923.2 1750.4 919 1750.9 917.5 1751.4 918.6 1751.9 921.5 1752.4 925.8 1753 930.9 1753.5 936.1 1754 940.4 1754.5 943.3 1755 944.3 1755.6 943.4 1756.2 940.7 1756.7 937.1 1757.3 933.5 1757.9 930.9 1758.5 929.9 1759 931.3 1759.5 935.3 1760.1 941.1 1760.6 947.6 1761.2 953.4 1761.7 957.4 1762.2 958.8 1762.8 956.7 1763.3 950.9 1763.9 942.5 1764.4 933.2 1764.9 924.7 1765.5 918.9 1766 916.8 1766.6 919.3 1767.1 926.4 1767.6 936.5 1768.2 947.7 1768.7 957.9 1769.3 964.9 1769.8 967.4 1770.3 965 1770.8 958.1 1771.3 947.9 1771.9 935.8 1772.4 923.7 1772.9 913.4 1773.4 906.5 1773.9 904.1 1774.5 908.5 1775.1 920.5 1775.6 936.8 1776.2 953.1 1776.8 965.1 1777.4 969.4 1777.9 967.4 1778.4 961.5 1778.9 952.7 1779.4 942.3 1779.9 931.9 1780.5 923.1 1781 917.2 1781.5 915.1 1782 917.9 1782.6 925.6 1783.1 936.8 1783.6 949.2 1784.2 960.3 1784.7 968.1 1785.3 970.8 1785.8 967.7 1786.3 958.9 1786.8 945.7 1787.3 930.1 1787.8 914.5 1788.4 901.3 1788.9 892.4 1789.4 889.3 1789.9 892.8 1790.5 902.5 1791 916.5 1791.6 932 1792.1 946 1792.6 955.7 1793.2 959.1 1793.7 955.3 1794.3 944.7 1794.8 929.3 1795.3 912.3 1795.9 896.9 1796.4 886.3 1797 882.5 1797.5 885.8 1798 895.2 1798.6 908.8 1799.1 923.9 1799.7 937.4 1800.2 946.8 1800.7 950.2 1801.3 945.3 1801.9 932 1802.5 913.8 1803 895.5 1803.6 882.2 1804.2 877.3 1804.7 880 1805.2 887.6 1805.7 899.1 1806.2 912.6 1806.8 926 1807.3 937.5 1807.8 945.1 1808.3 947.8 1808.9 942.7 1809.4 928.9 1810 910 1810.6 891.1 1811.2 877.2 1811.7 872.2 1812.3 874.4 1812.8 880.8 1813.3 890.4 1813.8 901.7 1814.3 913 1814.8 922.6 1815.3 929 1815.9 931.3 1816.4 926.8 1817 914.5 1817.6 897.8 1818.2 881 1818.7 868.7 1819.3 864.3 1819.8 867.4 1820.4 876.1 1820.9 888.7 1821.5 902.7 1822 915.3 1822.5 924 1823.1 927.2 1823.6 924.8 1824.1 918.1 1824.6 908.1 1825.1 896.2 1825.7 884.4 1826.2 874.3 1826.7 867.6 1827.2 865.3 1827.7 868.1 1828.3 875.8 1828.8 887.1 1829.4 899.5 1829.9 910.8 1830.4 918.5 1831 921.3 1831.5 918.1 1832.1 909 1832.6 895.9 1833.1 881.4 1833.7 868.3 1834.2 859.2 1834.8 856 1835.3 859.1 1835.8 867.8 1836.4 880.3 1836.9 894.2 1837.5 906.8 1838 915.5 1838.5 918.6 1839.1 916.6 1839.7 911.3 1840.3 904 1840.8 896.7 1841.4 891.3 1842 889.3 1842.5 891.6 1843 898.2 1843.5 907.9 1844 919.4 1844.6 930.9 1845.1 940.7 1845.6 947.2 1846.1 949.5 1846.7 946.4 1847.2 937.7 1847.7 925.2 1848.3 911.3 1848.8 898.7 1849.4 890 1849.9 886.9 1850.4 889.6 1850.9 897.1 1851.4 908.4 1852 921.7 1852.5 934.9 1853 946.2 1853.5 953.7 1854 956.4 1854.6 950.4 1855.2 934.2 1855.7 912 1856.3 889.9 1856.9 873.6 1857.5 867.7 1858 870.3 1858.5 877.8 1859.1 888.5 1859.6 900.5 1860.2 911.2 1860.7 918.7 1861.2 921.3" fill="none" stroke="#7eb26d" stroke-width="3" stroke-linejoin="round" stroke-linecap="butt"/>
<g font-size="10" fill="#d8d9da" stroke="#d8d9da" stroke-width="0.2"><text x="1626.4" y="975.4" text-anchor="end">15.0 °C</text><text x="1626.4" y="947" text-anchor="end">20.0 °C</text><text x="1626.4" y="918.6" text-anchor="end">25.0 °C</text><text x="1626.4" y="890.2" text-anchor="end">30.0 °C</text><text x="1626.4" y="861.8" text-anchor="end">35.0 °C</text><text x="1626.4" y="833.4" text-anchor="end">40.0 °C</text><text x="1676.5" y="987.5" text-anchor="middle">8/8</text><text x="1737.5" y="987.5" text-anchor="middle">8/16</text><text x="1798.5" y="987.5" text-anchor="middle">8/24</text><text x="1859.5" y="987.5" text-anchor="middle">9/1</text></g>
<rect x="1603.2" y="1006.6" width="12" height="4" fill="#7eb26d"/>
<text x="1619.2" y="1011.7" font-size="11.1" fill="#d8d9da" stroke="#d8d9da" stroke-width="0.2" xml:space="preserve">Charger-temperature.last  Current: 24 °C</text>
<path d="M26.2 751.2 27.9 763.1 29.4 768.8 31.2 772.4 33.4 765.2 35.2 753.7 37 730 38.7 753.7 40.3 765.2 42.2 772.4 44.1 763.4 45.5 749 47 719.2 48.6 749 50.2 763.4 52.1 772.4 53.9 766.1 55.3 756.2 56.8 735.5 58.4 756.2 59.9 766.1 61.8 772.4 63.5 767.1 64.8 758.7 66.2 741.2 67.8 758.7 69.3 767.1 71.1 772.4 72.8 760.1 74.1 740.5 75.5 700 77.1 740.5 78.6 760.1 80.5 772.4 82.2 759.5 83.6 738.9 85 696.2 86.7 738.9 88.3 759.5 90.2 772.4 92.1 768.2 93.5 761.4 95 747.5 96.6 761.4 98.1 768.2 100 772.4 101.7 767.7 103.1 760.3 104.5 745 106.1 760.3 107.7 767.7 109.6 772.4 111.4 760.8 112.8 742.4 114.2 704.2 115.9 742.4 117.5 760.8 119.5 772.4 121.3 760.5 122.7 741.6 124.2 702.5 125.9 741.6 127.5 760.5 129.5 772.4 131.3 766.1 132.7 756.2 134.2 735.5 135.8 756.2 137.3 766.1 139.2 772.4 141 767.3 142.3 759.2 143.8 742.5 145.3 759.2 146.8 767.3 148.8 772.4 150.5 766.9 151.8 758.1 153.2 740 154.8 758.1 156.3 766.9 158.1 772.4 159.8 767.7 161.1 760.3 162.5 745 164.2 760.3 165.8 767.7 167.8 772.4 169.6 767.5 171 759.8 172.5 743.8 174.1 759.8 175.6 767.5 177.5 772.4 179.2 768.9 180.6 763.4 182 752 183.7 763.4 185.3 768.9 187.2 772.4 189.1 756.3 190.5 730.6 192 677.5 193.6 730.6 195.2 756.3 197.1 772.4 198.9 768.4 200.3 762 201.8 748.8 203.3 762 204.8 768.4 206.8 772.4 208.5 759 209.8 737.8 211.2 693.8 212.9 737.8 214.5 759 216.5 772.4 218.3 765 219.7 753.2 221.2 728.8 222.8 753.2 224.3 765 226.1 772.4 227.8 761.4 229.1 743.8 230.5 707.5 232.1 743.8 233.6 761.4 235.5 772.4 237.2 768 238.6 760.9 240 746.2 241.6 760.9 243.1 768 245 772.4 246.7 768.4 248.1 762 249.5 748.8 251.2 762 252.8 768.4 254.8 772.4 256.6 766.9 258 758.1 259.5 740 261.1 758.1 262.7 766.9 264.6 772.4 266.4 762.2 267.8 746 269.2 712.5 270.9 746 272.4 762.2 274.2 772.4 276 759.5 277.3 738.9 278.8 696.2 280.4 738.9 282 759.5 284 772.4 285.8 744.8 287.2 700.9 288.8 610 290.4 700.9 291.9 744.8 293.8 772.4 295.5 763.2 296.8 748.5 298.2 718 299.9 748.5 301.4 763.2 303.4 772.4 305.1 763 306.5 748 308 717 309.1 748 310.2 763 311.5 772.4 314.5 772.4 L314.5 772.5 L26.2 772.5 Z" fill="rgb(31,118,189)" fill-opacity="0.16" stroke="none"/>
<path d="M26.2 751.2 27.9 763.1 29.4 768.8 31.2 772.4 33.4 765.2 35.2 753.7 37 730 38.7 753.7 40.3 765.2 42.2 772.4 44.1 763.4 45.5 749 47 719.2 48.6 749 50.2 763.4 52.1 772.4 53.9 766.1 55.3 756.2 56.8 735.5 58.4 756.2 59.9 766.1 61.8 772.4 63.5 767.1 64.8 758.7 66.2 741.2 67.8 758.7 69.3 767.1 71.1 772.4 72.8 760.1 74.1 740.5 75.5 700 77.1 740.5 78.6 760.1 80.5 772.4 82.2 759.5 83.6 738.9 85 696.2 86.7 738.9 88.3 759.5 90.2 772.4 92.1 768.2 93.5 761.4 95 747.5 96.6 761.4 98.1 768.2 100 772.4 101.7 767.7 103.1 760.3 104.5 745 106.1 760.3 107.7 767.7 109.6 772.4 111.4 760.8 112.8 742.4 114.2 704.2 115.9 742.4 117.5 760.8 119.5 772.4 121.3 760.5 122.7 741.6 124.2 702.5 125.9 741.6 127.5 760.5 129.5 772.4 131.3 766.1 132.7 756.2 134.2 735.5 135.8 756.2 137.3 766.1 139.2 772.4 141 767.3 142.3 759.2 143.8 742.5 145.3 759.2 146.8 767.3 148.8 772.4 150.5 766.9 151.8 758.1 153.2 740 154.8 758.1 156.3 766.9 158.1 772.4 159.8 767.7 161.1 760.3 162.5 745 164.2 760.3 165.8 767.7 167.8 772.4 169.6 767.5 171 759.8 172.5 743.8 174.1 759.8 175.6 767.5 177.5 772.4 179.2 768.9 180.6 763.4 182 752 183.7 763.4 185.3 768.9 187.2 772.4 189.1 756.3 190.5 730.6 192 677.5 193.6 730.6 195.2 756.3 197.1 772.4 198.9 768.4 200.3 762 201.8 748.8 203.3 762 204.8 768.4 206.8 772.4 208.5 759 209.8 737.8 211.2 693.8 212.9 737.8 214.5 759 216.5 772.4 218.3 765 219.7 753.2 221.2 728.8 222.8 753.2 224.3 765 226.1 772.4 227.8 761.4 229.1 743.8 230.5 707.5 232.1 743.8 233.6 761.4 235.5 772.4 237.2 768 238.6 760.9 240 746.2 241.6 760.9 243.1 768 245 772.4 246.7 768.4 248.1 762 249.5 748.8 251.2 762 252.8 768.4 254.8 772.4 256.6 766.9 258 758.1 259.5 740 261.1 758.1 262.7 766.9 264.6 772.4 266.4 762.2 267.8 746 269.2 712.5 270.9 746 272.4 762.2 274.2 772.4 276 759.5 277.3 738.9 278.8 696.2 280.4 738.9 282 759.5 284 772.4 285.8 744.8 287.2 700.9 288.8 610 290.4 700.9 291.9 744.8 293.8 772.4 295.5 763.2 296.8 748.5 298.2 718 299.9 748.5 301.4 763.2 303.4 772.4 305.1 763 306.5 748 308 717 309.1 748 310.2 763 311.5 772.4 314.5 772.4" fill="none" stroke="#1f78c1" stroke-width="1" stroke-linejoin="miter"/>
<path d="M86.24 749.78 A88.6 88.6 0 1 1 254.76 749.78 L227.56 740.94 A60 60 0 1 0 113.44 740.94 Z" fill="#262626"/>
<path d="M79.96 751.82 A95.2 95.2 0 1 1 261.04 751.82 L255.81 750.12 A89.7 89.7 0 1 0 85.19 750.12 Z" fill="#508642"/>
<text transform="translate(71.97 754.41) rotate(252.0)" font-size="14.4" fill="#d8d9da" text-anchor="middle" y="5">0</text>
<text transform="translate(269.03 754.41) rotate(468.0)" font-size="14.4" fill="#d8d9da" text-anchor="middle" y="5">200</text>
<text x="170.5" y="744.0" font-size="36" font-weight="bold" fill="#dcdcde" text-anchor="middle">0 W</text>
<path d="M1587 692.5 1589.1 708.1 1590.3 709.6 1592.4 674.6 1593.4 665.6 1594.7 673.6 1597 695.6 1598.8 708.4 1600 709.9 1602.1 675 1603.1 666 1604.4 674 1606.7 696 1608.5 708.4 1609.7 709.9 1611.8 674.8 1612.8 665.8 1614.1 673.8 1616.4 695.8 1618.2 707.7 1619.4 709.2 1621.5 673.1 1622.5 664.1 1623.8 672.1 1626.1 694.1 1627.9 708 1629.1 709.5 1631.2 675.4 1632.2 666.4 1633.5 674.4 1635.8 696.4 1637.7 707.2 1638.9 708.7 1641 675.3 1642 666.3 1643.2 674.3 1645.5 696.3 1647.4 707.4 1648.6 708.9 1650.7 674.2 1651.7 665.2 1653 673.2 1655.3 695.2 1657.1 707.9 1658.3 709.4 1660.4 674.4 1661.4 665.4 1662.7 673.4 1665 695.4 1666.8 707.3 1668 708.8 1670.1 673 1671.1 664 1672.4 672 1674.7 694 1676.5 708.4 1677.7 709.9 1679.8 673.7 1680.8 664.7 1682.1 672.7 1684.4 694.7 1686.2 707.2 1687.4 708.7 1689.5 674.9 1690.5 665.9 1691.8 673.9 1694.1 695.9 1695.9 707.2 1697.1 708.7 1699.2 675 1700.2 666 1701.5 674 1703.8 696 1705.6 707.2 1706.8 708.7 1708.9 674.5 1709.9 665.5 1711.2 673.5 1713.5 695.5 1715.3 708.3 1716.5 709.8 1718.6 673 1719.6 664 1720.9 672 1723.2 694 1725 707.3 1726.2 708.8 1728.3 673.5 1729.3 664.5 1730.6 672.5 1732.9 694.5 1734.8 708.3 1736 709.8 1738.1 675.5 1739.1 666.5 1740.4 674.5 1742.7 696.5 1744.5 708.4 1745.7 709.9 1747.8 673.7 1748.8 664.7 1750.1 672.7 1752.4 694.7 1754.2 708 1755.4 709.5 1757.5 674.3 1758.5 665.3 1759.8 673.3 1762.1 695.3 1763.9 708.4 1765.1 709.9 1767.2 673.5 1768.2 664.5 1769.5 672.5 1771.8 694.5 1773.6 708.4 1774.8 709.9 1776.9 674.7 1777.9 665.7 1779.2 673.7 1781.5 695.7 1783.3 707.4 1784.5 708.9 1786.6 675.2 1787.6 666.2 1788.9 674.2 1791.2 696.2 1793 707.2 1794.2 708.7 1792.6 668 1793.8 610 1795.2 672 1796.3 668 1799 690 1802.7 707.1 1803.9 708.6 1806 663.1 1807 654.1 1808.3 662.1 1810.6 684.1 1812.4 707 1813.6 708.5 1815.7 663.3 1816.7 654.3 1818 662.3 1820.3 684.3 1822.1 707.5 1823.3 709 1825.4 662.9 1826.4 653.9 1827.7 661.9 1830 683.9 1831.9 707.5 1833.1 709 1835.2 661.7 1836.2 652.7 1837.5 660.7 1839.8 682.7 1841.6 707.1 1842.8 708.6 1844.9 662.1 1845.9 653.1 1847.2 661.1 1849.5 683.1 1851.3 708.1 1852.5 709.6 1854.6 661.2 1855.6 652.2 1856.9 660.2 1859.2 682.2 1861 708.2 1862.2 709.7 1864.3 659.6 1865.3 650.6 1866.6 658.6 1868.9 680.6 1870.7 707 1871.9 708.5 1874.4 668 1875.4 652 1876 645.5 L1876 772.9 L1587 772.9 Z" fill="rgb(31,118,189)" fill-opacity="0.16" stroke="none"/>
<path d="M1587 692.5 1589.1 708.1 1590.3 709.6 1592.4 674.6 1593.4 665.6 1594.7 673.6 1597 695.6 1598.8 708.4 1600 709.9 1602.1 675 1603.1 666 1604.4 674 1606.7 696 1608.5 708.4 1609.7 709.9 1611.8 674.8 1612.8 665.8 1614.1 673.8 1616.4 695.8 1618.2 707.7 1619.4 709.2 1621.5 673.1 1622.5 664.1 1623.8 672.1 1626.1 694.1 1627.9 708 1629.1 709.5 1631.2 675.4 1632.2 666.4 1633.5 674.4 1635.8 696.4 1637.7 707.2 1638.9 708.7 1641 675.3 1642 666.3 1643.2 674.3 1645.5 696.3 1647.4 707.4 1648.6 708.9 1650.7 674.2 1651.7 665.2 1653 673.2 1655.3 695.2 1657.1 707.9 1658.3 709.4 1660.4 674.4 1661.4 665.4 1662.7 673.4 1665 695.4 1666.8 707.3 1668 708.8 1670.1 673 1671.1 664 1672.4 672 1674.7 694 1676.5 708.4 1677.7 709.9 1679.8 673.7 1680.8 664.7 1682.1 672.7 1684.4 694.7 1686.2 707.2 1687.4 708.7 1689.5 674.9 1690.5 665.9 1691.8 673.9 1694.1 695.9 1695.9 707.2 1697.1 708.7 1699.2 675 1700.2 666 1701.5 674 1703.8 696 1705.6 707.2 1706.8 708.7 1708.9 674.5 1709.9 665.5 1711.2 673.5 1713.5 695.5 1715.3 708.3 1716.5 709.8 1718.6 673 1719.6 664 1720.9 672 1723.2 694 1725 707.3 1726.2 708.8 1728.3 673.5 1729.3 664.5 1730.6 672.5 1732.9 694.5 1734.8 708.3 1736 709.8 1738.1 675.5 1739.1 666.5 1740.4 674.5 1742.7 696.5 1744.5 708.4 1745.7 709.9 1747.8 673.7 1748.8 664.7 1750.1 672.7 1752.4 694.7 1754.2 708 1755.4 709.5 1757.5 674.3 1758.5 665.3 1759.8 673.3 1762.1 695.3 1763.9 708.4 1765.1 709.9 1767.2 673.5 1768.2 664.5 1769.5 672.5 1771.8 694.5 1773.6 708.4 1774.8 709.9 1776.9 674.7 1777.9 665.7 1779.2 673.7 1781.5 695.7 1783.3 707.4 1784.5 708.9 1786.6 675.2 1787.6 666.2 1788.9 674.2 1791.2 696.2 1793 707.2 1794.2 708.7 1792.6 668 1793.8 610 1795.2 672 1796.3 668 1799 690 1802.7 707.1 1803.9 708.6 1806 663.1 1807 654.1 1808.3 662.1 1810.6 684.1 1812.4 707 1813.6 708.5 1815.7 663.3 1816.7 654.3 1818 662.3 1820.3 684.3 1822.1 707.5 1823.3 709 1825.4 662.9 1826.4 653.9 1827.7 661.9 1830 683.9 1831.9 707.5 1833.1 709 1835.2 661.7 1836.2 652.7 1837.5 660.7 1839.8 682.7 1841.6 707.1 1842.8 708.6 1844.9 662.1 1845.9 653.1 1847.2 661.1 1849.5 683.1 1851.3 708.1 1852.5 709.6 1854.6 661.2 1855.6 652.2 1856.9 660.2 1859.2 682.2 1861 708.2 1862.2 709.7 1864.3 659.6 1865.3 650.6 1866.6 658.6 1868.9 680.6 1870.7 707 1871.9 708.5 1874.4 668 1875.4 652 1876 645.5" fill="none" stroke="#1f78c1" stroke-width="1" stroke-linejoin="miter"/>
<path d="M1647.94 749.78 A88.6 88.6 0 1 1 1816.46 749.78 L1789.26 740.94 A60 60 0 1 0 1675.14 740.94 Z" fill="#262626"/>
<path d="M1647.94 749.78 A88.6 88.6 0 0 1 1656.11 677.01 L1680.67 691.66 A60 60 0 0 0 1675.14 740.94 Z" fill="#508642"/>
<path d="M1641.66 751.82 A95.2 95.2 0 1 1 1822.74 751.82 L1817.51 750.12 A89.7 89.7 0 1 0 1646.89 750.12 Z" fill="#508642"/>
<text transform="translate(1633.67 754.41) rotate(252.0)" font-size="14.4" fill="#d8d9da" text-anchor="middle" y="5">0</text>
<text transform="translate(1830.73 754.41) rotate(468.0)" font-size="14.4" fill="#d8d9da" text-anchor="middle" y="5">5</text>
<text x="1732.2" y="744.0" font-size="36" font-weight="bold" fill="#dcdcde" text-anchor="middle">1.13 A</text>
<path d="M1826.7 567.3H1835L1830.85 572.4Z" fill="#8e8e8e"/>
<path d="M398.24 989.88 A88.6 88.6 0 1 1 566.76 989.88 L539.56 981.04 A60 60 0 1 0 425.44 981.04 Z" fill="#262626"/>
<path d="M391.96 991.92 A95.2 95.2 0 1 1 573.04 991.92 L567.81 990.22 A89.7 89.7 0 1 0 397.19 990.22 Z" fill="#508642"/>
<text transform="translate(383.97 994.51) rotate(252.0)" font-size="14.4" fill="#d8d9da" text-anchor="middle" y="5">0</text>
<text transform="translate(581.03 994.51) rotate(468.0)" font-size="14.4" fill="#d8d9da" text-anchor="middle" y="5">10</text>
<text x="482.5" y="984.1" font-size="36" font-weight="bold" fill="#dcdcde" text-anchor="middle">0 A</text>
<path d="M1336.24 989.88 A88.6 88.6 0 1 1 1504.76 989.88 L1477.56 981.04 A60 60 0 1 0 1363.44 981.04 Z" fill="#262626"/>
<path d="M1336.24 989.88 A88.6 88.6 0 0 1 1364.37 893.95 L1382.49 916.08 A60 60 0 0 0 1363.44 981.04 Z" fill="#508642"/>
<path d="M1329.96 991.92 A95.2 95.2 0 0 1 1329.25 935.37 L1334.52 936.93 A89.7 89.7 0 0 0 1335.19 990.22 Z" fill="#bf1b00"/>
<path d="M1329.25 935.37 A95.2 95.2 0 0 1 1515.51 956.52 L1510.02 956.87 A89.7 89.7 0 0 0 1334.52 936.93 Z" fill="#508642"/>
<path d="M1515.51 956.52 A95.2 95.2 0 0 1 1511.04 991.92 L1505.81 990.22 A89.7 89.7 0 0 0 1510.02 956.87 Z" fill="#bf1b00"/>
<text transform="translate(1321.97 994.51) rotate(252.0)" font-size="14.4" fill="#d8d9da" text-anchor="middle" y="5">11</text>
<text transform="translate(1321.20 932.97) rotate(286.6)" font-size="14.4" fill="#d8d9da" text-anchor="middle" y="5">11.8</text>
<text transform="translate(1523.90 955.99) rotate(446.4)" font-size="14.4" fill="#d8d9da" text-anchor="middle" y="5">15.5</text>
<text transform="translate(1519.03 994.51) rotate(468.0)" font-size="14.4" fill="#d8d9da" text-anchor="middle" y="5">16</text>
<text x="1420.5" y="984.1" font-size="35.2" font-weight="bold" fill="#dcdcde" text-anchor="middle">12.59 V</text>
<path d="M762.9 1012.4L765.2 850L767.5 1012.4Z" fill="rgb(31,118,189)" fill-opacity="0.16"/>
<path d="M650 1012.4 762.9 1012.4 764.8 850 765.6 850 767.5 1012.4 939.5 1012.4" fill="none" stroke="#1f78c1" stroke-width="1"/>
<text x="795.0" y="934.4" font-size="42.8" font-weight="bold" fill="#dcdcde" text-anchor="middle">0 kW</text>
<path d="M1075.9 1012.4L1078.2 850L1080.5 1012.4Z" fill="rgb(31,118,189)" fill-opacity="0.16"/>
<path d="M962.5 1012.4 1075.9 1012.4 1077.8 850 1078.6 850 1080.5 1012.4 1252 1012.4" fill="none" stroke="#1f78c1" stroke-width="1"/>
<text x="1108.3" y="934.4" font-size="42.8" font-weight="bold" fill="#dcdcde" text-anchor="middle">0.04 kW</text>
</svg>
<div style="position:absolute;left:1903px;top:55px;width:17px;height:1023px;background:#f0f0f0;border-left:1px solid #fff;box-sizing:border-box"></div>
<div style="position:absolute;left:1904px;top:89px;width:15px;height:599px;background:#cdcdcd"></div>
<svg style="position:absolute;left:0;top:0" width="1920" height="1078"><g stroke="#505050" stroke-width="2.7" fill="none"><path d="M1906.6 79.2L1911.5 74.3L1916.4 79.2"/><path d="M1906.6 1053.6L1911.5 1058.5L1916.4 1053.6"/></g></svg>
</div>
<div style="position:absolute;left:0;top:1078px;width:1920px;height:1px;background:#050506"></div><div style="position:absolute;left:0;top:1079px;width:1920px;height:1px;background:#fff"></div>
</body></html>
